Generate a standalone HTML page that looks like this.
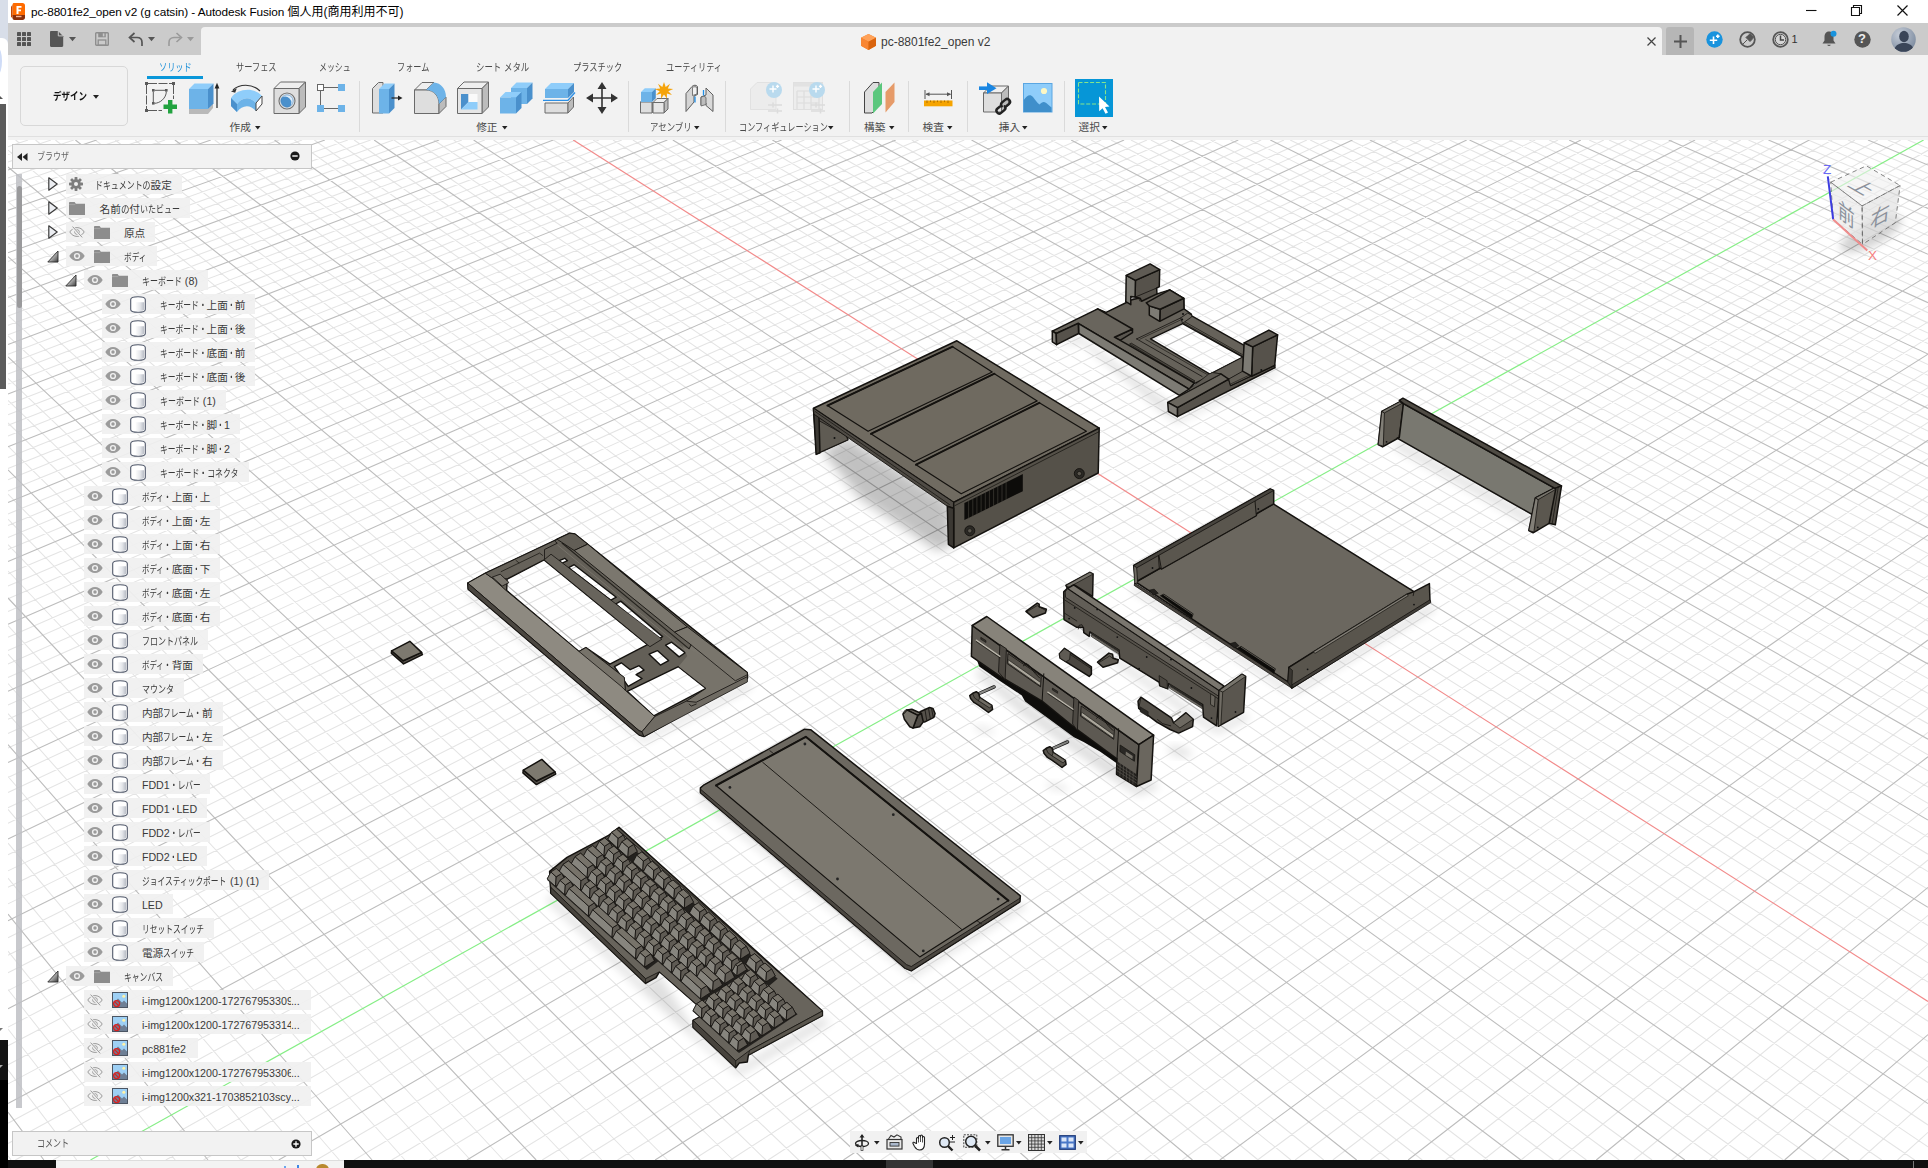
<!DOCTYPE html>
<html lang="ja"><head><meta charset="utf-8"><title>pc-8801fe2_open v2 - Autodesk Fusion</title>
<style>
html,body{margin:0;padding:0}
body{width:1928px;height:1168px;overflow:hidden;position:relative;background:#fff;font-family:"Liberation Sans","Noto Sans CJK JP",sans-serif;font-size:11px;color:#333}
.abs{position:absolute}
#vp{position:absolute;left:0;top:0;width:1928px;height:1168px}
#title{position:absolute;left:8px;top:0;width:1920px;height:23px;background:#fff}
#title .t{position:absolute;left:23px;top:2px;font-size:11.8px;color:#000;white-space:nowrap;letter-spacing:-0.08px}
#qat{position:absolute;left:8px;top:23px;width:1920px;height:32px;background:#cbcbcb}
#tab{position:absolute;left:193px;top:4px;width:1461px;height:28px;background:#f2f2f2;border-radius:4px 4px 0 0}
#tb{position:absolute;left:8px;top:55px;width:1920px;height:84.5px;background:#f2f2f2}
#tb:after{content:'';position:absolute;left:0;top:81px;width:100%;height:1px;background:#e0e0e0}
.tabl{position:absolute;top:60px;font-size:10.67px;color:#4a4a4a;white-space:nowrap;line-height:14px}
.grp{position:absolute;top:120px;font-size:10.67px;color:#4a4a4a;white-space:nowrap;line-height:14px}
.sep{position:absolute;top:81px;width:1px;height:51px;background:#dadada}
.k{display:inline-block;white-space:nowrap;vertical-align:top}
.k>span{display:inline-block;transform-origin:0 50%;white-space:nowrap}
.row{position:absolute;height:20px;background:rgba(240,240,240,.92);white-space:nowrap}
.row .tx{position:absolute;top:4px;font-size:10.67px;line-height:14px;color:#3a3a3a;white-space:nowrap}
.row .txs{position:static;display:inline-block;margin-top:4px}
.row .lat{font-size:10.7px;letter-spacing:0}
svg{position:absolute;overflow:visible}
</style></head><body>

<svg width="0" height="0" style="position:absolute"><defs>
<symbol id="eye" viewBox="0 0 16 12"><path d="M0.3 6C2.2 2.6 5 1 8 1s5.8 1.6 7.7 5C13.8 9.4 11 11 8 11S2.2 9.4.3 6Z" fill="#9b9b9b"/><circle cx="8" cy="6" r="3.1" fill="#f0f0f0"/><circle cx="8" cy="6" r="1.7" fill="#9b9b9b"/></symbol>
<symbol id="eyeoff" viewBox="0 0 16 12"><path d="M0.8 6C2.6 3 5.2 1.6 8 1.6S13.4 3 15.2 6C13.4 9 10.800 10.4 8 10.400S2.6 9 .8 6Z" fill="none" stroke="#9b9b9b" stroke-width="1"/><circle cx="8" cy="6" r="2.3" fill="none" stroke="#9b9b9b" stroke-width="1"/><path d="M3.2.6L12.8 11.400" stroke="#f0f0f0" stroke-width="2.6"/><path d="M3.6.6L13.2 11.400" stroke="#9b9b9b" stroke-width="1"/></symbol>
<symbol id="fold" viewBox="0 0 16 13"><path d="M0 1.2C0 .5.4 0 1 0h4.600l1.300 1.700H16V13H0Z" fill="#8d8d8d"/><path d="M0 2.600h6.200" stroke="#a9a9a9" stroke-width=".8"/></symbol>
<symbol id="gear" viewBox="0 0 14 14"><g fill="#7d7d7d"><circle cx="7" cy="7" r="4.700"/><g id="gt"><rect x="5.600" y="0" width="2.800" height="14" rx=".6"/></g><use href="#gt" transform="rotate(45 7 7)"/><use href="#gt" transform="rotate(90 7 7)"/><use href="#gt" transform="rotate(135 7 7)"/></g><circle cx="7" cy="7" r="2" fill="#f0f0f0"/></symbol>
<linearGradient id="bodyg" x1="0" y1="0" x2="1" y2="0"><stop offset="0" stop-color="#fdfdfd"/><stop offset=".55" stop-color="#e4e6ea"/><stop offset="1" stop-color="#b9bdc6"/></linearGradient>
<symbol id="body" viewBox="0 0 16 17"><path d="M.7 3.500C.7 1.800 3.500.7 8 .7s7.300 1.100 7.300 2.800v10c0 1.700-2.800 2.800-7.300 2.800S.7 15.200.7 13.500Z" fill="#fff" stroke="#50586a" stroke-width="1.100"/><path d="M5.500 6.300h8.500v7.500c-1 1-2.800 1.400-5 1.400-1.300 0-2.600-.2-3.500-.6Z" fill="url(#bodyg)"/></symbol>
<symbol id="img" viewBox="0 0 16 16"><rect x=".5" y=".5" width="15" height="15" fill="#9ed0f5" stroke="#4b5563" stroke-width="1"/><path d="M1 11.500L6 6.500l4 4 2-2 3 3V15H1Z" fill="#6e7f95"/><circle cx="11.800" cy="4.200" r="1.500" fill="#fff3a8"/><circle cx="4.600" cy="11.600" r="3" fill="none" stroke="#d9201f" stroke-width="1.300"/><path d="M2.600 9.600l4 4" stroke="#d9201f" stroke-width="1.300"/></symbol>
<linearGradient id="trg" x1="0" y1="0" x2="1" y2="1"><stop offset="0" stop-color="#f4f4f4"/><stop offset=".5" stop-color="#b5b5b5"/><stop offset="1" stop-color="#3c3c3c"/></linearGradient>
<symbol id="texp" viewBox="0 0 12 13"><path d="M11 1V12H.8Z" fill="url(#trg)" stroke="#2e2e2e" stroke-width=".9" stroke-linejoin="round"/></symbol>
<symbol id="tcol" viewBox="0 0 10 14"><path d="M.8.800L9.200 7 .8 13.200Z" fill="#eceef2" stroke="#3a3a3a" stroke-width="1.200" stroke-linejoin="round"/></symbol>
</defs></svg>
<svg id="vp" width="1928" height="1168" viewBox="0 0 1928 1168"><rect x="8" y="137" width="1920" height="1023" fill="#fff"/>
<g shape-rendering="auto"><path d="M8.0 146.7L28.1 140.0M8.0 154.4L51.0 140.0M8.0 162.1L73.8 140.0M8.0 177.9L119.5 140.0M8.0 185.9L142.3 140.0M8.0 193.9L165.1 140.0M8.0 202.1L188.0 140.0M8.0 218.6L233.6 140.0M8.0 227.0L256.4 140.0M8.0 235.5L279.3 140.0M8.0 244.0L302.1 140.0M8.0 261.4L347.8 140.0M8.0 270.3L370.6 140.0M8.0 279.2L393.4 140.0M8.0 288.2L416.3 140.0M8.0 1155.8L11.1 1160.0M8.0 306.6L461.9 140.0M8.0 1069.9L76.7 1160.0M8.0 315.9L484.8 140.0M8.0 1029.0L109.6 1160.0M8.0 325.3L507.6 140.0M8.0 989.5L142.4 1160.0M8.0 334.8L530.4 140.0M8.0 951.2L175.2 1160.0M8.0 354.2L576.1 140.0M8.0 878.1L240.8 1160.0M8.0 364.0L598.9 140.0M8.0 843.2L273.6 1160.0M8.0 373.9L621.8 140.0M8.0 809.4L306.4 1160.0M8.0 384.0L644.6 140.0M8.0 776.5L339.3 1160.0M8.0 404.4L690.3 140.0M8.0 713.6L404.9 1160.0M8.0 414.8L713.1 140.0M8.0 683.5L437.7 1160.0M8.0 425.3L735.9 140.0M8.0 654.2L470.5 1160.0M8.0 436.0L758.8 140.0M8.0 625.7L503.3 1160.0M8.0 457.6L804.4 140.0M8.0 571.0L569.0 1160.0M8.0 468.6L827.3 140.0M8.0 544.7L601.8 1160.0M8.0 479.7L850.1 140.0M8.0 519.1L634.6 1160.0M8.0 491.0L872.9 140.0M8.0 494.2L667.4 1160.0M8.0 513.9L918.6 140.0M8.0 446.1L733.1 1160.0M8.0 525.6L941.5 140.0M8.0 423.0L765.9 1160.0M8.0 537.4L964.3 140.0M8.0 400.4L798.7 1160.0M8.0 549.4L987.1 140.0M8.0 378.4L831.5 1160.0M8.0 573.7L1032.8 140.0M8.0 335.9L897.2 1160.0M8.0 586.1L1055.6 140.0M8.0 315.4L930.0 1160.0M8.0 598.7L1078.5 140.0M8.0 295.4L962.8 1160.0M8.0 611.4L1101.3 140.0M8.0 275.8L995.6 1160.0M8.0 637.3L1147.0 140.0M8.0 237.9L1061.3 1160.0M8.0 650.5L1169.8 140.0M8.0 219.6L1094.1 1160.0M8.0 663.9L1192.7 140.0M8.0 201.7L1126.9 1160.0M8.0 677.5L1215.5 140.0M8.0 184.2L1159.7 1160.0M8.0 705.1L1261.2 140.0M8.0 150.2L1225.4 1160.0M8.0 719.2L1284.0 140.0M15.6 140.0L1258.2 1160.0M8.0 733.4L1306.9 140.0M35.5 140.0L1291.0 1160.0M8.0 747.9L1329.7 140.0M55.4 140.0L1323.8 1160.0M8.0 777.4L1375.4 140.0M95.3 140.0L1389.5 1160.0M8.0 792.5L1398.2 140.0M115.2 140.0L1422.3 1160.0M8.0 807.7L1421.0 140.0M135.1 140.0L1455.1 1160.0M8.0 823.2L1443.9 140.0M155.0 140.0L1487.9 1160.0M8.0 854.8L1489.6 140.0M194.8 140.0L1553.6 1160.0M8.0 870.9L1512.4 140.0M214.7 140.0L1586.4 1160.0M8.0 887.3L1535.2 140.0M234.7 140.0L1619.2 1160.0M8.0 903.9L1558.1 140.0M254.6 140.0L1652.1 1160.0M8.0 937.8L1603.8 140.0M294.4 140.0L1717.7 1160.0M8.0 955.2L1626.6 140.0M314.3 140.0L1750.5 1160.0M8.0 972.7L1649.5 140.0M334.2 140.0L1783.4 1160.0M8.0 990.6L1672.3 140.0M354.1 140.0L1816.2 1160.0M8.0 1027.1L1718.0 140.0M394.0 140.0L1881.8 1160.0M8.0 1045.8L1740.8 140.0M413.9 140.0L1914.7 1160.0M8.0 1064.7L1763.7 140.0M433.8 140.0L1928.0 1146.9M8.0 1083.9L1786.5 140.0M453.7 140.0L1928.0 1125.0M8.0 1123.3L1832.2 140.0M493.5 140.0L1928.0 1082.5M8.0 1143.5L1855.0 140.0M513.5 140.0L1928.0 1061.7M15.3 1160.0L1877.9 140.0M533.4 140.0L1928.0 1041.3M52.9 1160.0L1900.7 140.0M553.3 140.0L1928.0 1021.2M128.2 1160.0L1928.0 150.3M593.1 140.0L1928.0 982.0M165.8 1160.0L1928.0 163.3M613.0 140.0L1928.0 962.9M203.5 1160.0L1928.0 176.6M632.9 140.0L1928.0 944.1M241.1 1160.0L1928.0 190.0M652.9 140.0L1928.0 925.5M316.4 1160.0L1928.0 217.6M692.7 140.0L1928.0 889.3M354.0 1160.0L1928.0 231.7M712.6 140.0L1928.0 871.6M391.7 1160.0L1928.0 246.1M732.5 140.0L1928.0 854.2M429.3 1160.0L1928.0 260.7M752.4 140.0L1928.0 837.0M504.6 1160.0L1928.0 290.7M792.3 140.0L1928.0 803.4M542.2 1160.0L1928.0 306.2M812.2 140.0L1928.0 787.0M579.9 1160.0L1928.0 321.9M832.1 140.0L1928.0 770.8M617.5 1160.0L1928.0 337.9M852.0 140.0L1928.0 754.9M692.8 1160.0L1928.0 370.7M891.9 140.0L1928.0 723.7M730.4 1160.0L1928.0 387.6M911.8 140.0L1928.0 708.4M768.1 1160.0L1928.0 404.8M931.7 140.0L1928.0 693.3M805.7 1160.0L1928.0 422.4M951.6 140.0L1928.0 678.5M881.0 1160.0L1928.0 458.5M991.5 140.0L1928.0 649.4M918.7 1160.0L1928.0 477.1M1011.4 140.0L1928.0 635.2M956.3 1160.0L1928.0 496.0M1031.3 140.0L1928.0 621.1M993.9 1160.0L1928.0 515.4M1051.2 140.0L1928.0 607.3M1069.2 1160.0L1928.0 555.2M1091.0 140.0L1928.0 580.1M1106.9 1160.0L1928.0 575.7M1111.0 140.0L1928.0 566.8M1144.5 1160.0L1928.0 596.7M1130.9 140.0L1928.0 553.6M1182.2 1160.0L1928.0 618.1M1150.8 140.0L1928.0 540.7M1257.5 1160.0L1928.0 662.3M1190.6 140.0L1928.0 515.2M1295.1 1160.0L1928.0 685.2M1210.6 140.0L1928.0 502.8M1332.8 1160.0L1928.0 708.5M1230.5 140.0L1928.0 490.4M1370.4 1160.0L1928.0 732.4M1250.4 140.0L1928.0 478.3M1445.7 1160.0L1928.0 781.7M1290.2 140.0L1928.0 454.4M1483.4 1160.0L1928.0 807.2M1310.2 140.0L1928.0 442.7M1521.0 1160.0L1928.0 833.3M1330.1 140.0L1928.0 431.1M1558.7 1160.0L1928.0 860.0M1350.0 140.0L1928.0 419.7M1634.0 1160.0L1928.0 915.4M1389.8 140.0L1928.0 397.3M1671.6 1160.0L1928.0 944.1M1409.8 140.0L1928.0 386.3M1709.3 1160.0L1928.0 973.6M1429.7 140.0L1928.0 375.4M1746.9 1160.0L1928.0 1003.7M1449.6 140.0L1928.0 364.6M1822.2 1160.0L1928.0 1066.4M1489.4 140.0L1928.0 343.5M1859.9 1160.0L1928.0 1098.9M1509.4 140.0L1928.0 333.1M1897.5 1160.0L1928.0 1132.3M1529.3 140.0L1928.0 322.9M1549.2 140.0L1928.0 312.7M1589.1 140.0L1928.0 292.8M1609.0 140.0L1928.0 283.0M1628.9 140.0L1928.0 273.3M1648.8 140.0L1928.0 263.7M1688.7 140.0L1928.0 244.9M1708.6 140.0L1928.0 235.6M1728.5 140.0L1928.0 226.5M1748.4 140.0L1928.0 217.4M1788.3 140.0L1928.0 199.6M1808.2 140.0L1928.0 190.8M1828.1 140.0L1928.0 182.1M1848.0 140.0L1928.0 173.6M1887.9 140.0L1928.0 156.7M1907.8 140.0L1928.0 148.3M1927.7 140.0L1928.0 140.1" stroke="#e4e4e4" stroke-width="1.05" fill="none"/>
<path d="M8.0 170.0L96.6 140.0M8.0 210.3L210.8 140.0M8.0 252.7L324.9 140.0M8.0 297.4L439.1 140.0M8.0 1112.1L43.9 1160.0M8.0 344.4L553.3 140.0M8.0 914.1L208.0 1160.0M8.0 394.1L667.4 140.0M8.0 744.6L372.1 1160.0M8.0 446.7L781.6 140.0M8.0 598.0L536.2 1160.0M8.0 502.4L895.8 140.0M8.0 469.9L700.2 1160.0M8.0 561.5L1010.0 140.0M8.0 356.9L864.3 1160.0M8.0 624.3L1124.1 140.0M8.0 256.6L1028.4 1160.0M8.0 691.2L1238.3 140.0M8.0 167.0L1192.5 1160.0M8.0 762.6L1352.5 140.0M75.4 140.0L1356.7 1160.0M8.0 838.9L1466.7 140.0M174.9 140.0L1520.8 1160.0M8.0 920.7L1580.9 140.0M274.5 140.0L1684.9 1160.0M8.0 1008.7L1695.1 140.0M374.1 140.0L1849.0 1160.0M8.0 1103.5L1809.3 140.0M473.6 140.0L1928.0 1103.6M278.7 1160.0L1928.0 203.7M672.8 140.0L1928.0 907.3M466.9 1160.0L1928.0 275.6M772.4 140.0L1928.0 820.1M655.1 1160.0L1928.0 354.1M871.9 140.0L1928.0 739.2M843.4 1160.0L1928.0 440.3M971.5 140.0L1928.0 663.9M1031.6 1160.0L1928.0 535.1M1071.1 140.0L1928.0 593.6M1219.8 1160.0L1928.0 640.0M1170.7 140.0L1928.0 527.9M1408.1 1160.0L1928.0 756.7M1270.3 140.0L1928.0 466.3M1596.3 1160.0L1928.0 887.4M1369.9 140.0L1928.0 408.4M1784.6 1160.0L1928.0 1034.6M1469.5 140.0L1928.0 354.0M1569.1 140.0L1928.0 302.7M1668.7 140.0L1928.0 254.3M1768.4 140.0L1928.0 208.4M1868.0 140.0L1928.0 165.1" stroke="#bdbdbd" stroke-width="1.1" fill="none"/>
<path d="M573.2 140.0L1928.0 1001.5" stroke="#f28a8a" stroke-width="1.2" fill="none"/>
<path d="M90.5 1160.0L1923.6 140.0" stroke="#86ee86" stroke-width="1.2" fill="none"/></g>
<defs><filter id="bl5" x="-30%" y="-30%" width="160%" height="160%"><feGaussianBlur stdDeviation="4"/></filter><filter id="bl6" x="-30%" y="-30%" width="160%" height="160%"><feGaussianBlur stdDeviation="5"/></filter><filter id="bl7" x="-30%" y="-30%" width="160%" height="160%"><feGaussianBlur stdDeviation="6"/></filter><filter id="bl8" x="-30%" y="-30%" width="160%" height="160%"><feGaussianBlur stdDeviation="7"/></filter></defs>
<g><polygon points="1056.9,346.7 1078.9,335.0 1169.7,403.7 1177.4,418.0 1275.3,368.7 1279.9,372.6 1177.4,423.2 1164.5,414.1 1081.5,342.8" fill="#000" opacity="0.11" filter="url(#bl5)"/><path d="M1078.6 323.6L1097.7 308.8L1106.1 312.3L1129.5 301.0L1125.8 301.2L1157.0 293.9L1169.7 289.8L1183.8 298.3L1184.0 308.9L1191.3 314.0L1191.7 315.9L1244.2 345.4L1243.6 357.7L1212.5 374.6L1194.3 383.6L1189.1 389.2ZM1150.5 338.9L1182.6 323.6L1242.9 357.1L1209.9 374.2Z" fill="#66625a" fill-rule="evenodd" stroke="#14120f" stroke-width="1.4" stroke-linejoin="round"/><polygon points="1209.9,374.2 1242.9,357.1 1243.8,371.1 1228.7,379.4 1220.9,373.9 1212.5,372.6" fill="#66625a" stroke="#14120f" stroke-width="0.8" stroke-linejoin="round" /><path d="M1136.6 338.9L1180.7 317.9" fill="none" stroke="#14120f" stroke-width="0.8" stroke-linejoin="round" stroke-linecap="round"/><path d="M1139.8 339.2L1181.6 319.5" fill="none" stroke="#14120f" stroke-width="0.6" stroke-linejoin="round" stroke-linecap="round"/><path d="M1136.6 338.9L1202.1 376.5" fill="none" stroke="#14120f" stroke-width="0.8" stroke-linejoin="round" stroke-linecap="round"/><path d="M1145.7 339.5L1207.3 374.6" fill="none" stroke="#14120f" stroke-width="0.6" stroke-linejoin="round" stroke-linecap="round"/><path d="M1185.2 322.0L1242.3 354.5" fill="none" stroke="#14120f" stroke-width="0.7" stroke-linejoin="round" stroke-linecap="round"/><path d="M1183.9 323.1L1242.5 356.0" fill="none" stroke="#14120f" stroke-width="0.6" stroke-linejoin="round" stroke-linecap="round"/><polygon points="1129.5,344.1 1131.4,343.2 1195.0,381.0 1193.0,382.3" fill="#4a4640" stroke="#14120f" stroke-width="0.7" stroke-linejoin="round" /><polygon points="1180.7,317.9 1187.8,313.0 1191.7,315.3 1191.7,316.9 1182.6,323.3" fill="#6d6961" stroke="#14120f" stroke-width="0.8" stroke-linejoin="round" /><circle cx="1183.0" cy="313.9" r="1.0" fill="#111" stroke="None" stroke-width="0.9"/><circle cx="1182.2" cy="319.5" r="1.0" fill="#111" stroke="None" stroke-width="0.9"/><polygon points="1135.4,280.4 1159.7,269.6 1159.3,286.6 1156.6,288.1 1157.0,293.9 1141.6,301.2 1140.1,298.2 1135.1,297.0" fill="#56524b" stroke="#14120f" stroke-width="1.5" stroke-linejoin="round" /><polygon points="1126.2,275.4 1135.4,280.4 1135.1,297.0 1130.8,296.6 1130.8,304.7 1125.8,301.6" fill="#7d7b74" stroke="#14120f" stroke-width="1.5" stroke-linejoin="round" /><polygon points="1126.2,275.4 1150.1,263.9 1159.7,269.6 1135.4,280.4" fill="#5f5b54" stroke="#14120f" stroke-width="1.5" stroke-linejoin="round" /><path d="M1130.8 296.6L1132.4 298.2L1138.5 298.2L1140.1 301.2" fill="none" stroke="#14120f" stroke-width="0.8" stroke-linejoin="round" stroke-linecap="round"/><path d="M1135.4 297.0L1156.6 288.1" fill="none" stroke="#14120f" stroke-width="0.8" stroke-linejoin="round" stroke-linecap="round"/><polygon points="1160.1,309.3 1183.8,298.3 1184.0,308.9 1159.7,321.3" fill="#56524b" stroke="#14120f" stroke-width="1.5" stroke-linejoin="round" /><polygon points="1149.3,305.9 1160.1,309.3 1159.7,321.3 1149.3,315.1" fill="#7d7b74" stroke="#14120f" stroke-width="1.5" stroke-linejoin="round" /><polygon points="1146.2,302.8 1169.7,289.8 1183.8,298.3 1160.1,309.3 1149.3,305.9" fill="#615d56" stroke="#14120f" stroke-width="1.5" stroke-linejoin="round" /><polygon points="1114.4,337.2 1132.5,329.0 1132.5,332.7 1120.1,340.3" fill="#5a564f" stroke="#14120f" stroke-width="1.5" stroke-linejoin="round" /><polygon points="1052.3,331.1 1097.7,308.8 1132.5,329.0 1114.4,337.2 1129.1,345.4 1194.3,383.0 1189.1,389.2 1078.6,323.6 1056.2,333.5" fill="#69655d" stroke="#14120f" stroke-width="1.5" stroke-linejoin="round" /><polygon points="1052.3,331.1 1056.2,333.5 1056.6,344.7 1052.3,341.8" fill="#83807a" stroke="#14120f" stroke-width="1.5" stroke-linejoin="round" /><polygon points="1056.2,333.5 1078.3,323.3 1078.6,333.5 1056.6,344.7" fill="#56524b" stroke="#14120f" stroke-width="1.5" stroke-linejoin="round" /><polygon points="1078.6,323.6 1189.1,389.2 1179.4,395.3 1078.9,333.5" fill="#7d7b74" stroke="#14120f" stroke-width="1.5" stroke-linejoin="round" /><polygon points="1177.4,407.6 1228.7,379.1 1230.6,385.6 1274.7,364.8 1275.0,367.7 1177.4,416.7" fill="#56524b" stroke="#14120f" stroke-width="1.5" stroke-linejoin="round" /><polygon points="1228.7,379.1 1243.6,370.7 1251.6,376.2 1274.7,364.8 1230.6,385.6" fill="#625e56" stroke="#14120f" stroke-width="0.8" stroke-linejoin="round" /><path d="M1230.6 384.0L1273.4 363.8" fill="none" stroke="#14120f" stroke-width="0.6" stroke-linejoin="round" stroke-linecap="round"/><polygon points="1167.7,402.4 1220.9,373.9 1228.7,379.1 1177.4,407.6" fill="#6a665e" stroke="#14120f" stroke-width="1.5" stroke-linejoin="round" /><polygon points="1167.7,402.4 1177.4,407.6 1177.4,416.7 1168.4,411.5" fill="#83807a" stroke="#14120f" stroke-width="1.5" stroke-linejoin="round" /><polygon points="1208.6,374.2 1212.5,372.6 1220.9,373.9 1189.1,390.8 1189.1,389.2" fill="#5d5952" stroke="#14120f" stroke-width="0.7" stroke-linejoin="round" /><polygon points="1252.7,346.9 1277.6,334.8 1274.7,365.5 1251.6,376.2" fill="#56524b" stroke="#14120f" stroke-width="1.5" stroke-linejoin="round" /><polygon points="1244.2,342.8 1252.7,346.9 1251.6,376.2 1242.5,371.1" fill="#7d7b74" stroke="#14120f" stroke-width="1.5" stroke-linejoin="round" /><polygon points="1244.2,342.8 1268.9,330.1 1277.6,334.8 1252.7,346.9" fill="#5f5b54" stroke="#14120f" stroke-width="1.5" stroke-linejoin="round" /><circle cx="1261.3" cy="370.0" r="1.0" fill="#111" stroke="None" stroke-width="0.9"/></g>
<g><polygon points="1397.1,438.2 1532.4,514.6 1530.2,525.5 1394.9,448.4" fill="#000" opacity="0.1" filter="url(#bl6)"/><polygon points="1381.8,411.3 1399.6,401.8 1403.6,404.0 1399.3,437.5 1382.6,446.9 1378.2,444.7" fill="#5b574f" stroke="#14120f" stroke-width="1.5" stroke-linejoin="round" /><polygon points="1381.8,411.3 1384.4,412.9 1383.3,446.2 1378.2,444.7" fill="#827f77" stroke="#14120f" stroke-width="0.8" stroke-linejoin="round" /><polygon points="1381.8,411.3 1399.6,401.8 1402.2,403.3 1384.4,412.9" fill="#77746c" stroke="#14120f" stroke-width="0.8" stroke-linejoin="round" /><polygon points="1403.4,403.6 1555.0,488.4 1536.1,497.9 1532.4,514.6 1397.1,438.2 1399.3,437.5" fill="#797870" stroke="#14120f" stroke-width="1.5" stroke-linejoin="round" /><polygon points="1399.3,400.4 1402.9,398.2 1561.5,485.9 1555.0,488.4 1403.6,403.6" fill="#4f4b44" stroke="#14120f" stroke-width="1.5" stroke-linejoin="round" /><polygon points="1555.0,488.4 1561.5,485.9 1555.3,524.8 1549.1,523.3" fill="#514d46" stroke="#14120f" stroke-width="1.5" stroke-linejoin="round" /><path d="M1558.2 487.4L1552.1 524.0" fill="none" stroke="#14120f" stroke-width="0.7" stroke-linejoin="round" stroke-linecap="round"/><polygon points="1535.3,497.9 1553.5,488.4 1555.7,489.4 1549.1,523.3 1533.1,532.8 1528.8,530.6" fill="#5b574f" stroke="#14120f" stroke-width="1.5" stroke-linejoin="round" /><polygon points="1535.3,497.9 1538.2,499.6 1533.9,532.0 1528.8,530.6" fill="#827f77" stroke="#14120f" stroke-width="0.8" stroke-linejoin="round" /><polygon points="1535.3,497.9 1553.5,488.4 1555.7,489.4 1538.2,499.6" fill="#77746c" stroke="#14120f" stroke-width="0.8" stroke-linejoin="round" /><circle cx="1386.6" cy="441.8" r="0.9" fill="#111" stroke="None" stroke-width="0.9"/><circle cx="1537.8" cy="527.4" r="0.9" fill="#111" stroke="None" stroke-width="0.9"/></g>
<g><polygon points="822.1,451.0 847.8,437.3 949.4,501.9 953.1,544.7 937.7,550.7 860.6,498.7" fill="#000" opacity="0.24" filter="url(#bl7)"/><polygon points="813.5,408.8 816.7,453.7 847.8,439.8 846.1,420.6" fill="#4d4943" stroke="#14120f" stroke-width="1.5" stroke-linejoin="round" /><polygon points="818.9,420.6 846.1,435.6 847.8,439.8 816.7,453.7" fill="#5f5b53" stroke="#14120f" stroke-width="0.8" stroke-linejoin="round" /><polygon points="813.5,408.8 818.9,414.2 820.0,452.7 816.1,454.4" fill="#3d3a35" stroke="#14120f" stroke-width="1.5" stroke-linejoin="round" /><polygon points="813.5,408.2 956.9,340.8 1099.2,428.1 953.7,502.3" fill="#706b61" stroke="#14120f" stroke-width="1.5" stroke-linejoin="round" /><polygon points="813.5,408.2 953.7,502.3 953.7,508.3 947.3,506.2 814.0,414.2" fill="#4f4b45" stroke="#14120f" stroke-width="0.9" stroke-linejoin="round" /><path d="M815.3 411.6L949.4 504.5" fill="none" stroke="#14120f" stroke-width="0.7" stroke-linejoin="round" stroke-linecap="round"/><polygon points="953.7,502.3 1099.2,428.1 1098.2,473.0 953.7,547.9" fill="#555149" stroke="#14120f" stroke-width="1.5" stroke-linejoin="round" /><polygon points="947.3,506.2 953.7,508.3 953.7,547.9 948.4,544.3" fill="#3b3833" stroke="#14120f" stroke-width="1.5" stroke-linejoin="round" /><polygon points="827.4,405.6 952.6,346.7 992.2,372.0 868.1,431.3" fill="#6f6a60" stroke="#14120f" stroke-width="1.2" stroke-linejoin="round" /><path d="M827.4 405.6L952.6 346.7" fill="none" stroke="#14120f" stroke-width="1.9" stroke-linejoin="round" stroke-linecap="round"/><polygon points="870.9,433.8 994.4,373.7 1037.2,400.9 914.1,461.7" fill="#6f6a60" stroke="#14120f" stroke-width="1.2" stroke-linejoin="round" /><path d="M870.9 433.8L994.4 373.7" fill="none" stroke="#14120f" stroke-width="1.9" stroke-linejoin="round" stroke-linecap="round"/><polygon points="916.0,464.7 1039.3,402.8 1086.4,431.3 961.2,493.8" fill="#6f6a60" stroke="#14120f" stroke-width="1.2" stroke-linejoin="round" /><path d="M916.0 464.7L1039.3 402.8" fill="none" stroke="#14120f" stroke-width="1.9" stroke-linejoin="round" stroke-linecap="round"/><path d="M954.8 505.7L1099.0 431.7" fill="none" stroke="#14120f" stroke-width="0.7" stroke-linejoin="round" stroke-linecap="round"/><polygon points="964.4,503.0 1022.8,474.1 1022.8,491.2 964.4,520.1" fill="#0d0c0a"  /><path d="M968.6 500.9L968.6 518.0" fill="none" stroke="#4a463f" stroke-width="0.6" stroke-linejoin="round" stroke-linecap="round"/><path d="M972.8 498.8L972.8 516.0" fill="none" stroke="#4a463f" stroke-width="0.6" stroke-linejoin="round" stroke-linecap="round"/><path d="M976.9 496.8L976.9 513.9" fill="none" stroke="#4a463f" stroke-width="0.6" stroke-linejoin="round" stroke-linecap="round"/><path d="M981.1 494.7L981.1 511.8" fill="none" stroke="#4a463f" stroke-width="0.6" stroke-linejoin="round" stroke-linecap="round"/><path d="M985.3 492.6L985.3 509.8" fill="none" stroke="#4a463f" stroke-width="0.6" stroke-linejoin="round" stroke-linecap="round"/><path d="M989.4 490.6L989.4 507.7" fill="none" stroke="#4a463f" stroke-width="0.6" stroke-linejoin="round" stroke-linecap="round"/><path d="M993.6 488.5L993.6 505.6" fill="none" stroke="#4a463f" stroke-width="0.6" stroke-linejoin="round" stroke-linecap="round"/><path d="M997.8 486.5L997.8 503.6" fill="none" stroke="#4a463f" stroke-width="0.6" stroke-linejoin="round" stroke-linecap="round"/><path d="M1002.0 484.4L1002.0 501.5" fill="none" stroke="#4a463f" stroke-width="0.6" stroke-linejoin="round" stroke-linecap="round"/><path d="M1006.1 482.3L1006.1 499.5" fill="none" stroke="#4a463f" stroke-width="0.6" stroke-linejoin="round" stroke-linecap="round"/><circle cx="969.8" cy="530.8" r="5.0" fill="#2b2925" stroke="#14120f" stroke-width="0.9"/><circle cx="969.8" cy="530.8" r="2.2" fill="#5a564e" stroke="#14120f" stroke-width="0.7"/><circle cx="1079.3" cy="473.6" r="5.0" fill="#2b2925" stroke="#14120f" stroke-width="0.9"/><circle cx="1079.3" cy="473.6" r="2.2" fill="#5a564e" stroke="#14120f" stroke-width="0.7"/><circle cx="834.5" cy="438.1" r="1.0" fill="#111" stroke="None" stroke-width="0.9"/></g>
<g><polygon points="1291.8,687.7 1430.5,603.5 1436.6,609.7 1294.9,694.9" fill="#000" opacity="0.1" filter="url(#bl5)"/><polygon points="1134.7,585.0 1291.8,688.2 1286.7,692.9 1130.5,590.2" fill="#000" opacity="0.1" filter="url(#bl5)"/><polygon points="1135.7,582.0 1273.3,503.9 1414.0,591.6 1288.9,667.4 1287.9,682.0" fill="#6b675f" stroke="#14120f" stroke-width="1.5" stroke-linejoin="round" /><polygon points="1133.6,565.5 1270.2,488.9 1273.7,490.5 1273.7,503.9 1256.9,513.5 1256.3,515.6 1161.4,569.0 1160.3,568.2 1135.7,582.0" fill="#56524b" stroke="#14120f" stroke-width="1.5" stroke-linejoin="round" /><polygon points="1158.3,552.2 1254.8,498.8 1256.3,515.6 1161.4,569.0" fill="#5a564e" stroke="#14120f" stroke-width="0.9" stroke-linejoin="round" /><path d="M1158.3 552.2L1159.3 568.6" fill="none" stroke="#14120f" stroke-width="0.9" stroke-linejoin="round" stroke-linecap="round"/><polygon points="1133.6,565.5 1270.2,488.9 1273.7,490.5 1136.7,567.8" fill="#47443e" stroke="#14120f" stroke-width="0.8" stroke-linejoin="round" /><polygon points="1133.6,565.5 1136.7,567.8 1137.7,582.6 1134.7,584.0" fill="#6f6b63" stroke="#14120f" stroke-width="0.8" stroke-linejoin="round" /><polygon points="1134.7,583.0 1287.9,682.0 1291.8,688.2 1134.2,585.4" fill="#4a4640" stroke="#14120f" stroke-width="0.8" stroke-linejoin="round" /><polygon points="1149.0,590.2 1154.2,589.1 1158.3,593.3 1153.5,594.9" fill="#23211e" stroke="#14120f" stroke-width="0.6" stroke-linejoin="round" /><polygon points="1160.3,595.7 1163.8,594.1 1193.2,613.8 1191.8,618.3" fill="#0c0b09" stroke="#14120f" stroke-width="0.6" stroke-linejoin="round" /><path d="M1163.8 594.9L1192.6 614.2" fill="none" stroke="#6b675f" stroke-width="0.8" stroke-linejoin="round" stroke-linecap="round"/><polygon points="1230.2,643.6 1235.3,642.1 1239.0,645.8 1234.3,647.9" fill="#23211e" stroke="#14120f" stroke-width="0.6" stroke-linejoin="round" /><polygon points="1237.4,648.3 1241.1,646.3 1275.4,668.8 1273.9,673.4" fill="#0c0b09" stroke="#14120f" stroke-width="0.6" stroke-linejoin="round" /><path d="M1241.1 647.1L1274.7 669.3" fill="none" stroke="#6b675f" stroke-width="0.8" stroke-linejoin="round" stroke-linecap="round"/><polygon points="1288.9,667.4 1313.4,651.8 1406.8,594.3 1414.0,591.6 1429.4,583.6 1430.0,601.5 1291.8,688.2" fill="#59554d" stroke="#14120f" stroke-width="1.5" stroke-linejoin="round" /><polygon points="1313.4,651.8 1406.8,594.3 1408.3,595.7 1315.0,653.4" fill="#817d75" stroke="#14120f" stroke-width="0.7" stroke-linejoin="round" /><path d="M1414.0 591.6L1413.2 595.7" fill="none" stroke="#14120f" stroke-width="0.8" stroke-linejoin="round" stroke-linecap="round"/><polygon points="1291.8,684.9 1430.0,599.8 1430.9,602.5 1291.8,688.2" fill="#403d38" stroke="#14120f" stroke-width="0.8" stroke-linejoin="round" /><polygon points="1288.9,667.4 1287.9,682.0 1291.8,688.2 1292.4,670.3" fill="#3a3732" stroke="#14120f" stroke-width="0.7" stroke-linejoin="round" /><circle cx="1152.5" cy="568.0" r="0.9" fill="#111" stroke="None" stroke-width="0.9"/><circle cx="1258.3" cy="509.0" r="0.9" fill="#111" stroke="None" stroke-width="0.9"/><circle cx="1307.6" cy="669.3" r="0.9" fill="#111" stroke="None" stroke-width="0.9"/><circle cx="1414.0" cy="604.6" r="0.9" fill="#111" stroke="None" stroke-width="0.9"/></g>
<g><polygon points="1065.2,621.0 1119.8,659.6 1159.8,687.3 1203.5,717.8 1218.0,727.3 1244.2,712.7 1250.1,717.8 1218.0,733.9 1197.6,722.2 1063.7,627.6" fill="#000" opacity="0.12" filter="url(#bl6)"/><polygon points="1065.9,585.4 1089.9,572.3 1093.1,574.0 1092.6,596.3 1073.9,584.7 1067.4,588.3" fill="#55514a" stroke="#14120f" stroke-width="1.5" stroke-linejoin="round" /><polygon points="1065.9,585.4 1089.9,572.3 1093.1,574.0 1069.1,587.1" fill="#78756d" stroke="#14120f" stroke-width="0.7" stroke-linejoin="round" /><polygon points="1063.7,591.9 1067.4,588.3 1219.2,690.5 1216.6,725.8 1203.5,717.1 1202.7,704.7 1168.5,683.6 1167.8,688.7 1159.8,685.8 1159.1,682.2 1119.8,658.2 1119.0,650.2 1089.9,632.0 1089.2,636.3 1083.8,632.7 1083.4,627.6 1076.8,627.3 1064.0,619.6" fill="#56524b" stroke="#14120f" stroke-width="1.5" stroke-linejoin="round" /><polygon points="1067.4,588.7 1073.6,584.9 1224.1,686.1 1219.2,690.9" fill="#7a766e" stroke="#14120f" stroke-width="1.5" stroke-linejoin="round" /><polygon points="1065.2,591.9 1067.4,588.7 1219.2,690.9 1218.3,696.0 1065.5,597.3" fill="#625e57" stroke="#14120f" stroke-width="0.8" stroke-linejoin="round" /><path d="M1064.6 599.9L1218.0 698.6" fill="none" stroke="#14120f" stroke-width="0.7" stroke-linejoin="round" stroke-linecap="round"/><path d="M1064.3 613.0L1076.8 621.0" fill="none" stroke="#14120f" stroke-width="0.7" stroke-linejoin="round" stroke-linecap="round"/><polygon points="1091.4,632.2 1119.0,649.7 1119.0,652.3 1091.4,634.6" fill="#2b2925"  /><polygon points="1091.4,634.6 1119.0,652.3 1119.0,654.1 1091.4,636.6" fill="#77736b" stroke="#14120f" stroke-width="0.6" stroke-linejoin="round" /><polygon points="1169.3,683.6 1202.3,704.4 1202.3,706.9 1169.3,686.1" fill="#2b2925"  /><polygon points="1169.3,686.1 1202.3,706.9 1202.3,708.8 1169.3,688.1" fill="#77736b" stroke="#14120f" stroke-width="0.6" stroke-linejoin="round" /><polygon points="1159.1,675.6 1167.1,680.7 1167.4,688.7 1159.8,685.8" fill="#4a4640" stroke="#14120f" stroke-width="0.7" stroke-linejoin="round" /><path d="M1078.3 629.0L1079.0 625.4L1081.9 624.7L1083.4 627.9" fill="none" stroke="#14120f" stroke-width="0.8" stroke-linejoin="round" stroke-linecap="round"/><polygon points="1210.7,693.8 1215.1,696.7 1214.4,706.9 1210.5,704.4" fill="#6a665e" stroke="#14120f" stroke-width="0.7" stroke-linejoin="round" /><polygon points="1219.2,690.5 1242.0,674.2 1245.7,676.4 1243.6,712.3 1218.3,726.3" fill="#5a564f" stroke="#14120f" stroke-width="1.5" stroke-linejoin="round" /><polygon points="1219.2,690.5 1242.0,674.2 1245.7,676.4 1222.7,692.1" fill="#78756d" stroke="#14120f" stroke-width="0.7" stroke-linejoin="round" /><polygon points="1219.2,690.5 1222.7,692.1 1220.9,724.8 1218.3,726.3" fill="#716d65" stroke="#14120f" stroke-width="0.7" stroke-linejoin="round" /><circle cx="1074.7" cy="607.9" r="0.9" fill="#111" stroke="None" stroke-width="0.9"/><circle cx="1069.1" cy="618.6" r="0.9" fill="#111" stroke="None" stroke-width="0.9"/><circle cx="1097.2" cy="609.4" r="0.9" fill="#111" stroke="None" stroke-width="0.9"/><circle cx="1117.3" cy="637.1" r="0.9" fill="#111" stroke="None" stroke-width="0.9"/><circle cx="1146.7" cy="657.0" r="0.9" fill="#111" stroke="None" stroke-width="0.9"/><circle cx="1139.1" cy="668.6" r="0.9" fill="#111" stroke="None" stroke-width="0.9"/><circle cx="1171.0" cy="659.6" r="0.9" fill="#111" stroke="None" stroke-width="0.9"/><circle cx="1191.4" cy="688.0" r="0.9" fill="#111" stroke="None" stroke-width="0.9"/><circle cx="1211.5" cy="718.1" r="0.9" fill="#111" stroke="None" stroke-width="0.9"/><circle cx="1235.5" cy="712.0" r="0.9" fill="#111" stroke="None" stroke-width="0.9"/></g>
<g><polygon points="468.7,590.9 642.0,737.6 747.4,682.5 753.3,687.4 643.0,743.5 465.8,594.8" fill="#000" opacity="0.1" filter="url(#bl5)"/><path d="M467.7 583.0L485.4 573.2L554.4 540.7L557.0 539.2L569.7 533.2L575.0 534.0L747.3 672.6L747.6 678.1L644.0 736.6L639.1 735.0L468.1 589.3ZM507.1 579.1L544.1 560.0L647.5 644.7L609.9 664.2L585.9 647.6L579.0 651.5L506.7 590.5ZM627.2 691.3L678.4 666.7L706.0 688.4L653.8 715.9ZM614.4 666.7L621.3 662.8L630.2 669.7L639.1 665.7L644.0 670.1L636.1 674.6L642.0 678.5L628.2 686.4ZM649.1 654.2L657.4 650.6L668.6 660.6L660.4 665.1ZM665.6 645.2L671.6 642.2L685.1 652.7L679.1 656.9ZM568.7 567.7L574.2 564.7L616.2 597.2L610.9 600.2ZM615.7 604.0L620.7 601.1L662.6 636.6L657.4 639.6ZM559.2 560.7L564.8 558.3L567.5 560.7L562.2 563.2Z" fill="#635f57" fill-rule="evenodd" stroke="#14120f" stroke-width="1.4" stroke-linejoin="round"/><polygon points="544.1,559.9 551.0,554.2 661.9,639.2 649.9,646.7" fill="#68645c" stroke="#14120f" stroke-width="0.8" stroke-linejoin="round" /><path d="M557.7 545.2L687.3 652.4" fill="none" stroke="#77736a" stroke-width="1.0" stroke-linejoin="round" stroke-linecap="round"/><path d="M562.2 543.3L688.8 648.6" fill="none" stroke="#26241f" stroke-width="1.2" stroke-linejoin="round" stroke-linecap="round"/><path d="M567.5 541.8L691.1 644.9" fill="none" stroke="#77736a" stroke-width="0.9" stroke-linejoin="round" stroke-linecap="round"/><polygon points="467.7,583.0 485.4,573.2 492.3,578.1 506.1,590.5 579.0,651.5 585.9,647.6 624.3,677.5 625.3,690.3 654.8,716.5 642.0,731.7 639.1,730.7" fill="#8e8a81" stroke="#14120f" stroke-width="0.9" stroke-linejoin="round" /><polygon points="467.7,583.0 639.1,730.7 642.0,731.7 644.0,736.6 639.1,735.0 468.1,589.3" fill="#4a4640" stroke="#14120f" stroke-width="0.8" stroke-linejoin="round" /><polygon points="557.0,539.2 569.7,533.2 575.0,534.0 587.7,544.2 574.2,550.5" fill="#625e56" stroke="#14120f" stroke-width="0.9" stroke-linejoin="round" /><polygon points="574.2,550.5 587.7,544.2 687.3,626.9 674.6,632.1" fill="#7b776e" stroke="#14120f" stroke-width="0.9" stroke-linejoin="round" /><polygon points="674.6,632.1 687.3,626.9 747.3,672.6 747.6,678.1 733.8,684.6 687.3,652.4 691.1,644.9" fill="#79756c" stroke="#14120f" stroke-width="0.9" stroke-linejoin="round" /><path d="M691.1 644.9L735.3 680.8L747.3 674.8" fill="none" stroke="#14120f" stroke-width="0.8" stroke-linejoin="round" stroke-linecap="round"/><polygon points="682.4,646.0 687.3,655.9 678.4,666.7 706.0,688.4 686.3,701.2 696.2,702.2 734.6,683.1 706.0,657.8" fill="#77736a"  /><path d="M678.4 666.7L706.0 688.4L686.3 701.2" fill="none" stroke="#14120f" stroke-width="0.8" stroke-linejoin="round" stroke-linecap="round"/><polygon points="642.0,731.7 654.8,716.5 686.3,701.2 696.2,702.2 747.4,676.6 747.4,681.9 644.0,736.6" fill="#6f6b63" stroke="#14120f" stroke-width="0.8" stroke-linejoin="round" /><path d="M689.3 704.1L691.2 706.1L696.2 704.1" fill="none" stroke="#14120f" stroke-width="0.8" stroke-linejoin="round" stroke-linecap="round"/><polygon points="485.4,573.2 554.4,540.7 557.3,543.2 544.5,549.5 544.5,559.4 507.1,578.7 492.3,578.1" fill="#66625a" stroke="#14120f" stroke-width="0.8" stroke-linejoin="round" /><path d="M516.0 560.4L518.9 562.9" fill="none" stroke="#14120f" stroke-width="0.7" stroke-linejoin="round" stroke-linecap="round"/><path d="M501.2 571.6L539.6 553.1L542.6 555.4" fill="none" stroke="#14120f" stroke-width="0.7" stroke-linejoin="round" stroke-linecap="round"/><polygon points="492.3,577.1 500.2,574.2 509.1,582.6 502.2,586.0" fill="#7a766e" stroke="#14120f" stroke-width="0.8" stroke-linejoin="round" /><polygon points="579.0,651.5 585.9,647.6 624.3,677.5 625.3,690.3 621.3,686.4" fill="#77736a" stroke="#14120f" stroke-width="0.8" stroke-linejoin="round" /></g>
<g><polygon points="974.5,724.4 991.0,728.5 995.1,734.6 976.6,730.5" fill="#000" opacity="0.1" filter="url(#bl5)"/><polygon points="1046.4,781.9 1064.9,786.0 1069.0,792.2 1048.5,788.1" fill="#000" opacity="0.1" filter="url(#bl5)"/><polygon points="1167.7,744.9 1188.2,749.0 1192.3,757.2 1171.8,755.2" fill="#000" opacity="0.12" filter="url(#bl6)"/><polygon points="1025.9,611.4 1037.2,603.1 1039.2,604.2 1039.2,606.8 1046.4,609.3 1045.4,613.0 1033.1,617.5" fill="#5f5b54" stroke="#14120f" stroke-width="1.5" stroke-linejoin="round" /><path d="M1026.9 611.8L1037.2 605.6L1045.4 610.3" fill="none" stroke="#14120f" stroke-width="0.7" stroke-linejoin="round" stroke-linecap="round"/><path d="M979.7 693.3L994.1 686.9" fill="none" stroke="#141414" stroke-width="3.4" stroke-linejoin="round" stroke-linecap="round"/><path d="M979.7 693.3L994.1 686.9" fill="none" stroke="#8d8d8a" stroke-width="2.1" stroke-linejoin="round" stroke-linecap="round"/><polygon points="969.7,695.5 972.7,693.3 976.3,691.7 978.7,693.3 979.7,697.3 991.9,705.3 992.6,709.3 988.5,712.5 978.7,705.3 973.9,702.4 970.6,698.5" fill="#57534c" stroke="#14120f" stroke-width="1.5" stroke-linejoin="round" /><polygon points="979.7,697.6 991.9,705.6 989.7,708.0 978.5,700.8" fill="#706c64" stroke="#14120f" stroke-width="0.7" stroke-linejoin="round" /><path d="M972.7 693.7L974.5 697.9L978.5 700.8" fill="none" stroke="#14120f" stroke-width="0.7" stroke-linejoin="round" stroke-linecap="round"/><path d="M1053.2 748.3L1067.6 741.9" fill="none" stroke="#141414" stroke-width="3.4" stroke-linejoin="round" stroke-linecap="round"/><path d="M1053.2 748.3L1067.6 741.9" fill="none" stroke="#8d8d8a" stroke-width="2.1" stroke-linejoin="round" stroke-linecap="round"/><polygon points="1043.2,750.5 1046.2,748.3 1049.8,746.7 1052.2,748.3 1053.2,752.3 1065.4,760.3 1066.1,764.3 1062.0,767.5 1052.2,760.3 1047.4,757.4 1044.1,753.5" fill="#57534c" stroke="#14120f" stroke-width="1.5" stroke-linejoin="round" /><polygon points="1053.2,752.6 1065.4,760.6 1063.2,763.0 1052.0,755.8" fill="#706c64" stroke="#14120f" stroke-width="0.7" stroke-linejoin="round" /><path d="M1046.2 748.7L1048.0 752.9L1052.0 755.8" fill="none" stroke="#14120f" stroke-width="0.7" stroke-linejoin="round" stroke-linecap="round"/><polygon points="920.0,711.7 929.6,707.5 932.9,708.4 935.1,713.5 933.9,717.3 924.5,722.1 922.1,721.3" fill="#55514a" stroke="#14120f" stroke-width="1.5" stroke-linejoin="round" /><path d="M925.0 709.8L926.7 720.3" fill="none" stroke="#14120f" stroke-width="0.8" stroke-linejoin="round" stroke-linecap="round"/><path d="M928.6 708.9L930.3 718.5" fill="none" stroke="#14120f" stroke-width="0.8" stroke-linejoin="round" stroke-linecap="round"/><path d="M931.5 708.2L933.2 717.1" fill="none" stroke="#14120f" stroke-width="0.8" stroke-linejoin="round" stroke-linecap="round"/><polygon points="906.8,709.9 911.8,709.2 921.4,713.5 917.8,715.4" fill="#68645c" stroke="#14120f" stroke-width="1.5" stroke-linejoin="round" /><polygon points="917.8,715.4 921.4,713.5 923.3,721.9 919.7,726.7 913.0,728.1 915.9,720.2" fill="#4f4b45" stroke="#14120f" stroke-width="1.5" stroke-linejoin="round" /><polygon points="902.9,714.1 906.8,709.9 917.8,715.4 915.9,720.2 913.0,728.1 909.8,726.7 904.4,719.2" fill="#77736b" stroke="#14120f" stroke-width="1.5" stroke-linejoin="round" /><polygon points="903.4,712.3 905.3,709.9 907.0,710.1 904.1,713.5" fill="#55514a" stroke="#14120f" stroke-width="0.6" stroke-linejoin="round" /><polygon points="1059.4,653.8 1064.5,648.3 1091.4,666.9 1091.4,674.2 1089.2,676.4 1060.1,658.2" fill="#4a4640" stroke="#14120f" stroke-width="1.5" stroke-linejoin="round" /><polygon points="1059.4,653.8 1064.5,648.7 1070.3,652.3 1069.6,659.6 1065.9,661.8 1060.1,658.2" fill="#5f5b54" stroke="#14120f" stroke-width="0.7" stroke-linejoin="round" /><path d="M1070.3 654.5L1091.1 668.6" fill="none" stroke="#14120f" stroke-width="0.7" stroke-linejoin="round" stroke-linecap="round"/><polygon points="1097.5,662.2 1108.9,653.1 1112.5,654.1 1113.2,658.2 1118.3,659.6 1117.6,662.8 1103.0,667.2" fill="#5f5b54" stroke="#14120f" stroke-width="1.5" stroke-linejoin="round" /><path d="M1098.7 662.8L1109.6 656.0L1112.5 658.2L1117.6 660.3" fill="none" stroke="#14120f" stroke-width="0.7" stroke-linejoin="round" stroke-linecap="round"/><path d="M1172.2 716.4L1180.5 711.7" fill="none" stroke="#b0b0ac" stroke-width="1.6" stroke-linejoin="round" stroke-linecap="round"/><polygon points="1138.0,701.1 1140.9,697.2 1171.4,717.8 1173.6,722.9 1186.0,712.7 1193.3,719.3 1192.6,726.6 1178.7,733.1 1170.0,729.5 1156.9,722.2 1138.7,708.4" fill="#55514a" stroke="#14120f" stroke-width="1.5" stroke-linejoin="round" /><polygon points="1173.6,722.9 1186.0,713.2 1193.0,719.3 1179.9,728.0" fill="#6d6961" stroke="#14120f" stroke-width="0.7" stroke-linejoin="round" /><polygon points="1140.2,706.9 1148.2,711.7 1147.9,716.4 1140.2,711.7" fill="#2b2926" stroke="#14120f" stroke-width="0.6" stroke-linejoin="round" /><path d="M1140.9 697.8L1138.7 708.4" fill="none" stroke="#14120f" stroke-width="0.7" stroke-linejoin="round" stroke-linecap="round"/><path d="M1157.6 719.6L1162.7 723.7L1170.7 725.8" fill="none" stroke="#14120f" stroke-width="0.8" stroke-linejoin="round" stroke-linecap="round"/></g>
<g><polygon points="979.5,666.9 1025.1,702.7 1083.6,743.4 1117.0,764.5 1136.5,787.3 1151.9,780.8 1160.1,787.3 1137.3,795.4 1112.9,779.2 1021.8,714.1 976.3,675.1" fill="#000" opacity="0.13" filter="url(#bl6)"/><polygon points="977.1,660.4 1000.7,676.7 1042.1,701.1 1073.9,727.1 1117.0,758.8 1117.4,763.7 1099.9,751.5 1083.6,742.1 1073.9,737.2 1051.1,720.6 1025.1,701.4 1021.8,695.4 1000.7,681.6 979.2,666.6" fill="#0e0d0b"  /><polygon points="972.2,625.5 1138.9,744.7 1136.5,786.5 1116.5,774.3 1117.0,758.8 1073.9,727.1 1042.1,701.1 1000.7,676.7 971.4,656.4" fill="#5d5952" stroke="#14120f" stroke-width="1.5" stroke-linejoin="round" /><polygon points="972.2,625.5 986.8,616.5 1153.6,735.2 1138.9,744.7" fill="#87837a" stroke="#14120f" stroke-width="1.5" stroke-linejoin="round" /><polygon points="1138.9,744.7 1153.6,735.2 1151.1,780.0 1136.5,786.5" fill="#6a665e" stroke="#14120f" stroke-width="1.5" stroke-linejoin="round" /><polygon points="999.9,644.5 1006.4,648.7 1005.1,679.6 998.5,672.1" fill="#4d4943" stroke="#14120f" stroke-width="0.8" stroke-linejoin="round" /><polygon points="1073.9,697.0 1078.7,700.4 1077.4,730.5 1072.6,723.9" fill="#4d4943" stroke="#14120f" stroke-width="0.8" stroke-linejoin="round" /><path d="M1043.8 673.8L1042.1 701.1" fill="none" stroke="#14120f" stroke-width="1.0" stroke-linejoin="round" stroke-linecap="round"/><path d="M1118.6 728.7L1117.0 758.8" fill="none" stroke="#14120f" stroke-width="1.0" stroke-linejoin="round" stroke-linecap="round"/><path d="M976.3 640.1L999.9 656.4" fill="none" stroke="#b9b5aa" stroke-width="1.3" stroke-linejoin="round" stroke-linecap="round"/><path d="M976.3 641.6L999.9 657.8" fill="none" stroke="#14120f" stroke-width="0.7" stroke-linejoin="round" stroke-linecap="round"/><path d="M1047.8 692.1L1073.0 709.2" fill="none" stroke="#b9b5aa" stroke-width="1.3" stroke-linejoin="round" stroke-linecap="round"/><path d="M1047.8 693.6L1073.0 710.7" fill="none" stroke="#14120f" stroke-width="0.7" stroke-linejoin="round" stroke-linecap="round"/><polygon points="980.8,637.3 986.0,640.6 986.0,642.5 980.8,639.3" fill="#35322e" stroke="#14120f" stroke-width="0.6" stroke-linejoin="round" /><polygon points="1052.4,688.1 1057.6,691.3 1057.6,693.3 1052.4,690.0" fill="#35322e" stroke="#14120f" stroke-width="0.6" stroke-linejoin="round" /><polygon points="1008.0,653.6 1041.3,676.4 1040.5,686.9 1007.2,663.7" fill="#56524b" stroke="#14120f" stroke-width="0.8" stroke-linejoin="round" /><polygon points="1008.3,659.8 1040.5,682.5 1040.2,685.8 1008.0,663.0" fill="#aaa69b" stroke="#14120f" stroke-width="0.6" stroke-linejoin="round" /><path d="M1023.4 665.8L1026.2 663.4L1029.1 665.3L1034.8 673.1L1039.7 678.0" fill="none" stroke="#14120f" stroke-width="0.9" stroke-linejoin="round" stroke-linecap="round"/><polygon points="1081.2,706.0 1114.5,728.7 1113.7,739.3 1080.4,716.1" fill="#56524b" stroke="#14120f" stroke-width="0.8" stroke-linejoin="round" /><polygon points="1081.5,712.1 1113.7,734.9 1113.4,738.2 1081.2,715.4" fill="#aaa69b" stroke="#14120f" stroke-width="0.6" stroke-linejoin="round" /><path d="M1096.6 718.2L1099.4 715.7L1102.3 717.7L1108.0 725.5L1112.9 730.4" fill="none" stroke="#14120f" stroke-width="0.9" stroke-linejoin="round" stroke-linecap="round"/><polygon points="1120.2,745.0 1134.9,754.8 1134.4,761.3 1119.9,751.5" fill="#2a2825" stroke="#14120f" stroke-width="0.7" stroke-linejoin="round" /><polygon points="1125.9,751.5 1132.7,755.9 1132.4,759.3 1125.6,755.1" fill="#77736a"  /><polygon points="1117.0,761.3 1136.5,774.3 1136.2,786.0 1116.6,774.0" fill="#23211e"  /><path d="M1120.2 763.4L1119.9 776.0" fill="none" stroke="#5d5952" stroke-width="0.6" stroke-linejoin="round" stroke-linecap="round"/><path d="M1123.5 765.6L1123.1 778.0" fill="none" stroke="#5d5952" stroke-width="0.6" stroke-linejoin="round" stroke-linecap="round"/><path d="M1126.7 767.8L1126.4 780.0" fill="none" stroke="#5d5952" stroke-width="0.6" stroke-linejoin="round" stroke-linecap="round"/><path d="M1130.0 769.9L1129.6 782.0" fill="none" stroke="#5d5952" stroke-width="0.6" stroke-linejoin="round" stroke-linecap="round"/><path d="M1133.2 772.1L1132.9 784.0" fill="none" stroke="#5d5952" stroke-width="0.6" stroke-linejoin="round" stroke-linecap="round"/><path d="M1117.0 764.4L1136.5 777.2" fill="none" stroke="#5d5952" stroke-width="0.6" stroke-linejoin="round" stroke-linecap="round"/><path d="M1117.0 767.6L1136.5 780.1" fill="none" stroke="#5d5952" stroke-width="0.6" stroke-linejoin="round" stroke-linecap="round"/><path d="M1117.0 770.8L1136.5 783.1" fill="none" stroke="#5d5952" stroke-width="0.6" stroke-linejoin="round" stroke-linecap="round"/></g>
<g><polygon points="391.6,650.8 403.1,660.8 421.6,652.4 422.4,654.7 403.6,663.9 391.3,653.1" fill="#55514a" stroke="#14120f" stroke-width="1.5" stroke-linejoin="round" /><polygon points="391.6,650.8 409.8,641.3 421.6,652.4 403.1,660.8" fill="#7d796f" stroke="#14120f" stroke-width="1.5" stroke-linejoin="round" /><polygon points="523.3,770.2 536.4,781.0 554.9,771.8 555.7,774.1 536.4,784.6 522.9,772.9" fill="#55514a" stroke="#14120f" stroke-width="1.5" stroke-linejoin="round" /><polygon points="523.3,770.2 541.8,759.4 554.9,771.8 536.4,781.0" fill="#7d796f" stroke="#14120f" stroke-width="1.5" stroke-linejoin="round" /></g>
<g><polygon points="700.4,792.7 911.3,971.3 1020.4,901.8 1027.6,906.5 912.5,978.5 696.8,798.7" fill="#000" opacity="0.1" filter="url(#bl5)"/><polygon points="700.4,787.9 704.0,784.8 804.6,729.2 810.6,729.7 1020.4,895.8 1019.9,901.8 911.3,970.8 905.3,968.4 700.4,792.7" fill="#6c6860" stroke="#14120f" stroke-width="1.5" stroke-linejoin="round" /><polygon points="700.4,789.1 906.5,964.6 911.3,966.5 1019.9,898.2 1019.9,901.8 911.3,970.8 905.3,968.4 700.4,792.7" fill="#4a4640" stroke="#14120f" stroke-width="0.8" stroke-linejoin="round" /><polygon points="716.0,785.5 805.8,736.8 1008.4,900.6 919.7,956.9" fill="#7c786f" stroke="#14120f" stroke-width="1.2" stroke-linejoin="round" /><path d="M716.0 785.5L805.8 736.8L1008.4 900.6" fill="none" stroke="#14120f" stroke-width="2.0" stroke-linejoin="round" stroke-linecap="round"/><path d="M762.7 762.3L961.6 929.3" fill="none" stroke="#14120f" stroke-width="0.9" stroke-linejoin="round" stroke-linecap="round"/><path d="M769.9 750.7L773.5 753.6" fill="none" stroke="#14120f" stroke-width="0.8" stroke-linejoin="round" stroke-linecap="round"/><path d="M977.2 920.9L981.5 923.8" fill="none" stroke="#14120f" stroke-width="0.8" stroke-linejoin="round" stroke-linecap="round"/><circle cx="729.9" cy="787.4" r="1.4" fill="#222" stroke="None" stroke-width="0.9"/><circle cx="804.9" cy="744.0" r="1.4" fill="#222" stroke="None" stroke-width="0.9"/><circle cx="893.3" cy="814.7" r="1.4" fill="#222" stroke="None" stroke-width="0.9"/><circle cx="837.5" cy="879.0" r="1.4" fill="#222" stroke="None" stroke-width="0.9"/><circle cx="998.1" cy="899.1" r="1.4" fill="#222" stroke="None" stroke-width="0.9"/><circle cx="923.3" cy="950.9" r="1.4" fill="#222" stroke="None" stroke-width="0.9"/></g>
<g><polygon points="550.8,894.4 645.6,984.5 659.4,974.1 693.0,1028.4 735.7,1068.9 822.4,1016.9 830.5,1022.7 738.0,1075.8 687.2,1031.9 641.0,990.3 546.2,900.2" fill="#000" opacity="0.12" filter="url(#bl6)"/><polygon points="549.6,871.3 567.0,857.4 608.6,835.4 619.0,827.3 822.4,1011.1 822.4,1015.7 748.4,1055.0 747.3,1062.0 739.2,1063.1 735.7,1067.7 693.0,1027.3 693.0,1020.4 706.8,1013.4 659.4,971.8 656.0,977.6 645.6,983.4 550.8,893.2" fill="#55514a" stroke="#14120f" stroke-width="1.5" stroke-linejoin="round" /><polygon points="549.6,879.3 619.0,830.8 822.4,1011.1 749.6,1050.4 735.7,1060.8 693.0,1020.4 706.8,1013.4 659.4,971.8 645.6,978.7 550.8,887.4" fill="#68645c" stroke="#14120f" stroke-width="0.8" stroke-linejoin="round" /><polygon points="550.8,887.4 645.6,978.7 645.6,983.4 550.8,893.2" fill="#47433d" stroke="#14120f" stroke-width="0.7" stroke-linejoin="round" /><polygon points="693.0,1020.4 735.7,1060.8 735.7,1067.7 693.0,1027.3" fill="#47433d" stroke="#14120f" stroke-width="0.7" stroke-linejoin="round" /><polygon points="749.6,1050.4 822.4,1011.1 822.4,1015.7 748.4,1055.0" fill="#5a564e" stroke="#14120f" stroke-width="0.7" stroke-linejoin="round" /><polygon points="605.5,840.7 749.2,970.5 702.8,1001.8 559.0,872.0" fill="#23211e"  /><polygon points="561.0,868.9 661.0,959.2 646.9,969.9 546.9,879.7" fill="#23211e"  /><polygon points="616.5,833.2 777.7,978.8 768.7,986.3 607.5,840.8" fill="#23211e"  /><polygon points="751.0,972.0 797.6,1014.2 739.0,1053.1 692.4,1011.0" fill="#23211e"  /><polygon points="616.6,829.1 611.6,832.3 607.9,839.2 617.2,833.3" fill="#67635b" stroke="#14120f" stroke-width="0.6" stroke-linejoin="round" /><polygon points="616.6,829.1 623.2,835.1 626.9,842.0 617.2,833.3" fill="#58544d" stroke="#14120f" stroke-width="0.6" stroke-linejoin="round" /><polygon points="611.6,832.3 618.1,838.3 617.5,848.0 607.9,839.2" fill="#87857e" stroke="#14120f" stroke-width="0.8" stroke-linejoin="round" /><polygon points="623.2,835.1 618.1,838.3 617.5,848.0 626.9,842.0" fill="#5f5b54" stroke="#14120f" stroke-width="0.8" stroke-linejoin="round" /><polygon points="616.6,829.1 623.2,835.1 618.1,838.3 611.6,832.3" fill="#77736a" stroke="#14120f" stroke-width="0.8" stroke-linejoin="round" /><polygon points="627.0,838.5 621.9,841.7 618.2,848.6 627.6,842.6" fill="#67635b" stroke="#14120f" stroke-width="0.6" stroke-linejoin="round" /><polygon points="627.0,838.5 633.6,844.4 637.3,851.4 627.6,842.6" fill="#58544d" stroke="#14120f" stroke-width="0.6" stroke-linejoin="round" /><polygon points="621.9,841.7 628.5,847.6 627.9,857.3 618.2,848.6" fill="#87857e" stroke="#14120f" stroke-width="0.8" stroke-linejoin="round" /><polygon points="633.6,844.4 628.5,847.6 627.9,857.3 637.3,851.4" fill="#5f5b54" stroke="#14120f" stroke-width="0.8" stroke-linejoin="round" /><polygon points="627.0,838.5 633.6,844.4 628.5,847.6 621.9,841.7" fill="#77736a" stroke="#14120f" stroke-width="0.8" stroke-linejoin="round" /><polygon points="641.9,851.9 636.8,855.1 633.1,862.0 642.5,856.1" fill="#67635b" stroke="#14120f" stroke-width="0.6" stroke-linejoin="round" /><polygon points="641.9,851.9 648.5,857.9 652.2,864.8 642.5,856.1" fill="#58544d" stroke="#14120f" stroke-width="0.6" stroke-linejoin="round" /><polygon points="636.8,855.1 643.4,861.1 642.8,870.8 633.1,862.0" fill="#87857e" stroke="#14120f" stroke-width="0.8" stroke-linejoin="round" /><polygon points="648.5,857.9 643.4,861.1 642.8,870.8 652.2,864.8" fill="#5f5b54" stroke="#14120f" stroke-width="0.8" stroke-linejoin="round" /><polygon points="641.9,851.9 648.5,857.9 643.4,861.1 636.8,855.1" fill="#77736a" stroke="#14120f" stroke-width="0.8" stroke-linejoin="round" /><polygon points="652.3,861.3 647.2,864.5 643.5,871.4 652.9,865.5" fill="#67635b" stroke="#14120f" stroke-width="0.6" stroke-linejoin="round" /><polygon points="652.3,861.3 658.9,867.2 662.5,874.2 652.9,865.5" fill="#58544d" stroke="#14120f" stroke-width="0.6" stroke-linejoin="round" /><polygon points="647.2,864.5 653.8,870.4 653.2,880.1 643.5,871.4" fill="#87857e" stroke="#14120f" stroke-width="0.8" stroke-linejoin="round" /><polygon points="658.9,867.2 653.8,870.4 653.2,880.1 662.5,874.2" fill="#5f5b54" stroke="#14120f" stroke-width="0.8" stroke-linejoin="round" /><polygon points="652.3,861.3 658.9,867.2 653.8,870.4 647.2,864.5" fill="#77736a" stroke="#14120f" stroke-width="0.8" stroke-linejoin="round" /><polygon points="662.6,870.6 657.5,873.9 653.9,880.8 663.2,874.8" fill="#67635b" stroke="#14120f" stroke-width="0.6" stroke-linejoin="round" /><polygon points="662.6,870.6 669.2,876.6 672.9,883.6 663.2,874.8" fill="#58544d" stroke="#14120f" stroke-width="0.6" stroke-linejoin="round" /><polygon points="657.5,873.9 664.1,879.8 663.5,889.5 653.9,880.8" fill="#87857e" stroke="#14120f" stroke-width="0.8" stroke-linejoin="round" /><polygon points="669.2,876.6 664.1,879.8 663.5,889.5 672.9,883.6" fill="#5f5b54" stroke="#14120f" stroke-width="0.8" stroke-linejoin="round" /><polygon points="662.6,870.6 669.2,876.6 664.1,879.8 657.5,873.9" fill="#77736a" stroke="#14120f" stroke-width="0.8" stroke-linejoin="round" /><polygon points="673.0,880.0 667.9,883.2 664.2,890.1 673.6,884.2" fill="#67635b" stroke="#14120f" stroke-width="0.6" stroke-linejoin="round" /><polygon points="673.0,880.0 679.6,885.9 683.3,892.9 673.6,884.2" fill="#58544d" stroke="#14120f" stroke-width="0.6" stroke-linejoin="round" /><polygon points="667.9,883.2 674.5,889.2 673.9,898.8 664.2,890.1" fill="#87857e" stroke="#14120f" stroke-width="0.8" stroke-linejoin="round" /><polygon points="679.6,885.9 674.5,889.2 673.9,898.8 683.3,892.9" fill="#5f5b54" stroke="#14120f" stroke-width="0.8" stroke-linejoin="round" /><polygon points="673.0,880.0 679.6,885.9 674.5,889.2 667.9,883.2" fill="#77736a" stroke="#14120f" stroke-width="0.8" stroke-linejoin="round" /><polygon points="683.4,889.4 678.3,892.6 674.6,899.5 684.0,893.5" fill="#67635b" stroke="#14120f" stroke-width="0.6" stroke-linejoin="round" /><polygon points="683.4,889.4 689.9,895.3 693.6,902.3 684.0,893.5" fill="#58544d" stroke="#14120f" stroke-width="0.6" stroke-linejoin="round" /><polygon points="678.3,892.6 684.9,898.5 684.3,908.2 674.6,899.5" fill="#87857e" stroke="#14120f" stroke-width="0.8" stroke-linejoin="round" /><polygon points="689.9,895.3 684.9,898.5 684.3,908.2 693.6,902.3" fill="#5f5b54" stroke="#14120f" stroke-width="0.8" stroke-linejoin="round" /><polygon points="683.4,889.4 689.9,895.3 684.9,898.5 678.3,892.6" fill="#77736a" stroke="#14120f" stroke-width="0.8" stroke-linejoin="round" /><polygon points="698.3,902.8 693.2,906.0 689.5,912.9 698.9,907.0" fill="#67635b" stroke="#14120f" stroke-width="0.6" stroke-linejoin="round" /><polygon points="698.3,902.8 704.9,908.8 708.5,915.7 698.9,907.0" fill="#58544d" stroke="#14120f" stroke-width="0.6" stroke-linejoin="round" /><polygon points="693.2,906.0 699.8,912.0 699.2,921.7 689.5,912.9" fill="#87857e" stroke="#14120f" stroke-width="0.8" stroke-linejoin="round" /><polygon points="704.9,908.8 699.8,912.0 699.2,921.7 708.5,915.7" fill="#5f5b54" stroke="#14120f" stroke-width="0.8" stroke-linejoin="round" /><polygon points="698.3,902.8 704.9,908.8 699.8,912.0 693.2,906.0" fill="#77736a" stroke="#14120f" stroke-width="0.8" stroke-linejoin="round" /><polygon points="708.6,912.2 703.5,915.4 699.9,922.3 709.2,916.4" fill="#67635b" stroke="#14120f" stroke-width="0.6" stroke-linejoin="round" /><polygon points="708.6,912.2 715.2,918.1 718.9,925.1 709.2,916.4" fill="#58544d" stroke="#14120f" stroke-width="0.6" stroke-linejoin="round" /><polygon points="703.5,915.4 710.1,921.3 709.5,931.0 699.9,922.3" fill="#87857e" stroke="#14120f" stroke-width="0.8" stroke-linejoin="round" /><polygon points="715.2,918.1 710.1,921.3 709.5,931.0 718.9,925.1" fill="#5f5b54" stroke="#14120f" stroke-width="0.8" stroke-linejoin="round" /><polygon points="708.6,912.2 715.2,918.1 710.1,921.3 703.5,915.4" fill="#77736a" stroke="#14120f" stroke-width="0.8" stroke-linejoin="round" /><polygon points="719.0,921.5 713.9,924.7 710.2,931.6 719.6,925.7" fill="#67635b" stroke="#14120f" stroke-width="0.6" stroke-linejoin="round" /><polygon points="719.0,921.5 725.6,927.5 729.3,934.4 719.6,925.7" fill="#58544d" stroke="#14120f" stroke-width="0.6" stroke-linejoin="round" /><polygon points="713.9,924.7 720.5,930.7 719.9,940.4 710.2,931.6" fill="#87857e" stroke="#14120f" stroke-width="0.8" stroke-linejoin="round" /><polygon points="725.6,927.5 720.5,930.7 719.9,940.4 729.3,934.4" fill="#5f5b54" stroke="#14120f" stroke-width="0.8" stroke-linejoin="round" /><polygon points="719.0,921.5 725.6,927.5 720.5,930.7 713.9,924.7" fill="#77736a" stroke="#14120f" stroke-width="0.8" stroke-linejoin="round" /><polygon points="729.4,930.9 724.3,934.1 720.6,941.0 730.0,935.1" fill="#67635b" stroke="#14120f" stroke-width="0.6" stroke-linejoin="round" /><polygon points="729.4,930.9 735.9,936.8 739.6,943.8 730.0,935.1" fill="#58544d" stroke="#14120f" stroke-width="0.6" stroke-linejoin="round" /><polygon points="724.3,934.1 730.9,940.1 730.3,949.7 720.6,941.0" fill="#87857e" stroke="#14120f" stroke-width="0.8" stroke-linejoin="round" /><polygon points="735.9,936.8 730.9,940.1 730.3,949.7 739.6,943.8" fill="#5f5b54" stroke="#14120f" stroke-width="0.8" stroke-linejoin="round" /><polygon points="729.4,930.9 735.9,936.8 730.9,940.1 724.3,934.1" fill="#77736a" stroke="#14120f" stroke-width="0.8" stroke-linejoin="round" /><polygon points="739.7,940.2 734.6,943.5 730.9,950.4 740.3,944.4" fill="#67635b" stroke="#14120f" stroke-width="0.6" stroke-linejoin="round" /><polygon points="739.7,940.2 746.3,946.2 750.0,953.2 740.3,944.4" fill="#58544d" stroke="#14120f" stroke-width="0.6" stroke-linejoin="round" /><polygon points="734.6,943.5 741.2,949.4 740.6,959.1 730.9,950.4" fill="#87857e" stroke="#14120f" stroke-width="0.8" stroke-linejoin="round" /><polygon points="746.3,946.2 741.2,949.4 740.6,959.1 750.0,953.2" fill="#5f5b54" stroke="#14120f" stroke-width="0.8" stroke-linejoin="round" /><polygon points="739.7,940.2 746.3,946.2 741.2,949.4 734.6,943.5" fill="#77736a" stroke="#14120f" stroke-width="0.8" stroke-linejoin="round" /><polygon points="754.6,953.7 749.5,956.9 745.9,963.8 755.2,957.9" fill="#67635b" stroke="#14120f" stroke-width="0.6" stroke-linejoin="round" /><polygon points="754.6,953.7 761.2,959.7 764.9,966.6 755.2,957.9" fill="#58544d" stroke="#14120f" stroke-width="0.6" stroke-linejoin="round" /><polygon points="749.5,956.9 756.1,962.9 755.5,972.6 745.9,963.8" fill="#87857e" stroke="#14120f" stroke-width="0.8" stroke-linejoin="round" /><polygon points="761.2,959.7 756.1,962.9 755.5,972.6 764.9,966.6" fill="#5f5b54" stroke="#14120f" stroke-width="0.8" stroke-linejoin="round" /><polygon points="754.6,953.7 761.2,959.7 756.1,962.9 749.5,956.9" fill="#77736a" stroke="#14120f" stroke-width="0.8" stroke-linejoin="round" /><polygon points="765.0,963.1 759.9,966.3 756.2,973.2 765.6,967.2" fill="#67635b" stroke="#14120f" stroke-width="0.6" stroke-linejoin="round" /><polygon points="765.0,963.1 771.6,969.0 775.3,976.0 765.6,967.2" fill="#58544d" stroke="#14120f" stroke-width="0.6" stroke-linejoin="round" /><polygon points="759.9,966.3 766.5,972.2 765.9,981.9 756.2,973.2" fill="#87857e" stroke="#14120f" stroke-width="0.8" stroke-linejoin="round" /><polygon points="771.6,969.0 766.5,972.2 765.9,981.9 775.3,976.0" fill="#5f5b54" stroke="#14120f" stroke-width="0.8" stroke-linejoin="round" /><polygon points="765.0,963.1 771.6,969.0 766.5,972.2 759.9,966.3" fill="#77736a" stroke="#14120f" stroke-width="0.8" stroke-linejoin="round" /><polygon points="604.8,837.9 599.3,841.4 595.6,848.3 605.4,842.1" fill="#67635b" stroke="#14120f" stroke-width="0.6" stroke-linejoin="round" /><polygon points="604.8,837.9 610.1,842.7 613.8,849.7 605.4,842.1" fill="#58544d" stroke="#14120f" stroke-width="0.6" stroke-linejoin="round" /><polygon points="599.3,841.4 604.6,846.2 604.0,855.9 595.6,848.3" fill="#87857e" stroke="#14120f" stroke-width="0.8" stroke-linejoin="round" /><polygon points="610.1,842.7 604.6,846.2 604.0,855.9 613.8,849.7" fill="#5f5b54" stroke="#14120f" stroke-width="0.8" stroke-linejoin="round" /><polygon points="604.8,837.9 610.1,842.7 604.6,846.2 599.3,841.4" fill="#77736a" stroke="#14120f" stroke-width="0.8" stroke-linejoin="round" /><polygon points="613.9,846.1 608.4,849.6 604.7,856.5 614.5,850.3" fill="#67635b" stroke="#14120f" stroke-width="0.6" stroke-linejoin="round" /><polygon points="613.9,846.1 619.2,850.9 622.9,857.9 614.5,850.3" fill="#58544d" stroke="#14120f" stroke-width="0.6" stroke-linejoin="round" /><polygon points="608.4,849.6 613.7,854.4 613.1,864.1 604.7,856.5" fill="#87857e" stroke="#14120f" stroke-width="0.8" stroke-linejoin="round" /><polygon points="619.2,850.9 613.7,854.4 613.1,864.1 622.9,857.9" fill="#5f5b54" stroke="#14120f" stroke-width="0.8" stroke-linejoin="round" /><polygon points="613.9,846.1 619.2,850.9 613.7,854.4 608.4,849.6" fill="#77736a" stroke="#14120f" stroke-width="0.8" stroke-linejoin="round" /><polygon points="623.0,854.3 617.5,857.8 613.8,864.7 623.6,858.5" fill="#67635b" stroke="#14120f" stroke-width="0.6" stroke-linejoin="round" /><polygon points="623.0,854.3 628.3,859.1 632.0,866.1 623.6,858.5" fill="#58544d" stroke="#14120f" stroke-width="0.6" stroke-linejoin="round" /><polygon points="617.5,857.8 622.8,862.6 622.2,872.3 613.8,864.7" fill="#87857e" stroke="#14120f" stroke-width="0.8" stroke-linejoin="round" /><polygon points="628.3,859.1 622.8,862.6 622.2,872.3 632.0,866.1" fill="#5f5b54" stroke="#14120f" stroke-width="0.8" stroke-linejoin="round" /><polygon points="623.0,854.3 628.3,859.1 622.8,862.6 617.5,857.8" fill="#77736a" stroke="#14120f" stroke-width="0.8" stroke-linejoin="round" /><polygon points="632.1,862.5 626.6,866.0 622.9,872.9 632.7,866.7" fill="#67635b" stroke="#14120f" stroke-width="0.6" stroke-linejoin="round" /><polygon points="632.1,862.5 637.4,867.3 641.1,874.3 632.7,866.7" fill="#58544d" stroke="#14120f" stroke-width="0.6" stroke-linejoin="round" /><polygon points="626.6,866.0 631.9,870.8 631.3,880.5 622.9,872.9" fill="#87857e" stroke="#14120f" stroke-width="0.8" stroke-linejoin="round" /><polygon points="637.4,867.3 631.9,870.8 631.3,880.5 641.1,874.3" fill="#5f5b54" stroke="#14120f" stroke-width="0.8" stroke-linejoin="round" /><polygon points="632.1,862.5 637.4,867.3 631.9,870.8 626.6,866.0" fill="#77736a" stroke="#14120f" stroke-width="0.8" stroke-linejoin="round" /><polygon points="641.2,870.7 635.7,874.2 632.0,881.1 641.8,874.9" fill="#67635b" stroke="#14120f" stroke-width="0.6" stroke-linejoin="round" /><polygon points="641.2,870.7 646.5,875.5 650.2,882.5 641.8,874.9" fill="#58544d" stroke="#14120f" stroke-width="0.6" stroke-linejoin="round" /><polygon points="635.7,874.2 641.0,879.0 640.4,888.7 632.0,881.1" fill="#87857e" stroke="#14120f" stroke-width="0.8" stroke-linejoin="round" /><polygon points="646.5,875.5 641.0,879.0 640.4,888.7 650.2,882.5" fill="#5f5b54" stroke="#14120f" stroke-width="0.8" stroke-linejoin="round" /><polygon points="641.2,870.7 646.5,875.5 641.0,879.0 635.7,874.2" fill="#77736a" stroke="#14120f" stroke-width="0.8" stroke-linejoin="round" /><polygon points="650.2,879.0 644.8,882.4 641.1,889.3 650.8,883.1" fill="#67635b" stroke="#14120f" stroke-width="0.6" stroke-linejoin="round" /><polygon points="650.2,879.0 655.6,883.8 659.3,890.7 650.8,883.1" fill="#58544d" stroke="#14120f" stroke-width="0.6" stroke-linejoin="round" /><polygon points="644.8,882.4 650.1,887.2 649.5,896.9 641.1,889.3" fill="#87857e" stroke="#14120f" stroke-width="0.8" stroke-linejoin="round" /><polygon points="655.6,883.8 650.1,887.2 649.5,896.9 659.3,890.7" fill="#5f5b54" stroke="#14120f" stroke-width="0.8" stroke-linejoin="round" /><polygon points="650.2,879.0 655.6,883.8 650.1,887.2 644.8,882.4" fill="#77736a" stroke="#14120f" stroke-width="0.8" stroke-linejoin="round" /><polygon points="659.3,887.2 653.9,890.6 650.2,897.5 659.9,891.3" fill="#67635b" stroke="#14120f" stroke-width="0.6" stroke-linejoin="round" /><polygon points="659.3,887.2 664.7,892.0 668.3,898.9 659.9,891.3" fill="#58544d" stroke="#14120f" stroke-width="0.6" stroke-linejoin="round" /><polygon points="653.9,890.6 659.2,895.4 658.6,905.1 650.2,897.5" fill="#87857e" stroke="#14120f" stroke-width="0.8" stroke-linejoin="round" /><polygon points="664.7,892.0 659.2,895.4 658.6,905.1 668.3,898.9" fill="#5f5b54" stroke="#14120f" stroke-width="0.8" stroke-linejoin="round" /><polygon points="659.3,887.2 664.7,892.0 659.2,895.4 653.9,890.6" fill="#77736a" stroke="#14120f" stroke-width="0.8" stroke-linejoin="round" /><polygon points="668.4,895.4 663.0,898.8 659.3,905.7 669.0,899.6" fill="#67635b" stroke="#14120f" stroke-width="0.6" stroke-linejoin="round" /><polygon points="668.4,895.4 673.7,900.2 677.4,907.1 669.0,899.6" fill="#58544d" stroke="#14120f" stroke-width="0.6" stroke-linejoin="round" /><polygon points="663.0,898.8 668.3,903.6 667.7,913.3 659.3,905.7" fill="#87857e" stroke="#14120f" stroke-width="0.8" stroke-linejoin="round" /><polygon points="673.7,900.2 668.3,903.6 667.7,913.3 677.4,907.1" fill="#5f5b54" stroke="#14120f" stroke-width="0.8" stroke-linejoin="round" /><polygon points="668.4,895.4 673.7,900.2 668.3,903.6 663.0,898.8" fill="#77736a" stroke="#14120f" stroke-width="0.8" stroke-linejoin="round" /><polygon points="677.5,903.6 672.0,907.0 668.4,913.9 678.1,907.8" fill="#67635b" stroke="#14120f" stroke-width="0.6" stroke-linejoin="round" /><polygon points="677.5,903.6 682.8,908.4 686.5,915.4 678.1,907.8" fill="#58544d" stroke="#14120f" stroke-width="0.6" stroke-linejoin="round" /><polygon points="672.0,907.0 677.4,911.8 676.8,921.5 668.4,913.9" fill="#87857e" stroke="#14120f" stroke-width="0.8" stroke-linejoin="round" /><polygon points="682.8,908.4 677.4,911.8 676.8,921.5 686.5,915.4" fill="#5f5b54" stroke="#14120f" stroke-width="0.8" stroke-linejoin="round" /><polygon points="677.5,903.6 682.8,908.4 677.4,911.8 672.0,907.0" fill="#77736a" stroke="#14120f" stroke-width="0.8" stroke-linejoin="round" /><polygon points="686.6,911.8 681.1,915.3 677.4,922.2 687.2,916.0" fill="#67635b" stroke="#14120f" stroke-width="0.6" stroke-linejoin="round" /><polygon points="686.6,911.8 691.9,916.6 695.6,923.6 687.2,916.0" fill="#58544d" stroke="#14120f" stroke-width="0.6" stroke-linejoin="round" /><polygon points="681.1,915.3 686.5,920.1 685.8,929.7 677.4,922.2" fill="#87857e" stroke="#14120f" stroke-width="0.8" stroke-linejoin="round" /><polygon points="691.9,916.6 686.5,920.1 685.8,929.7 695.6,923.6" fill="#5f5b54" stroke="#14120f" stroke-width="0.8" stroke-linejoin="round" /><polygon points="686.6,911.8 691.9,916.6 686.5,920.1 681.1,915.3" fill="#77736a" stroke="#14120f" stroke-width="0.8" stroke-linejoin="round" /><polygon points="695.7,920.0 690.2,923.5 686.5,930.4 696.3,924.2" fill="#67635b" stroke="#14120f" stroke-width="0.6" stroke-linejoin="round" /><polygon points="695.7,920.0 701.0,924.8 704.7,931.8 696.3,924.2" fill="#58544d" stroke="#14120f" stroke-width="0.6" stroke-linejoin="round" /><polygon points="690.2,923.5 695.5,928.3 694.9,938.0 686.5,930.4" fill="#87857e" stroke="#14120f" stroke-width="0.8" stroke-linejoin="round" /><polygon points="701.0,924.8 695.5,928.3 694.9,938.0 704.7,931.8" fill="#5f5b54" stroke="#14120f" stroke-width="0.8" stroke-linejoin="round" /><polygon points="695.7,920.0 701.0,924.8 695.5,928.3 690.2,923.5" fill="#77736a" stroke="#14120f" stroke-width="0.8" stroke-linejoin="round" /><polygon points="704.8,928.2 699.3,931.7 695.6,938.6 705.4,932.4" fill="#67635b" stroke="#14120f" stroke-width="0.6" stroke-linejoin="round" /><polygon points="704.8,928.2 710.1,933.0 713.8,940.0 705.4,932.4" fill="#58544d" stroke="#14120f" stroke-width="0.6" stroke-linejoin="round" /><polygon points="699.3,931.7 704.6,936.5 704.0,946.2 695.6,938.6" fill="#87857e" stroke="#14120f" stroke-width="0.8" stroke-linejoin="round" /><polygon points="710.1,933.0 704.6,936.5 704.0,946.2 713.8,940.0" fill="#5f5b54" stroke="#14120f" stroke-width="0.8" stroke-linejoin="round" /><polygon points="704.8,928.2 710.1,933.0 704.6,936.5 699.3,931.7" fill="#77736a" stroke="#14120f" stroke-width="0.8" stroke-linejoin="round" /><polygon points="713.9,936.4 708.4,939.9 704.7,946.8 714.5,940.6" fill="#67635b" stroke="#14120f" stroke-width="0.6" stroke-linejoin="round" /><polygon points="713.9,936.4 719.2,941.2 722.9,948.2 714.5,940.6" fill="#58544d" stroke="#14120f" stroke-width="0.6" stroke-linejoin="round" /><polygon points="708.4,939.9 713.7,944.7 713.1,954.4 704.7,946.8" fill="#87857e" stroke="#14120f" stroke-width="0.8" stroke-linejoin="round" /><polygon points="719.2,941.2 713.7,944.7 713.1,954.4 722.9,948.2" fill="#5f5b54" stroke="#14120f" stroke-width="0.8" stroke-linejoin="round" /><polygon points="713.9,936.4 719.2,941.2 713.7,944.7 708.4,939.9" fill="#77736a" stroke="#14120f" stroke-width="0.8" stroke-linejoin="round" /><polygon points="723.0,944.6 717.5,948.1 713.8,955.0 723.6,948.8" fill="#67635b" stroke="#14120f" stroke-width="0.6" stroke-linejoin="round" /><polygon points="723.0,944.6 728.3,949.4 732.0,956.4 723.6,948.8" fill="#58544d" stroke="#14120f" stroke-width="0.6" stroke-linejoin="round" /><polygon points="717.5,948.1 722.8,952.9 722.2,962.6 713.8,955.0" fill="#87857e" stroke="#14120f" stroke-width="0.8" stroke-linejoin="round" /><polygon points="728.3,949.4 722.8,952.9 722.2,962.6 732.0,956.4" fill="#5f5b54" stroke="#14120f" stroke-width="0.8" stroke-linejoin="round" /><polygon points="723.0,944.6 728.3,949.4 722.8,952.9 717.5,948.1" fill="#77736a" stroke="#14120f" stroke-width="0.8" stroke-linejoin="round" /><polygon points="732.1,952.8 726.6,956.3 722.9,963.2 732.7,957.0" fill="#67635b" stroke="#14120f" stroke-width="0.6" stroke-linejoin="round" /><polygon points="732.1,952.8 737.4,957.6 741.1,964.6 732.7,957.0" fill="#58544d" stroke="#14120f" stroke-width="0.6" stroke-linejoin="round" /><polygon points="726.6,956.3 731.9,961.1 731.3,970.8 722.9,963.2" fill="#87857e" stroke="#14120f" stroke-width="0.8" stroke-linejoin="round" /><polygon points="737.4,957.6 731.9,961.1 731.3,970.8 741.1,964.6" fill="#5f5b54" stroke="#14120f" stroke-width="0.8" stroke-linejoin="round" /><polygon points="732.1,952.8 737.4,957.6 731.9,961.1 726.6,956.3" fill="#77736a" stroke="#14120f" stroke-width="0.8" stroke-linejoin="round" /><polygon points="741.1,961.0 735.7,964.5 732.0,971.4 741.8,965.2" fill="#67635b" stroke="#14120f" stroke-width="0.6" stroke-linejoin="round" /><polygon points="741.1,961.0 743.0,962.7 746.7,969.7 741.8,965.2" fill="#58544d" stroke="#14120f" stroke-width="0.6" stroke-linejoin="round" /><polygon points="735.7,964.5 737.5,966.2 736.9,975.9 732.0,971.4" fill="#87857e" stroke="#14120f" stroke-width="0.8" stroke-linejoin="round" /><polygon points="743.0,962.7 737.5,966.2 736.9,975.9 746.7,969.7" fill="#5f5b54" stroke="#14120f" stroke-width="0.8" stroke-linejoin="round" /><polygon points="741.1,961.0 743.0,962.7 737.5,966.2 735.7,964.5" fill="#77736a" stroke="#14120f" stroke-width="0.8" stroke-linejoin="round" /><polygon points="750.6,969.6 745.1,973.0 741.4,979.9 751.2,973.7" fill="#67635b" stroke="#14120f" stroke-width="0.6" stroke-linejoin="round" /><polygon points="750.6,969.6 755.9,974.4 759.6,981.3 751.2,973.7" fill="#58544d" stroke="#14120f" stroke-width="0.6" stroke-linejoin="round" /><polygon points="745.1,973.0 750.4,977.8 749.8,987.5 741.4,979.9" fill="#87857e" stroke="#14120f" stroke-width="0.8" stroke-linejoin="round" /><polygon points="755.9,974.4 750.4,977.8 749.8,987.5 759.6,981.3" fill="#5f5b54" stroke="#14120f" stroke-width="0.8" stroke-linejoin="round" /><polygon points="750.6,969.6 755.9,974.4 750.4,977.8 745.1,973.0" fill="#77736a" stroke="#14120f" stroke-width="0.8" stroke-linejoin="round" /><polygon points="759.7,977.8 754.2,981.2 750.5,988.1 760.3,981.9" fill="#67635b" stroke="#14120f" stroke-width="0.6" stroke-linejoin="round" /><polygon points="759.7,977.8 765.0,982.6 768.7,989.5 760.3,981.9" fill="#58544d" stroke="#14120f" stroke-width="0.6" stroke-linejoin="round" /><polygon points="754.2,981.2 759.5,986.0 758.9,995.7 750.5,988.1" fill="#87857e" stroke="#14120f" stroke-width="0.8" stroke-linejoin="round" /><polygon points="765.0,982.6 759.5,986.0 758.9,995.7 768.7,989.5" fill="#5f5b54" stroke="#14120f" stroke-width="0.8" stroke-linejoin="round" /><polygon points="759.7,977.8 765.0,982.6 759.5,986.0 754.2,981.2" fill="#77736a" stroke="#14120f" stroke-width="0.8" stroke-linejoin="round" /><polygon points="768.8,986.0 763.3,989.4 759.6,996.3 769.4,990.2" fill="#67635b" stroke="#14120f" stroke-width="0.6" stroke-linejoin="round" /><polygon points="768.8,986.0 774.1,990.8 777.8,997.7 769.4,990.2" fill="#58544d" stroke="#14120f" stroke-width="0.6" stroke-linejoin="round" /><polygon points="763.3,989.4 768.6,994.2 768.0,1003.9 759.6,996.3" fill="#87857e" stroke="#14120f" stroke-width="0.8" stroke-linejoin="round" /><polygon points="774.1,990.8 768.6,994.2 768.0,1003.9 777.8,997.7" fill="#5f5b54" stroke="#14120f" stroke-width="0.8" stroke-linejoin="round" /><polygon points="768.8,986.0 774.1,990.8 768.6,994.2 763.3,989.4" fill="#77736a" stroke="#14120f" stroke-width="0.8" stroke-linejoin="round" /><polygon points="777.9,994.2 772.4,997.6 768.7,1004.5 778.5,998.4" fill="#67635b" stroke="#14120f" stroke-width="0.6" stroke-linejoin="round" /><polygon points="777.9,994.2 783.2,999.0 786.9,1006.0 778.5,998.4" fill="#58544d" stroke="#14120f" stroke-width="0.6" stroke-linejoin="round" /><polygon points="772.4,997.6 777.7,1002.4 777.1,1012.1 768.7,1004.5" fill="#87857e" stroke="#14120f" stroke-width="0.8" stroke-linejoin="round" /><polygon points="783.2,999.0 777.7,1002.4 777.1,1012.1 786.9,1006.0" fill="#5f5b54" stroke="#14120f" stroke-width="0.8" stroke-linejoin="round" /><polygon points="777.9,994.2 783.2,999.0 777.7,1002.4 772.4,997.6" fill="#77736a" stroke="#14120f" stroke-width="0.8" stroke-linejoin="round" /><polygon points="786.9,1002.4 781.5,1005.9 777.8,1012.8 787.6,1006.6" fill="#67635b" stroke="#14120f" stroke-width="0.6" stroke-linejoin="round" /><polygon points="786.9,1002.4 792.3,1007.2 796.0,1014.2 787.6,1006.6" fill="#58544d" stroke="#14120f" stroke-width="0.6" stroke-linejoin="round" /><polygon points="781.5,1005.9 786.8,1010.7 786.2,1020.3 777.8,1012.8" fill="#87857e" stroke="#14120f" stroke-width="0.8" stroke-linejoin="round" /><polygon points="792.3,1007.2 786.8,1010.7 786.2,1020.3 796.0,1014.2" fill="#5f5b54" stroke="#14120f" stroke-width="0.8" stroke-linejoin="round" /><polygon points="786.9,1002.4 792.3,1007.2 786.8,1010.7 781.5,1005.9" fill="#77736a" stroke="#14120f" stroke-width="0.8" stroke-linejoin="round" /><polygon points="592.7,845.6 587.2,849.0 583.5,855.9 593.3,849.8" fill="#67635b" stroke="#14120f" stroke-width="0.6" stroke-linejoin="round" /><polygon points="592.7,845.6 602.5,854.5 606.2,861.5 593.3,849.8" fill="#58544d" stroke="#14120f" stroke-width="0.6" stroke-linejoin="round" /><polygon points="587.2,849.0 597.1,857.9 596.5,867.6 583.5,855.9" fill="#87857e" stroke="#14120f" stroke-width="0.8" stroke-linejoin="round" /><polygon points="602.5,854.5 597.1,857.9 596.5,867.6 606.2,861.5" fill="#5f5b54" stroke="#14120f" stroke-width="0.8" stroke-linejoin="round" /><polygon points="592.7,845.6 602.5,854.5 597.1,857.9 587.2,849.0" fill="#77736a" stroke="#14120f" stroke-width="0.8" stroke-linejoin="round" /><polygon points="606.3,857.9 600.8,861.4 597.2,868.3 606.9,862.1" fill="#67635b" stroke="#14120f" stroke-width="0.6" stroke-linejoin="round" /><polygon points="606.3,857.9 611.6,862.7 615.3,869.7 606.9,862.1" fill="#58544d" stroke="#14120f" stroke-width="0.6" stroke-linejoin="round" /><polygon points="600.8,861.4 606.2,866.2 605.6,875.8 597.2,868.3" fill="#87857e" stroke="#14120f" stroke-width="0.8" stroke-linejoin="round" /><polygon points="611.6,862.7 606.2,866.2 605.6,875.8 615.3,869.7" fill="#5f5b54" stroke="#14120f" stroke-width="0.8" stroke-linejoin="round" /><polygon points="606.3,857.9 611.6,862.7 606.2,866.2 600.8,861.4" fill="#77736a" stroke="#14120f" stroke-width="0.8" stroke-linejoin="round" /><polygon points="615.4,866.1 609.9,869.6 606.2,876.5 616.0,870.3" fill="#67635b" stroke="#14120f" stroke-width="0.6" stroke-linejoin="round" /><polygon points="615.4,866.1 620.7,870.9 624.4,877.9 616.0,870.3" fill="#58544d" stroke="#14120f" stroke-width="0.6" stroke-linejoin="round" /><polygon points="609.9,869.6 615.3,874.4 614.6,884.1 606.2,876.5" fill="#87857e" stroke="#14120f" stroke-width="0.8" stroke-linejoin="round" /><polygon points="620.7,870.9 615.3,874.4 614.6,884.1 624.4,877.9" fill="#5f5b54" stroke="#14120f" stroke-width="0.8" stroke-linejoin="round" /><polygon points="615.4,866.1 620.7,870.9 615.3,874.4 609.9,869.6" fill="#77736a" stroke="#14120f" stroke-width="0.8" stroke-linejoin="round" /><polygon points="624.5,874.3 619.0,877.8 615.3,884.7 625.1,878.5" fill="#67635b" stroke="#14120f" stroke-width="0.6" stroke-linejoin="round" /><polygon points="624.5,874.3 629.8,879.1 633.5,886.1 625.1,878.5" fill="#58544d" stroke="#14120f" stroke-width="0.6" stroke-linejoin="round" /><polygon points="619.0,877.8 624.3,882.6 623.7,892.3 615.3,884.7" fill="#87857e" stroke="#14120f" stroke-width="0.8" stroke-linejoin="round" /><polygon points="629.8,879.1 624.3,882.6 623.7,892.3 633.5,886.1" fill="#5f5b54" stroke="#14120f" stroke-width="0.8" stroke-linejoin="round" /><polygon points="624.5,874.3 629.8,879.1 624.3,882.6 619.0,877.8" fill="#77736a" stroke="#14120f" stroke-width="0.8" stroke-linejoin="round" /><polygon points="633.6,882.5 628.1,886.0 624.4,892.9 634.2,886.7" fill="#67635b" stroke="#14120f" stroke-width="0.6" stroke-linejoin="round" /><polygon points="633.6,882.5 638.9,887.3 642.6,894.3 634.2,886.7" fill="#58544d" stroke="#14120f" stroke-width="0.6" stroke-linejoin="round" /><polygon points="628.1,886.0 633.4,890.8 632.8,900.5 624.4,892.9" fill="#87857e" stroke="#14120f" stroke-width="0.8" stroke-linejoin="round" /><polygon points="638.9,887.3 633.4,890.8 632.8,900.5 642.6,894.3" fill="#5f5b54" stroke="#14120f" stroke-width="0.8" stroke-linejoin="round" /><polygon points="633.6,882.5 638.9,887.3 633.4,890.8 628.1,886.0" fill="#77736a" stroke="#14120f" stroke-width="0.8" stroke-linejoin="round" /><polygon points="642.7,890.7 637.2,894.2 633.5,901.1 643.3,894.9" fill="#67635b" stroke="#14120f" stroke-width="0.6" stroke-linejoin="round" /><polygon points="642.7,890.7 648.0,895.5 651.7,902.5 643.3,894.9" fill="#58544d" stroke="#14120f" stroke-width="0.6" stroke-linejoin="round" /><polygon points="637.2,894.2 642.5,899.0 641.9,908.7 633.5,901.1" fill="#87857e" stroke="#14120f" stroke-width="0.8" stroke-linejoin="round" /><polygon points="648.0,895.5 642.5,899.0 641.9,908.7 651.7,902.5" fill="#5f5b54" stroke="#14120f" stroke-width="0.8" stroke-linejoin="round" /><polygon points="642.7,890.7 648.0,895.5 642.5,899.0 637.2,894.2" fill="#77736a" stroke="#14120f" stroke-width="0.8" stroke-linejoin="round" /><polygon points="651.8,898.9 646.3,902.4 642.6,909.3 652.4,903.1" fill="#67635b" stroke="#14120f" stroke-width="0.6" stroke-linejoin="round" /><polygon points="651.8,898.9 657.1,903.7 660.8,910.7 652.4,903.1" fill="#58544d" stroke="#14120f" stroke-width="0.6" stroke-linejoin="round" /><polygon points="646.3,902.4 651.6,907.2 651.0,916.9 642.6,909.3" fill="#87857e" stroke="#14120f" stroke-width="0.8" stroke-linejoin="round" /><polygon points="657.1,903.7 651.6,907.2 651.0,916.9 660.8,910.7" fill="#5f5b54" stroke="#14120f" stroke-width="0.8" stroke-linejoin="round" /><polygon points="651.8,898.9 657.1,903.7 651.6,907.2 646.3,902.4" fill="#77736a" stroke="#14120f" stroke-width="0.8" stroke-linejoin="round" /><polygon points="660.9,907.1 655.4,910.6 651.7,917.5 661.5,911.3" fill="#67635b" stroke="#14120f" stroke-width="0.6" stroke-linejoin="round" /><polygon points="660.9,907.1 666.2,911.9 669.9,918.9 661.5,911.3" fill="#58544d" stroke="#14120f" stroke-width="0.6" stroke-linejoin="round" /><polygon points="655.4,910.6 660.7,915.4 660.1,925.1 651.7,917.5" fill="#87857e" stroke="#14120f" stroke-width="0.8" stroke-linejoin="round" /><polygon points="666.2,911.9 660.7,915.4 660.1,925.1 669.9,918.9" fill="#5f5b54" stroke="#14120f" stroke-width="0.8" stroke-linejoin="round" /><polygon points="660.9,907.1 666.2,911.9 660.7,915.4 655.4,910.6" fill="#77736a" stroke="#14120f" stroke-width="0.8" stroke-linejoin="round" /><polygon points="669.9,915.4 664.5,918.8 660.8,925.7 670.6,919.5" fill="#67635b" stroke="#14120f" stroke-width="0.6" stroke-linejoin="round" /><polygon points="669.9,915.4 675.3,920.2 679.0,927.1 670.6,919.5" fill="#58544d" stroke="#14120f" stroke-width="0.6" stroke-linejoin="round" /><polygon points="664.5,918.8 669.8,923.6 669.2,933.3 660.8,925.7" fill="#87857e" stroke="#14120f" stroke-width="0.8" stroke-linejoin="round" /><polygon points="675.3,920.2 669.8,923.6 669.2,933.3 679.0,927.1" fill="#5f5b54" stroke="#14120f" stroke-width="0.8" stroke-linejoin="round" /><polygon points="669.9,915.4 675.3,920.2 669.8,923.6 664.5,918.8" fill="#77736a" stroke="#14120f" stroke-width="0.8" stroke-linejoin="round" /><polygon points="679.0,923.6 673.6,927.0 669.9,933.9 679.6,927.7" fill="#67635b" stroke="#14120f" stroke-width="0.6" stroke-linejoin="round" /><polygon points="679.0,923.6 684.4,928.4 688.0,935.3 679.6,927.7" fill="#58544d" stroke="#14120f" stroke-width="0.6" stroke-linejoin="round" /><polygon points="673.6,927.0 678.9,931.8 678.3,941.5 669.9,933.9" fill="#87857e" stroke="#14120f" stroke-width="0.8" stroke-linejoin="round" /><polygon points="684.4,928.4 678.9,931.8 678.3,941.5 688.0,935.3" fill="#5f5b54" stroke="#14120f" stroke-width="0.8" stroke-linejoin="round" /><polygon points="679.0,923.6 684.4,928.4 678.9,931.8 673.6,927.0" fill="#77736a" stroke="#14120f" stroke-width="0.8" stroke-linejoin="round" /><polygon points="688.1,931.8 682.7,935.2 679.0,942.1 688.7,936.0" fill="#67635b" stroke="#14120f" stroke-width="0.6" stroke-linejoin="round" /><polygon points="688.1,931.8 693.4,936.6 697.1,943.5 688.7,936.0" fill="#58544d" stroke="#14120f" stroke-width="0.6" stroke-linejoin="round" /><polygon points="682.7,935.2 688.0,940.0 687.4,949.7 679.0,942.1" fill="#87857e" stroke="#14120f" stroke-width="0.8" stroke-linejoin="round" /><polygon points="693.4,936.6 688.0,940.0 687.4,949.7 697.1,943.5" fill="#5f5b54" stroke="#14120f" stroke-width="0.8" stroke-linejoin="round" /><polygon points="688.1,931.8 693.4,936.6 688.0,940.0 682.7,935.2" fill="#77736a" stroke="#14120f" stroke-width="0.8" stroke-linejoin="round" /><polygon points="697.2,940.0 691.8,943.4 688.1,950.3 697.8,944.2" fill="#67635b" stroke="#14120f" stroke-width="0.6" stroke-linejoin="round" /><polygon points="697.2,940.0 702.5,944.8 706.2,951.7 697.8,944.2" fill="#58544d" stroke="#14120f" stroke-width="0.6" stroke-linejoin="round" /><polygon points="691.8,943.4 697.1,948.2 696.5,957.9 688.1,950.3" fill="#87857e" stroke="#14120f" stroke-width="0.8" stroke-linejoin="round" /><polygon points="702.5,944.8 697.1,948.2 696.5,957.9 706.2,951.7" fill="#5f5b54" stroke="#14120f" stroke-width="0.8" stroke-linejoin="round" /><polygon points="697.2,940.0 702.5,944.8 697.1,948.2 691.8,943.4" fill="#77736a" stroke="#14120f" stroke-width="0.8" stroke-linejoin="round" /><polygon points="706.3,948.2 700.8,951.6 697.2,958.6 706.9,952.4" fill="#67635b" stroke="#14120f" stroke-width="0.6" stroke-linejoin="round" /><polygon points="706.3,948.2 711.6,953.0 715.3,960.0 706.9,952.4" fill="#58544d" stroke="#14120f" stroke-width="0.6" stroke-linejoin="round" /><polygon points="700.8,951.6 706.2,956.5 705.6,966.1 697.2,958.6" fill="#87857e" stroke="#14120f" stroke-width="0.8" stroke-linejoin="round" /><polygon points="711.6,953.0 706.2,956.5 705.6,966.1 715.3,960.0" fill="#5f5b54" stroke="#14120f" stroke-width="0.8" stroke-linejoin="round" /><polygon points="706.3,948.2 711.6,953.0 706.2,956.5 700.8,951.6" fill="#77736a" stroke="#14120f" stroke-width="0.8" stroke-linejoin="round" /><polygon points="715.4,956.4 709.9,959.9 706.2,966.8 716.0,960.6" fill="#67635b" stroke="#14120f" stroke-width="0.6" stroke-linejoin="round" /><polygon points="715.4,956.4 720.7,961.2 724.4,968.2 716.0,960.6" fill="#58544d" stroke="#14120f" stroke-width="0.6" stroke-linejoin="round" /><polygon points="709.9,959.9 715.3,964.7 714.6,974.3 706.2,966.8" fill="#87857e" stroke="#14120f" stroke-width="0.8" stroke-linejoin="round" /><polygon points="720.7,961.2 715.3,964.7 714.6,974.3 724.4,968.2" fill="#5f5b54" stroke="#14120f" stroke-width="0.8" stroke-linejoin="round" /><polygon points="715.4,956.4 720.7,961.2 715.3,964.7 709.9,959.9" fill="#77736a" stroke="#14120f" stroke-width="0.8" stroke-linejoin="round" /><polygon points="724.5,964.6 719.0,968.1 715.3,975.0 725.1,968.8" fill="#67635b" stroke="#14120f" stroke-width="0.6" stroke-linejoin="round" /><polygon points="724.5,964.6 730.9,970.4 734.6,977.4 725.1,968.8" fill="#58544d" stroke="#14120f" stroke-width="0.6" stroke-linejoin="round" /><polygon points="719.0,968.1 725.4,973.9 724.8,983.5 715.3,975.0" fill="#87857e" stroke="#14120f" stroke-width="0.8" stroke-linejoin="round" /><polygon points="730.9,970.4 725.4,973.9 724.8,983.5 734.6,977.4" fill="#5f5b54" stroke="#14120f" stroke-width="0.8" stroke-linejoin="round" /><polygon points="724.5,964.6 730.9,970.4 725.4,973.9 719.0,968.1" fill="#77736a" stroke="#14120f" stroke-width="0.8" stroke-linejoin="round" /><polygon points="738.5,977.2 733.0,980.7 729.3,987.6 739.1,981.4" fill="#67635b" stroke="#14120f" stroke-width="0.6" stroke-linejoin="round" /><polygon points="738.5,977.2 743.8,982.0 747.5,989.0 739.1,981.4" fill="#58544d" stroke="#14120f" stroke-width="0.6" stroke-linejoin="round" /><polygon points="733.0,980.7 738.3,985.5 737.7,995.2 729.3,987.6" fill="#87857e" stroke="#14120f" stroke-width="0.8" stroke-linejoin="round" /><polygon points="743.8,982.0 738.3,985.5 737.7,995.2 747.5,989.0" fill="#5f5b54" stroke="#14120f" stroke-width="0.8" stroke-linejoin="round" /><polygon points="738.5,977.2 743.8,982.0 738.3,985.5 733.0,980.7" fill="#77736a" stroke="#14120f" stroke-width="0.8" stroke-linejoin="round" /><polygon points="747.6,985.4 742.1,988.9 738.4,995.8 748.2,989.6" fill="#67635b" stroke="#14120f" stroke-width="0.6" stroke-linejoin="round" /><polygon points="747.6,985.4 752.9,990.2 756.6,997.2 748.2,989.6" fill="#58544d" stroke="#14120f" stroke-width="0.6" stroke-linejoin="round" /><polygon points="742.1,988.9 747.4,993.7 746.8,1003.4 738.4,995.8" fill="#87857e" stroke="#14120f" stroke-width="0.8" stroke-linejoin="round" /><polygon points="752.9,990.2 747.4,993.7 746.8,1003.4 756.6,997.2" fill="#5f5b54" stroke="#14120f" stroke-width="0.8" stroke-linejoin="round" /><polygon points="747.6,985.4 752.9,990.2 747.4,993.7 742.1,988.9" fill="#77736a" stroke="#14120f" stroke-width="0.8" stroke-linejoin="round" /><polygon points="756.7,993.6 751.2,997.1 747.5,1004.0 757.3,997.8" fill="#67635b" stroke="#14120f" stroke-width="0.6" stroke-linejoin="round" /><polygon points="756.7,993.6 762.0,998.4 765.7,1005.4 757.3,997.8" fill="#58544d" stroke="#14120f" stroke-width="0.6" stroke-linejoin="round" /><polygon points="751.2,997.1 756.5,1001.9 755.9,1011.6 747.5,1004.0" fill="#87857e" stroke="#14120f" stroke-width="0.8" stroke-linejoin="round" /><polygon points="762.0,998.4 756.5,1001.9 755.9,1011.6 765.7,1005.4" fill="#5f5b54" stroke="#14120f" stroke-width="0.8" stroke-linejoin="round" /><polygon points="756.7,993.6 762.0,998.4 756.5,1001.9 751.2,997.1" fill="#77736a" stroke="#14120f" stroke-width="0.8" stroke-linejoin="round" /><polygon points="765.7,1001.9 760.3,1005.3 756.6,1012.2 766.3,1006.0" fill="#67635b" stroke="#14120f" stroke-width="0.6" stroke-linejoin="round" /><polygon points="765.7,1001.9 771.1,1006.7 774.8,1013.6 766.3,1006.0" fill="#58544d" stroke="#14120f" stroke-width="0.6" stroke-linejoin="round" /><polygon points="760.3,1005.3 765.6,1010.1 765.0,1019.8 756.6,1012.2" fill="#87857e" stroke="#14120f" stroke-width="0.8" stroke-linejoin="round" /><polygon points="771.1,1006.7 765.6,1010.1 765.0,1019.8 774.8,1013.6" fill="#5f5b54" stroke="#14120f" stroke-width="0.8" stroke-linejoin="round" /><polygon points="765.7,1001.9 771.1,1006.7 765.6,1010.1 760.3,1005.3" fill="#77736a" stroke="#14120f" stroke-width="0.8" stroke-linejoin="round" /><polygon points="774.8,1010.1 769.4,1013.5 765.7,1020.4 775.4,1014.2" fill="#67635b" stroke="#14120f" stroke-width="0.6" stroke-linejoin="round" /><polygon points="774.8,1010.1 780.2,1014.9 783.8,1021.8 775.4,1014.2" fill="#58544d" stroke="#14120f" stroke-width="0.6" stroke-linejoin="round" /><polygon points="769.4,1013.5 774.7,1018.3 774.1,1028.0 765.7,1020.4" fill="#87857e" stroke="#14120f" stroke-width="0.8" stroke-linejoin="round" /><polygon points="780.2,1014.9 774.7,1018.3 774.1,1028.0 783.8,1021.8" fill="#5f5b54" stroke="#14120f" stroke-width="0.8" stroke-linejoin="round" /><polygon points="774.8,1010.1 780.2,1014.9 774.7,1018.3 769.4,1013.5" fill="#77736a" stroke="#14120f" stroke-width="0.8" stroke-linejoin="round" /><polygon points="580.6,853.2 575.1,856.7 571.4,863.6 581.2,857.4" fill="#67635b" stroke="#14120f" stroke-width="0.6" stroke-linejoin="round" /><polygon points="580.6,853.2 593.2,864.6 596.9,871.6 581.2,857.4" fill="#58544d" stroke="#14120f" stroke-width="0.6" stroke-linejoin="round" /><polygon points="575.1,856.7 587.7,868.1 587.1,877.8 571.4,863.6" fill="#87857e" stroke="#14120f" stroke-width="0.8" stroke-linejoin="round" /><polygon points="593.2,864.6 587.7,868.1 587.1,877.8 596.9,871.6" fill="#5f5b54" stroke="#14120f" stroke-width="0.8" stroke-linejoin="round" /><polygon points="580.6,853.2 593.2,864.6 587.7,868.1 575.1,856.7" fill="#77736a" stroke="#14120f" stroke-width="0.8" stroke-linejoin="round" /><polygon points="596.9,868.0 591.5,871.5 587.8,878.4 597.5,872.2" fill="#67635b" stroke="#14120f" stroke-width="0.6" stroke-linejoin="round" /><polygon points="596.9,868.0 602.2,872.8 605.9,879.8 597.5,872.2" fill="#58544d" stroke="#14120f" stroke-width="0.6" stroke-linejoin="round" /><polygon points="591.5,871.5 596.8,876.3 596.2,886.0 587.8,878.4" fill="#87857e" stroke="#14120f" stroke-width="0.8" stroke-linejoin="round" /><polygon points="602.2,872.8 596.8,876.3 596.2,886.0 605.9,879.8" fill="#5f5b54" stroke="#14120f" stroke-width="0.8" stroke-linejoin="round" /><polygon points="596.9,868.0 602.2,872.8 596.8,876.3 591.5,871.5" fill="#77736a" stroke="#14120f" stroke-width="0.8" stroke-linejoin="round" /><polygon points="606.0,876.2 600.6,879.7 596.9,886.6 606.6,880.4" fill="#67635b" stroke="#14120f" stroke-width="0.6" stroke-linejoin="round" /><polygon points="606.0,876.2 611.3,881.0 615.0,888.0 606.6,880.4" fill="#58544d" stroke="#14120f" stroke-width="0.6" stroke-linejoin="round" /><polygon points="600.6,879.7 605.9,884.5 605.3,894.2 596.9,886.6" fill="#87857e" stroke="#14120f" stroke-width="0.8" stroke-linejoin="round" /><polygon points="611.3,881.0 605.9,884.5 605.3,894.2 615.0,888.0" fill="#5f5b54" stroke="#14120f" stroke-width="0.8" stroke-linejoin="round" /><polygon points="606.0,876.2 611.3,881.0 605.9,884.5 600.6,879.7" fill="#77736a" stroke="#14120f" stroke-width="0.8" stroke-linejoin="round" /><polygon points="615.1,884.4 609.6,887.9 606.0,894.8 615.7,888.6" fill="#67635b" stroke="#14120f" stroke-width="0.6" stroke-linejoin="round" /><polygon points="615.1,884.4 620.4,889.2 624.1,896.2 615.7,888.6" fill="#58544d" stroke="#14120f" stroke-width="0.6" stroke-linejoin="round" /><polygon points="609.6,887.9 615.0,892.7 614.4,902.4 606.0,894.8" fill="#87857e" stroke="#14120f" stroke-width="0.8" stroke-linejoin="round" /><polygon points="620.4,889.2 615.0,892.7 614.4,902.4 624.1,896.2" fill="#5f5b54" stroke="#14120f" stroke-width="0.8" stroke-linejoin="round" /><polygon points="615.1,884.4 620.4,889.2 615.0,892.7 609.6,887.9" fill="#77736a" stroke="#14120f" stroke-width="0.8" stroke-linejoin="round" /><polygon points="624.2,892.6 618.7,896.1 615.0,903.0 624.8,896.8" fill="#67635b" stroke="#14120f" stroke-width="0.6" stroke-linejoin="round" /><polygon points="624.2,892.6 629.5,897.4 633.2,904.4 624.8,896.8" fill="#58544d" stroke="#14120f" stroke-width="0.6" stroke-linejoin="round" /><polygon points="618.7,896.1 624.1,900.9 623.4,910.6 615.0,903.0" fill="#87857e" stroke="#14120f" stroke-width="0.8" stroke-linejoin="round" /><polygon points="629.5,897.4 624.1,900.9 623.4,910.6 633.2,904.4" fill="#5f5b54" stroke="#14120f" stroke-width="0.8" stroke-linejoin="round" /><polygon points="624.2,892.6 629.5,897.4 624.1,900.9 618.7,896.1" fill="#77736a" stroke="#14120f" stroke-width="0.8" stroke-linejoin="round" /><polygon points="633.3,900.9 627.8,904.3 624.1,911.2 633.9,905.0" fill="#67635b" stroke="#14120f" stroke-width="0.6" stroke-linejoin="round" /><polygon points="633.3,900.9 638.6,905.7 642.3,912.6 633.9,905.0" fill="#58544d" stroke="#14120f" stroke-width="0.6" stroke-linejoin="round" /><polygon points="627.8,904.3 633.1,909.1 632.5,918.8 624.1,911.2" fill="#87857e" stroke="#14120f" stroke-width="0.8" stroke-linejoin="round" /><polygon points="638.6,905.7 633.1,909.1 632.5,918.8 642.3,912.6" fill="#5f5b54" stroke="#14120f" stroke-width="0.8" stroke-linejoin="round" /><polygon points="633.3,900.9 638.6,905.7 633.1,909.1 627.8,904.3" fill="#77736a" stroke="#14120f" stroke-width="0.8" stroke-linejoin="round" /><polygon points="642.4,909.1 636.9,912.5 633.2,919.4 643.0,913.2" fill="#67635b" stroke="#14120f" stroke-width="0.6" stroke-linejoin="round" /><polygon points="642.4,909.1 647.7,913.9 651.4,920.8 643.0,913.2" fill="#58544d" stroke="#14120f" stroke-width="0.6" stroke-linejoin="round" /><polygon points="636.9,912.5 642.2,917.3 641.6,927.0 633.2,919.4" fill="#87857e" stroke="#14120f" stroke-width="0.8" stroke-linejoin="round" /><polygon points="647.7,913.9 642.2,917.3 641.6,927.0 651.4,920.8" fill="#5f5b54" stroke="#14120f" stroke-width="0.8" stroke-linejoin="round" /><polygon points="642.4,909.1 647.7,913.9 642.2,917.3 636.9,912.5" fill="#77736a" stroke="#14120f" stroke-width="0.8" stroke-linejoin="round" /><polygon points="651.5,917.3 646.0,920.7 642.3,927.6 652.1,921.5" fill="#67635b" stroke="#14120f" stroke-width="0.6" stroke-linejoin="round" /><polygon points="651.5,917.3 656.8,922.1 660.5,929.0 652.1,921.5" fill="#58544d" stroke="#14120f" stroke-width="0.6" stroke-linejoin="round" /><polygon points="646.0,920.7 651.3,925.5 650.7,935.2 642.3,927.6" fill="#87857e" stroke="#14120f" stroke-width="0.8" stroke-linejoin="round" /><polygon points="656.8,922.1 651.3,925.5 650.7,935.2 660.5,929.0" fill="#5f5b54" stroke="#14120f" stroke-width="0.8" stroke-linejoin="round" /><polygon points="651.5,917.3 656.8,922.1 651.3,925.5 646.0,920.7" fill="#77736a" stroke="#14120f" stroke-width="0.8" stroke-linejoin="round" /><polygon points="660.6,925.5 655.1,928.9 651.4,935.8 661.2,929.7" fill="#67635b" stroke="#14120f" stroke-width="0.6" stroke-linejoin="round" /><polygon points="660.6,925.5 665.9,930.3 669.6,937.3 661.2,929.7" fill="#58544d" stroke="#14120f" stroke-width="0.6" stroke-linejoin="round" /><polygon points="655.1,928.9 660.4,933.7 659.8,943.4 651.4,935.8" fill="#87857e" stroke="#14120f" stroke-width="0.8" stroke-linejoin="round" /><polygon points="665.9,930.3 660.4,933.7 659.8,943.4 669.6,937.3" fill="#5f5b54" stroke="#14120f" stroke-width="0.8" stroke-linejoin="round" /><polygon points="660.6,925.5 665.9,930.3 660.4,933.7 655.1,928.9" fill="#77736a" stroke="#14120f" stroke-width="0.8" stroke-linejoin="round" /><polygon points="669.7,933.7 664.2,937.2 660.5,944.1 670.3,937.9" fill="#67635b" stroke="#14120f" stroke-width="0.6" stroke-linejoin="round" /><polygon points="669.7,933.7 675.0,938.5 678.7,945.5 670.3,937.9" fill="#58544d" stroke="#14120f" stroke-width="0.6" stroke-linejoin="round" /><polygon points="664.2,937.2 669.5,942.0 668.9,951.6 660.5,944.1" fill="#87857e" stroke="#14120f" stroke-width="0.8" stroke-linejoin="round" /><polygon points="675.0,938.5 669.5,942.0 668.9,951.6 678.7,945.5" fill="#5f5b54" stroke="#14120f" stroke-width="0.8" stroke-linejoin="round" /><polygon points="669.7,933.7 675.0,938.5 669.5,942.0 664.2,937.2" fill="#77736a" stroke="#14120f" stroke-width="0.8" stroke-linejoin="round" /><polygon points="678.7,941.9 673.3,945.4 669.6,952.3 679.4,946.1" fill="#67635b" stroke="#14120f" stroke-width="0.6" stroke-linejoin="round" /><polygon points="678.7,941.9 684.1,946.7 687.8,953.7 679.4,946.1" fill="#58544d" stroke="#14120f" stroke-width="0.6" stroke-linejoin="round" /><polygon points="673.3,945.4 678.6,950.2 678.0,959.9 669.6,952.3" fill="#87857e" stroke="#14120f" stroke-width="0.8" stroke-linejoin="round" /><polygon points="684.1,946.7 678.6,950.2 678.0,959.9 687.8,953.7" fill="#5f5b54" stroke="#14120f" stroke-width="0.8" stroke-linejoin="round" /><polygon points="678.7,941.9 684.1,946.7 678.6,950.2 673.3,945.4" fill="#77736a" stroke="#14120f" stroke-width="0.8" stroke-linejoin="round" /><polygon points="687.8,950.1 682.4,953.6 678.7,960.5 688.4,954.3" fill="#67635b" stroke="#14120f" stroke-width="0.6" stroke-linejoin="round" /><polygon points="687.8,950.1 693.2,954.9 696.8,961.9 688.4,954.3" fill="#58544d" stroke="#14120f" stroke-width="0.6" stroke-linejoin="round" /><polygon points="682.4,953.6 687.7,958.4 687.1,968.1 678.7,960.5" fill="#87857e" stroke="#14120f" stroke-width="0.8" stroke-linejoin="round" /><polygon points="693.2,954.9 687.7,958.4 687.1,968.1 696.8,961.9" fill="#5f5b54" stroke="#14120f" stroke-width="0.8" stroke-linejoin="round" /><polygon points="687.8,950.1 693.2,954.9 687.7,958.4 682.4,953.6" fill="#77736a" stroke="#14120f" stroke-width="0.8" stroke-linejoin="round" /><polygon points="696.9,958.3 691.5,961.8 687.8,968.7 697.5,962.5" fill="#67635b" stroke="#14120f" stroke-width="0.6" stroke-linejoin="round" /><polygon points="696.9,958.3 702.2,963.1 705.9,970.1 697.5,962.5" fill="#58544d" stroke="#14120f" stroke-width="0.6" stroke-linejoin="round" /><polygon points="691.5,961.8 696.8,966.6 696.2,976.3 687.8,968.7" fill="#87857e" stroke="#14120f" stroke-width="0.8" stroke-linejoin="round" /><polygon points="702.2,963.1 696.8,966.6 696.2,976.3 705.9,970.1" fill="#5f5b54" stroke="#14120f" stroke-width="0.8" stroke-linejoin="round" /><polygon points="696.9,958.3 702.2,963.1 696.8,966.6 691.5,961.8" fill="#77736a" stroke="#14120f" stroke-width="0.8" stroke-linejoin="round" /><polygon points="706.0,966.5 700.6,970.0 696.9,976.9 706.6,970.7" fill="#67635b" stroke="#14120f" stroke-width="0.6" stroke-linejoin="round" /><polygon points="706.0,966.5 718.8,978.1 722.5,985.0 706.6,970.7" fill="#58544d" stroke="#14120f" stroke-width="0.6" stroke-linejoin="round" /><polygon points="700.6,970.0 713.3,981.5 712.7,991.2 696.9,976.9" fill="#87857e" stroke="#14120f" stroke-width="0.8" stroke-linejoin="round" /><polygon points="718.8,978.1 713.3,981.5 712.7,991.2 722.5,985.0" fill="#5f5b54" stroke="#14120f" stroke-width="0.8" stroke-linejoin="round" /><polygon points="706.0,966.5 718.8,978.1 713.3,981.5 700.6,970.0" fill="#77736a" stroke="#14120f" stroke-width="0.8" stroke-linejoin="round" /><polygon points="726.4,984.9 720.9,988.4 717.2,995.3 727.0,989.1" fill="#67635b" stroke="#14120f" stroke-width="0.6" stroke-linejoin="round" /><polygon points="726.4,984.9 731.7,989.7 735.4,996.7 727.0,989.1" fill="#58544d" stroke="#14120f" stroke-width="0.6" stroke-linejoin="round" /><polygon points="720.9,988.4 726.2,993.2 725.6,1002.8 717.2,995.3" fill="#87857e" stroke="#14120f" stroke-width="0.8" stroke-linejoin="round" /><polygon points="731.7,989.7 726.2,993.2 725.6,1002.8 735.4,996.7" fill="#5f5b54" stroke="#14120f" stroke-width="0.8" stroke-linejoin="round" /><polygon points="726.4,984.9 731.7,989.7 726.2,993.2 720.9,988.4" fill="#77736a" stroke="#14120f" stroke-width="0.8" stroke-linejoin="round" /><polygon points="735.5,993.1 730.0,996.6 726.3,1003.5 736.1,997.3" fill="#67635b" stroke="#14120f" stroke-width="0.6" stroke-linejoin="round" /><polygon points="735.5,993.1 740.8,997.9 744.5,1004.9 736.1,997.3" fill="#58544d" stroke="#14120f" stroke-width="0.6" stroke-linejoin="round" /><polygon points="730.0,996.6 735.3,1001.4 734.7,1011.1 726.3,1003.5" fill="#87857e" stroke="#14120f" stroke-width="0.8" stroke-linejoin="round" /><polygon points="740.8,997.9 735.3,1001.4 734.7,1011.1 744.5,1004.9" fill="#5f5b54" stroke="#14120f" stroke-width="0.8" stroke-linejoin="round" /><polygon points="735.5,993.1 740.8,997.9 735.3,1001.4 730.0,996.6" fill="#77736a" stroke="#14120f" stroke-width="0.8" stroke-linejoin="round" /><polygon points="744.5,1001.3 739.1,1004.8 735.4,1011.7 745.1,1005.5" fill="#67635b" stroke="#14120f" stroke-width="0.6" stroke-linejoin="round" /><polygon points="744.5,1001.3 749.9,1006.1 753.6,1013.1 745.1,1005.5" fill="#58544d" stroke="#14120f" stroke-width="0.6" stroke-linejoin="round" /><polygon points="739.1,1004.8 744.4,1009.6 743.8,1019.3 735.4,1011.7" fill="#87857e" stroke="#14120f" stroke-width="0.8" stroke-linejoin="round" /><polygon points="749.9,1006.1 744.4,1009.6 743.8,1019.3 753.6,1013.1" fill="#5f5b54" stroke="#14120f" stroke-width="0.8" stroke-linejoin="round" /><polygon points="744.5,1001.3 749.9,1006.1 744.4,1009.6 739.1,1004.8" fill="#77736a" stroke="#14120f" stroke-width="0.8" stroke-linejoin="round" /><polygon points="753.6,1009.5 748.2,1013.0 744.5,1019.9 754.2,1013.7" fill="#67635b" stroke="#14120f" stroke-width="0.6" stroke-linejoin="round" /><polygon points="753.6,1009.5 759.0,1014.3 762.6,1021.3 754.2,1013.7" fill="#58544d" stroke="#14120f" stroke-width="0.6" stroke-linejoin="round" /><polygon points="748.2,1013.0 753.5,1017.8 752.9,1027.5 744.5,1019.9" fill="#87857e" stroke="#14120f" stroke-width="0.8" stroke-linejoin="round" /><polygon points="759.0,1014.3 753.5,1017.8 752.9,1027.5 762.6,1021.3" fill="#5f5b54" stroke="#14120f" stroke-width="0.8" stroke-linejoin="round" /><polygon points="753.6,1009.5 759.0,1014.3 753.5,1017.8 748.2,1013.0" fill="#77736a" stroke="#14120f" stroke-width="0.8" stroke-linejoin="round" /><polygon points="762.7,1017.7 757.3,1021.2 753.6,1028.1 763.3,1021.9" fill="#67635b" stroke="#14120f" stroke-width="0.6" stroke-linejoin="round" /><polygon points="762.7,1017.7 768.0,1022.5 771.7,1029.5 763.3,1021.9" fill="#58544d" stroke="#14120f" stroke-width="0.6" stroke-linejoin="round" /><polygon points="757.3,1021.2 762.6,1026.0 762.0,1035.7 753.6,1028.1" fill="#87857e" stroke="#14120f" stroke-width="0.8" stroke-linejoin="round" /><polygon points="768.0,1022.5 762.6,1026.0 762.0,1035.7 771.7,1029.5" fill="#5f5b54" stroke="#14120f" stroke-width="0.8" stroke-linejoin="round" /><polygon points="762.7,1017.7 768.0,1022.5 762.6,1026.0 757.3,1021.2" fill="#77736a" stroke="#14120f" stroke-width="0.8" stroke-linejoin="round" /><polygon points="568.5,860.9 563.0,864.4 559.3,871.3 569.1,865.1" fill="#67635b" stroke="#14120f" stroke-width="0.6" stroke-linejoin="round" /><polygon points="568.5,860.9 586.5,877.2 590.2,884.2 569.1,865.1" fill="#58544d" stroke="#14120f" stroke-width="0.6" stroke-linejoin="round" /><polygon points="563.0,864.4 581.0,880.7 580.4,890.4 559.3,871.3" fill="#87857e" stroke="#14120f" stroke-width="0.8" stroke-linejoin="round" /><polygon points="586.5,877.2 581.0,880.7 580.4,890.4 590.2,884.2" fill="#5f5b54" stroke="#14120f" stroke-width="0.8" stroke-linejoin="round" /><polygon points="568.5,860.9 586.5,877.2 581.0,880.7 563.0,864.4" fill="#77736a" stroke="#14120f" stroke-width="0.8" stroke-linejoin="round" /><polygon points="590.3,880.6 584.8,884.1 581.1,891.0 590.9,884.8" fill="#67635b" stroke="#14120f" stroke-width="0.6" stroke-linejoin="round" /><polygon points="590.3,880.6 595.6,885.4 599.3,892.4 590.9,884.8" fill="#58544d" stroke="#14120f" stroke-width="0.6" stroke-linejoin="round" /><polygon points="584.8,884.1 590.1,888.9 589.5,898.6 581.1,891.0" fill="#87857e" stroke="#14120f" stroke-width="0.8" stroke-linejoin="round" /><polygon points="595.6,885.4 590.1,888.9 589.5,898.6 599.3,892.4" fill="#5f5b54" stroke="#14120f" stroke-width="0.8" stroke-linejoin="round" /><polygon points="590.3,880.6 595.6,885.4 590.1,888.9 584.8,884.1" fill="#77736a" stroke="#14120f" stroke-width="0.8" stroke-linejoin="round" /><polygon points="599.4,888.8 593.9,892.3 590.2,899.2 600.0,893.0" fill="#67635b" stroke="#14120f" stroke-width="0.6" stroke-linejoin="round" /><polygon points="599.4,888.8 604.7,893.6 608.4,900.6 600.0,893.0" fill="#58544d" stroke="#14120f" stroke-width="0.6" stroke-linejoin="round" /><polygon points="593.9,892.3 599.2,897.1 598.6,906.8 590.2,899.2" fill="#87857e" stroke="#14120f" stroke-width="0.8" stroke-linejoin="round" /><polygon points="604.7,893.6 599.2,897.1 598.6,906.8 608.4,900.6" fill="#5f5b54" stroke="#14120f" stroke-width="0.8" stroke-linejoin="round" /><polygon points="599.4,888.8 604.7,893.6 599.2,897.1 593.9,892.3" fill="#77736a" stroke="#14120f" stroke-width="0.8" stroke-linejoin="round" /><polygon points="608.5,897.0 603.0,900.5 599.3,907.4 609.1,901.2" fill="#67635b" stroke="#14120f" stroke-width="0.6" stroke-linejoin="round" /><polygon points="608.5,897.0 613.8,901.8 617.5,908.8 609.1,901.2" fill="#58544d" stroke="#14120f" stroke-width="0.6" stroke-linejoin="round" /><polygon points="603.0,900.5 608.3,905.3 607.7,915.0 599.3,907.4" fill="#87857e" stroke="#14120f" stroke-width="0.8" stroke-linejoin="round" /><polygon points="613.8,901.8 608.3,905.3 607.7,915.0 617.5,908.8" fill="#5f5b54" stroke="#14120f" stroke-width="0.8" stroke-linejoin="round" /><polygon points="608.5,897.0 613.8,901.8 608.3,905.3 603.0,900.5" fill="#77736a" stroke="#14120f" stroke-width="0.8" stroke-linejoin="round" /><polygon points="617.5,905.2 612.1,908.7 608.4,915.6 618.2,909.4" fill="#67635b" stroke="#14120f" stroke-width="0.6" stroke-linejoin="round" /><polygon points="617.5,905.2 622.9,910.0 626.6,917.0 618.2,909.4" fill="#58544d" stroke="#14120f" stroke-width="0.6" stroke-linejoin="round" /><polygon points="612.1,908.7 617.4,913.5 616.8,923.2 608.4,915.6" fill="#87857e" stroke="#14120f" stroke-width="0.8" stroke-linejoin="round" /><polygon points="622.9,910.0 617.4,913.5 616.8,923.2 626.6,917.0" fill="#5f5b54" stroke="#14120f" stroke-width="0.8" stroke-linejoin="round" /><polygon points="617.5,905.2 622.9,910.0 617.4,913.5 612.1,908.7" fill="#77736a" stroke="#14120f" stroke-width="0.8" stroke-linejoin="round" /><polygon points="626.6,913.4 621.2,916.9 617.5,923.8 627.2,917.6" fill="#67635b" stroke="#14120f" stroke-width="0.6" stroke-linejoin="round" /><polygon points="626.6,913.4 632.0,918.3 635.6,925.2 627.2,917.6" fill="#58544d" stroke="#14120f" stroke-width="0.6" stroke-linejoin="round" /><polygon points="621.2,916.9 626.5,921.7 625.9,931.4 617.5,923.8" fill="#87857e" stroke="#14120f" stroke-width="0.8" stroke-linejoin="round" /><polygon points="632.0,918.3 626.5,921.7 625.9,931.4 635.6,925.2" fill="#5f5b54" stroke="#14120f" stroke-width="0.8" stroke-linejoin="round" /><polygon points="626.6,913.4 632.0,918.3 626.5,921.7 621.2,916.9" fill="#77736a" stroke="#14120f" stroke-width="0.8" stroke-linejoin="round" /><polygon points="635.7,921.7 630.3,925.1 626.6,932.0 636.3,925.8" fill="#67635b" stroke="#14120f" stroke-width="0.6" stroke-linejoin="round" /><polygon points="635.7,921.7 641.0,926.5 644.7,933.4 636.3,925.8" fill="#58544d" stroke="#14120f" stroke-width="0.6" stroke-linejoin="round" /><polygon points="630.3,925.1 635.6,929.9 635.0,939.6 626.6,932.0" fill="#87857e" stroke="#14120f" stroke-width="0.8" stroke-linejoin="round" /><polygon points="641.0,926.5 635.6,929.9 635.0,939.6 644.7,933.4" fill="#5f5b54" stroke="#14120f" stroke-width="0.8" stroke-linejoin="round" /><polygon points="635.7,921.7 641.0,926.5 635.6,929.9 630.3,925.1" fill="#77736a" stroke="#14120f" stroke-width="0.8" stroke-linejoin="round" /><polygon points="644.8,929.9 639.4,933.3 635.7,940.2 645.4,934.0" fill="#67635b" stroke="#14120f" stroke-width="0.6" stroke-linejoin="round" /><polygon points="644.8,929.9 650.1,934.7 653.8,941.6 645.4,934.0" fill="#58544d" stroke="#14120f" stroke-width="0.6" stroke-linejoin="round" /><polygon points="639.4,933.3 644.7,938.1 644.1,947.8 635.7,940.2" fill="#87857e" stroke="#14120f" stroke-width="0.8" stroke-linejoin="round" /><polygon points="650.1,934.7 644.7,938.1 644.1,947.8 653.8,941.6" fill="#5f5b54" stroke="#14120f" stroke-width="0.8" stroke-linejoin="round" /><polygon points="644.8,929.9 650.1,934.7 644.7,938.1 639.4,933.3" fill="#77736a" stroke="#14120f" stroke-width="0.8" stroke-linejoin="round" /><polygon points="653.9,938.1 648.4,941.5 644.7,948.4 654.5,942.3" fill="#67635b" stroke="#14120f" stroke-width="0.6" stroke-linejoin="round" /><polygon points="653.9,938.1 659.2,942.9 662.9,949.8 654.5,942.3" fill="#58544d" stroke="#14120f" stroke-width="0.6" stroke-linejoin="round" /><polygon points="648.4,941.5 653.8,946.3 653.2,956.0 644.7,948.4" fill="#87857e" stroke="#14120f" stroke-width="0.8" stroke-linejoin="round" /><polygon points="659.2,942.9 653.8,946.3 653.2,956.0 662.9,949.8" fill="#5f5b54" stroke="#14120f" stroke-width="0.8" stroke-linejoin="round" /><polygon points="653.9,938.1 659.2,942.9 653.8,946.3 648.4,941.5" fill="#77736a" stroke="#14120f" stroke-width="0.8" stroke-linejoin="round" /><polygon points="663.0,946.3 657.5,949.7 653.8,956.6 663.6,950.5" fill="#67635b" stroke="#14120f" stroke-width="0.6" stroke-linejoin="round" /><polygon points="663.0,946.3 668.3,951.1 672.0,958.1 663.6,950.5" fill="#58544d" stroke="#14120f" stroke-width="0.6" stroke-linejoin="round" /><polygon points="657.5,949.7 662.8,954.5 662.2,964.2 653.8,956.6" fill="#87857e" stroke="#14120f" stroke-width="0.8" stroke-linejoin="round" /><polygon points="668.3,951.1 662.8,954.5 662.2,964.2 672.0,958.1" fill="#5f5b54" stroke="#14120f" stroke-width="0.8" stroke-linejoin="round" /><polygon points="663.0,946.3 668.3,951.1 662.8,954.5 657.5,949.7" fill="#77736a" stroke="#14120f" stroke-width="0.8" stroke-linejoin="round" /><polygon points="672.1,954.5 666.6,958.0 662.9,964.9 672.7,958.7" fill="#67635b" stroke="#14120f" stroke-width="0.6" stroke-linejoin="round" /><polygon points="672.1,954.5 677.4,959.3 681.1,966.3 672.7,958.7" fill="#58544d" stroke="#14120f" stroke-width="0.6" stroke-linejoin="round" /><polygon points="666.6,958.0 671.9,962.8 671.3,972.4 662.9,964.9" fill="#87857e" stroke="#14120f" stroke-width="0.8" stroke-linejoin="round" /><polygon points="677.4,959.3 671.9,962.8 671.3,972.4 681.1,966.3" fill="#5f5b54" stroke="#14120f" stroke-width="0.8" stroke-linejoin="round" /><polygon points="672.1,954.5 677.4,959.3 671.9,962.8 666.6,958.0" fill="#77736a" stroke="#14120f" stroke-width="0.8" stroke-linejoin="round" /><polygon points="681.2,962.7 675.7,966.2 672.0,973.1 681.8,966.9" fill="#67635b" stroke="#14120f" stroke-width="0.6" stroke-linejoin="round" /><polygon points="681.2,962.7 686.5,967.5 690.2,974.5 681.8,966.9" fill="#58544d" stroke="#14120f" stroke-width="0.6" stroke-linejoin="round" /><polygon points="675.7,966.2 681.0,971.0 680.4,980.7 672.0,973.1" fill="#87857e" stroke="#14120f" stroke-width="0.8" stroke-linejoin="round" /><polygon points="686.5,967.5 681.0,971.0 680.4,980.7 690.2,974.5" fill="#5f5b54" stroke="#14120f" stroke-width="0.8" stroke-linejoin="round" /><polygon points="681.2,962.7 686.5,967.5 681.0,971.0 675.7,966.2" fill="#77736a" stroke="#14120f" stroke-width="0.8" stroke-linejoin="round" /><polygon points="690.3,970.9 684.8,974.4 681.1,981.3 690.9,975.1" fill="#67635b" stroke="#14120f" stroke-width="0.6" stroke-linejoin="round" /><polygon points="690.3,970.9 706.7,985.7 710.4,992.7 690.9,975.1" fill="#58544d" stroke="#14120f" stroke-width="0.6" stroke-linejoin="round" /><polygon points="684.8,974.4 701.2,989.2 700.6,998.9 681.1,981.3" fill="#87857e" stroke="#14120f" stroke-width="0.8" stroke-linejoin="round" /><polygon points="706.7,985.7 701.2,989.2 700.6,998.9 710.4,992.7" fill="#5f5b54" stroke="#14120f" stroke-width="0.8" stroke-linejoin="round" /><polygon points="690.3,970.9 706.7,985.7 701.2,989.2 684.8,974.4" fill="#77736a" stroke="#14120f" stroke-width="0.8" stroke-linejoin="round" /><polygon points="714.3,992.6 708.8,996.0 705.1,1002.9 714.9,996.7" fill="#67635b" stroke="#14120f" stroke-width="0.6" stroke-linejoin="round" /><polygon points="714.3,992.6 719.6,997.4 723.3,1004.3 714.9,996.7" fill="#58544d" stroke="#14120f" stroke-width="0.6" stroke-linejoin="round" /><polygon points="708.8,996.0 714.1,1000.8 713.5,1010.5 705.1,1002.9" fill="#87857e" stroke="#14120f" stroke-width="0.8" stroke-linejoin="round" /><polygon points="719.6,997.4 714.1,1000.8 713.5,1010.5 723.3,1004.3" fill="#5f5b54" stroke="#14120f" stroke-width="0.8" stroke-linejoin="round" /><polygon points="714.3,992.6 719.6,997.4 714.1,1000.8 708.8,996.0" fill="#77736a" stroke="#14120f" stroke-width="0.8" stroke-linejoin="round" /><polygon points="723.3,1000.8 717.9,1004.2 714.2,1011.1 723.9,1005.0" fill="#67635b" stroke="#14120f" stroke-width="0.6" stroke-linejoin="round" /><polygon points="723.3,1000.8 728.7,1005.6 732.4,1012.5 723.9,1005.0" fill="#58544d" stroke="#14120f" stroke-width="0.6" stroke-linejoin="round" /><polygon points="717.9,1004.2 723.2,1009.0 722.6,1018.7 714.2,1011.1" fill="#87857e" stroke="#14120f" stroke-width="0.8" stroke-linejoin="round" /><polygon points="728.7,1005.6 723.2,1009.0 722.6,1018.7 732.4,1012.5" fill="#5f5b54" stroke="#14120f" stroke-width="0.8" stroke-linejoin="round" /><polygon points="723.3,1000.8 728.7,1005.6 723.2,1009.0 717.9,1004.2" fill="#77736a" stroke="#14120f" stroke-width="0.8" stroke-linejoin="round" /><polygon points="732.4,1009.0 727.0,1012.4 723.3,1019.3 733.0,1013.2" fill="#67635b" stroke="#14120f" stroke-width="0.6" stroke-linejoin="round" /><polygon points="732.4,1009.0 737.7,1013.8 741.4,1020.7 733.0,1013.2" fill="#58544d" stroke="#14120f" stroke-width="0.6" stroke-linejoin="round" /><polygon points="727.0,1012.4 732.3,1017.2 731.7,1026.9 723.3,1019.3" fill="#87857e" stroke="#14120f" stroke-width="0.8" stroke-linejoin="round" /><polygon points="737.7,1013.8 732.3,1017.2 731.7,1026.9 741.4,1020.7" fill="#5f5b54" stroke="#14120f" stroke-width="0.8" stroke-linejoin="round" /><polygon points="732.4,1009.0 737.7,1013.8 732.3,1017.2 727.0,1012.4" fill="#77736a" stroke="#14120f" stroke-width="0.8" stroke-linejoin="round" /><polygon points="741.5,1017.2 736.1,1020.6 732.4,1027.6 742.1,1021.4" fill="#67635b" stroke="#14120f" stroke-width="0.6" stroke-linejoin="round" /><polygon points="741.5,1017.2 746.8,1022.0 750.5,1029.0 742.1,1021.4" fill="#58544d" stroke="#14120f" stroke-width="0.6" stroke-linejoin="round" /><polygon points="736.1,1020.6 741.4,1025.5 740.8,1035.1 732.4,1027.6" fill="#87857e" stroke="#14120f" stroke-width="0.8" stroke-linejoin="round" /><polygon points="746.8,1022.0 741.4,1025.5 740.8,1035.1 750.5,1029.0" fill="#5f5b54" stroke="#14120f" stroke-width="0.8" stroke-linejoin="round" /><polygon points="741.5,1017.2 746.8,1022.0 741.4,1025.5 736.1,1020.6" fill="#77736a" stroke="#14120f" stroke-width="0.8" stroke-linejoin="round" /><polygon points="750.6,1025.4 745.1,1028.9 741.5,1035.8 751.2,1029.6" fill="#67635b" stroke="#14120f" stroke-width="0.6" stroke-linejoin="round" /><polygon points="750.6,1025.4 755.9,1030.2 759.6,1037.2 751.2,1029.6" fill="#58544d" stroke="#14120f" stroke-width="0.6" stroke-linejoin="round" /><polygon points="745.1,1028.9 750.5,1033.7 749.9,1043.3 741.5,1035.8" fill="#87857e" stroke="#14120f" stroke-width="0.8" stroke-linejoin="round" /><polygon points="755.9,1030.2 750.5,1033.7 749.9,1043.3 759.6,1037.2" fill="#5f5b54" stroke="#14120f" stroke-width="0.8" stroke-linejoin="round" /><polygon points="750.6,1025.4 755.9,1030.2 750.5,1033.7 745.1,1028.9" fill="#77736a" stroke="#14120f" stroke-width="0.8" stroke-linejoin="round" /><polygon points="556.3,868.6 550.9,872.0 547.2,878.9 557.0,872.8" fill="#67635b" stroke="#14120f" stroke-width="0.6" stroke-linejoin="round" /><polygon points="556.3,868.6 561.7,873.4 565.4,880.4 557.0,872.8" fill="#58544d" stroke="#14120f" stroke-width="0.6" stroke-linejoin="round" /><polygon points="550.9,872.0 556.2,876.8 555.6,886.5 547.2,878.9" fill="#87857e" stroke="#14120f" stroke-width="0.8" stroke-linejoin="round" /><polygon points="561.7,873.4 556.2,876.8 555.6,886.5 565.4,880.4" fill="#5f5b54" stroke="#14120f" stroke-width="0.8" stroke-linejoin="round" /><polygon points="556.3,868.6 561.7,873.4 556.2,876.8 550.9,872.0" fill="#77736a" stroke="#14120f" stroke-width="0.8" stroke-linejoin="round" /><polygon points="565.4,876.8 560.0,880.3 556.3,887.2 566.0,881.0" fill="#67635b" stroke="#14120f" stroke-width="0.6" stroke-linejoin="round" /><polygon points="565.4,876.8 570.8,881.6 574.4,888.6 566.0,881.0" fill="#58544d" stroke="#14120f" stroke-width="0.6" stroke-linejoin="round" /><polygon points="560.0,880.3 565.3,885.1 564.7,894.7 556.3,887.2" fill="#87857e" stroke="#14120f" stroke-width="0.8" stroke-linejoin="round" /><polygon points="570.8,881.6 565.3,885.1 564.7,894.7 574.4,888.6" fill="#5f5b54" stroke="#14120f" stroke-width="0.8" stroke-linejoin="round" /><polygon points="565.4,876.8 570.8,881.6 565.3,885.1 560.0,880.3" fill="#77736a" stroke="#14120f" stroke-width="0.8" stroke-linejoin="round" /><polygon points="574.5,885.0 569.1,888.5 565.4,895.4 575.1,889.2" fill="#67635b" stroke="#14120f" stroke-width="0.6" stroke-linejoin="round" /><polygon points="574.5,885.0 594.4,902.9 598.1,909.9 575.1,889.2" fill="#58544d" stroke="#14120f" stroke-width="0.6" stroke-linejoin="round" /><polygon points="569.1,888.5 588.9,906.4 588.3,916.1 565.4,895.4" fill="#87857e" stroke="#14120f" stroke-width="0.8" stroke-linejoin="round" /><polygon points="594.4,902.9 588.9,906.4 588.3,916.1 598.1,909.9" fill="#5f5b54" stroke="#14120f" stroke-width="0.8" stroke-linejoin="round" /><polygon points="574.5,885.0 594.4,902.9 588.9,906.4 569.1,888.5" fill="#77736a" stroke="#14120f" stroke-width="0.8" stroke-linejoin="round" /><polygon points="598.2,906.3 592.7,909.8 589.0,916.7 598.8,910.5" fill="#67635b" stroke="#14120f" stroke-width="0.6" stroke-linejoin="round" /><polygon points="598.2,906.3 618.0,924.3 621.7,931.2 598.8,910.5" fill="#58544d" stroke="#14120f" stroke-width="0.6" stroke-linejoin="round" /><polygon points="592.7,909.8 612.6,927.7 612.0,937.4 589.0,916.7" fill="#87857e" stroke="#14120f" stroke-width="0.8" stroke-linejoin="round" /><polygon points="618.0,924.3 612.6,927.7 612.0,937.4 621.7,931.2" fill="#5f5b54" stroke="#14120f" stroke-width="0.8" stroke-linejoin="round" /><polygon points="598.2,906.3 618.0,924.3 612.6,927.7 592.7,909.8" fill="#77736a" stroke="#14120f" stroke-width="0.8" stroke-linejoin="round" /><polygon points="621.8,927.7 616.3,931.1 612.6,938.0 622.4,931.9" fill="#67635b" stroke="#14120f" stroke-width="0.6" stroke-linejoin="round" /><polygon points="621.8,927.7 641.7,945.6 645.4,952.6 622.4,931.9" fill="#58544d" stroke="#14120f" stroke-width="0.6" stroke-linejoin="round" /><polygon points="616.3,931.1 636.2,949.1 635.6,958.8 612.6,938.0" fill="#87857e" stroke="#14120f" stroke-width="0.8" stroke-linejoin="round" /><polygon points="641.7,945.6 636.2,949.1 635.6,958.8 645.4,952.6" fill="#5f5b54" stroke="#14120f" stroke-width="0.8" stroke-linejoin="round" /><polygon points="621.8,927.7 641.7,945.6 636.2,949.1 616.3,931.1" fill="#77736a" stroke="#14120f" stroke-width="0.8" stroke-linejoin="round" /><polygon points="645.4,949.0 640.0,952.5 636.3,959.4 646.0,953.2" fill="#67635b" stroke="#14120f" stroke-width="0.6" stroke-linejoin="round" /><polygon points="645.4,949.0 650.8,953.8 654.4,960.8 646.0,953.2" fill="#58544d" stroke="#14120f" stroke-width="0.6" stroke-linejoin="round" /><polygon points="640.0,952.5 645.3,957.3 644.7,967.0 636.3,959.4" fill="#87857e" stroke="#14120f" stroke-width="0.8" stroke-linejoin="round" /><polygon points="650.8,953.8 645.3,957.3 644.7,967.0 654.4,960.8" fill="#5f5b54" stroke="#14120f" stroke-width="0.8" stroke-linejoin="round" /><polygon points="645.4,949.0 650.8,953.8 645.3,957.3 640.0,952.5" fill="#77736a" stroke="#14120f" stroke-width="0.8" stroke-linejoin="round" /><polygon points="702.1,1000.2 696.7,1003.7 693.0,1010.6 702.7,1004.4" fill="#67635b" stroke="#14120f" stroke-width="0.6" stroke-linejoin="round" /><polygon points="702.1,1000.2 707.5,1005.0 711.2,1012.0 702.7,1004.4" fill="#58544d" stroke="#14120f" stroke-width="0.6" stroke-linejoin="round" /><polygon points="696.7,1003.7 702.0,1008.5 701.4,1018.2 693.0,1010.6" fill="#87857e" stroke="#14120f" stroke-width="0.8" stroke-linejoin="round" /><polygon points="707.5,1005.0 702.0,1008.5 701.4,1018.2 711.2,1012.0" fill="#5f5b54" stroke="#14120f" stroke-width="0.8" stroke-linejoin="round" /><polygon points="702.1,1000.2 707.5,1005.0 702.0,1008.5 696.7,1003.7" fill="#77736a" stroke="#14120f" stroke-width="0.8" stroke-linejoin="round" /><polygon points="711.2,1008.4 705.8,1011.9 702.1,1018.8 711.8,1012.6" fill="#67635b" stroke="#14120f" stroke-width="0.6" stroke-linejoin="round" /><polygon points="711.2,1008.4 716.5,1013.2 720.2,1020.2 711.8,1012.6" fill="#58544d" stroke="#14120f" stroke-width="0.6" stroke-linejoin="round" /><polygon points="705.8,1011.9 711.1,1016.7 710.5,1026.4 702.1,1018.8" fill="#87857e" stroke="#14120f" stroke-width="0.8" stroke-linejoin="round" /><polygon points="716.5,1013.2 711.1,1016.7 710.5,1026.4 720.2,1020.2" fill="#5f5b54" stroke="#14120f" stroke-width="0.8" stroke-linejoin="round" /><polygon points="711.2,1008.4 716.5,1013.2 711.1,1016.7 705.8,1011.9" fill="#77736a" stroke="#14120f" stroke-width="0.8" stroke-linejoin="round" /><polygon points="720.3,1016.6 714.9,1020.1 711.2,1027.0 720.9,1020.8" fill="#67635b" stroke="#14120f" stroke-width="0.6" stroke-linejoin="round" /><polygon points="720.3,1016.6 725.6,1021.4 729.3,1028.4 720.9,1020.8" fill="#58544d" stroke="#14120f" stroke-width="0.6" stroke-linejoin="round" /><polygon points="714.9,1020.1 720.2,1024.9 719.6,1034.6 711.2,1027.0" fill="#87857e" stroke="#14120f" stroke-width="0.8" stroke-linejoin="round" /><polygon points="725.6,1021.4 720.2,1024.9 719.6,1034.6 729.3,1028.4" fill="#5f5b54" stroke="#14120f" stroke-width="0.8" stroke-linejoin="round" /><polygon points="720.3,1016.6 725.6,1021.4 720.2,1024.9 714.9,1020.1" fill="#77736a" stroke="#14120f" stroke-width="0.8" stroke-linejoin="round" /><polygon points="729.4,1024.9 723.9,1028.3 720.3,1035.2 730.0,1029.0" fill="#67635b" stroke="#14120f" stroke-width="0.6" stroke-linejoin="round" /><polygon points="729.4,1024.9 734.7,1029.7 738.4,1036.6 730.0,1029.0" fill="#58544d" stroke="#14120f" stroke-width="0.6" stroke-linejoin="round" /><polygon points="723.9,1028.3 729.3,1033.1 728.7,1042.8 720.3,1035.2" fill="#87857e" stroke="#14120f" stroke-width="0.8" stroke-linejoin="round" /><polygon points="734.7,1029.7 729.3,1033.1 728.7,1042.8 738.4,1036.6" fill="#5f5b54" stroke="#14120f" stroke-width="0.8" stroke-linejoin="round" /><polygon points="729.4,1024.9 734.7,1029.7 729.3,1033.1 723.9,1028.3" fill="#77736a" stroke="#14120f" stroke-width="0.8" stroke-linejoin="round" /><polygon points="738.5,1033.1 733.0,1036.5 729.3,1043.4 739.1,1037.2" fill="#67635b" stroke="#14120f" stroke-width="0.6" stroke-linejoin="round" /><polygon points="738.5,1033.1 743.8,1037.9 747.5,1044.8 739.1,1037.2" fill="#58544d" stroke="#14120f" stroke-width="0.6" stroke-linejoin="round" /><polygon points="733.0,1036.5 738.4,1041.3 737.7,1051.0 729.3,1043.4" fill="#87857e" stroke="#14120f" stroke-width="0.8" stroke-linejoin="round" /><polygon points="743.8,1037.9 738.4,1041.3 737.7,1051.0 747.5,1044.8" fill="#5f5b54" stroke="#14120f" stroke-width="0.8" stroke-linejoin="round" /><polygon points="738.5,1033.1 743.8,1037.9 738.4,1041.3 733.0,1036.5" fill="#77736a" stroke="#14120f" stroke-width="0.8" stroke-linejoin="round" /></g>
<defs><filter id="vcb" x="-40%" y="-40%" width="180%" height="180%"><feGaussianBlur stdDeviation="4"/></filter></defs><ellipse cx="1871" cy="234" rx="34" ry="12" transform="rotate(-27 1871 234)" fill="#000" opacity=".17" filter="url(#vcb)"/><polygon points="1830.7,182.2 1866.4,165.8 1900.1,185.5 1862.1,205.9" fill="rgba(240,240,240,.62)"/><polygon points="1830.7,182.2 1862.1,205.9 1862.5,244.4 1833.2,219.4" fill="rgba(232,232,232,.66)"/><polygon points="1862.1,205.9 1900.1,185.5 1895.3,222.7 1862.5,244.4" fill="rgba(226,226,226,.68)"/><polygon points="1830.7,182.2 1866.4,165.8 1900.1,185.5 1862.1,205.9" fill="none" stroke="#666" stroke-width=".8" stroke-dasharray="4.500 3.500"/><polygon points="1830.7,182.2 1862.1,205.9 1862.5,244.4 1833.2,219.4" fill="none" stroke="#666" stroke-width=".8" stroke-dasharray="4.500 3.500"/><polygon points="1862.1,205.9 1900.1,185.5 1895.3,222.7 1862.5,244.4" fill="none" stroke="#666" stroke-width=".8" stroke-dasharray="4.500 3.500"/><path d="M1827.8 176.4L1833.2 219.4" stroke="#3c3ce0" stroke-width="2"/><path d="M1833.2 219.4L1867.3 250.6" stroke="#f08c8c" stroke-width="2"/><text x="1823.0" y="173.5" font-size="13.500" fill="#6a6af5" font-family="Liberation Sans,sans-serif">Z</text><text x="1867.9" y="259.9" font-size="13.500" fill="#f57f7f" font-family="Liberation Sans,sans-serif">X</text><text transform="matrix(.86,.50,-.88,.42,1863.5,187.0)" text-anchor="middle" dominant-baseline="central" font-family="Noto Sans CJK JP,sans-serif" font-size="21" fill="#8b919b" font-weight="400">上</text><text transform="matrix(.80,.62,0,1.050,1846.5,213.0)" text-anchor="middle" dominant-baseline="central" font-family="Noto Sans CJK JP,sans-serif" font-size="21" fill="#8b919b" font-weight="400">前</text><text transform="matrix(.93,-.52,-.10,1,1880.2,214.4)" text-anchor="middle" dominant-baseline="central" font-family="Noto Sans CJK JP,sans-serif" font-size="21" fill="#8b919b" font-weight="400">右</text>
</svg>
<div class="abs" style="left:0;top:0;width:8px;height:1168px;background:#fff"></div>
<div class="abs" style="left:0;top:0;width:8px;height:100px;background:#d8dee9"></div>
<div class="abs" style="left:0;top:38px;width:8px;height:52px;background:#fff;border-radius:0 6px 0 0"></div>
<div class="abs" style="left:-6px;top:48px;width:8px;height:26px;background:#cfdcf7;border-radius:50%"></div>
<div class="abs" style="left:0;top:88px;width:8px;height:16px;background:#fff"></div>
<svg class="abs" style="left:0;top:96px" width="4" height="4"><path d="M0 0L3 3H0Z" fill="#555"/></svg>
<div class="abs" style="left:0;top:104px;width:6px;height:285px;background:#5c5c5c"></div>
<svg class="abs" style="left:0;top:1028px" width="4" height="4"><path d="M0 0H3L0 3Z" fill="#777"/></svg>
<div class="abs" style="left:0;top:1040px;width:8px;height:128px;background:#000"></div>
<div class="abs" style="left:0;top:1040px;width:8px;height:40px;background:#131313"></div>
<svg class="abs" style="left:0;top:1065px" width="4" height="4"><path d="M0 0H3L0 3Z" fill="#aaa"/></svg>
<div class="abs" style="left:8px;top:1160px;width:1920px;height:8px;background:#101010"></div>
<div class="abs" style="left:56px;top:1160px;width:288px;height:8px;background:#f3f3f3;border-top:1px solid #ddd;box-sizing:border-box"></div>
<div class="abs" style="left:886px;top:1160px;width:47px;height:8px;background:#343434"></div>
<div class="abs" style="left:1913px;top:1161px;width:1px;height:7px;background:#777"></div>
<div class="abs" style="left:284px;top:1166px;width:2px;height:2px;background:#6aa6ee"></div><div class="abs" style="left:297px;top:1165px;width:2px;height:3px;background:#3d87e6"></div>
<div class="abs" style="left:316px;top:1164px;width:13px;height:8px;background:#b8892e;border-radius:6px 6px 0 0"></div>
<div id="title"><svg class="abs" style="left:3px;top:3px" width="15" height="17" viewBox="0 0 15 17"><path d="M1.500 1.500C1.500.6 2.200 0 3 0h8.500C13 0 14 1 14 2.500V13H1.500Z" fill="#ff6b00"/><path d="M1.500 12H14v2.500C14 16 13 17 11.500 17H3.500C2.300 17 1.500 16 1.500 15Z" fill="#8a2f0a"/><path d="M1.500 2L0 3.500V14l1.500 1Z" fill="#c74600"/><path d="M5.500 3H10.500V4.800H7.500V6.500H10V8.200H7.500V11H5.500Z" fill="#fff"/><path d="M5 13.500h5.500" stroke="#f3b79a" stroke-width="1.400"/></svg>
<span class="t">pc-8801fe2_open v2 (g catsin) - Autodesk Fusion <span style="font-size:12px;letter-spacing:0">個人用(商用利用不可)</span></span>
<svg class="abs" style="left:1798px;top:4px" width="110" height="14"><path d="M0 6.500H10.500" stroke="#111" stroke-width="1.100"/><path d="M45.500 3.500H53.500V11.500H45.500ZM47.500 3.500V1.500H55.500V9.500H53.500" stroke="#111" stroke-width="1.100" fill="none"/><path d="M91.500 1.500L101.500 11.500M101.500 1.500L91.500 11.500" stroke="#111" stroke-width="1.200"/></svg>
</div>
<div id="qat"><div id="tab"></div>
<svg class="abs" style="left:9px;top:9px" width="14" height="14" fill="#555"><rect x="0.0" y="0.0" width="4" height="4" rx=".6"/><rect x="0.0" y="5.0" width="4" height="4" rx=".6"/><rect x="0.0" y="10.0" width="4" height="4" rx=".6"/><rect x="5.0" y="0.0" width="4" height="4" rx=".6"/><rect x="5.0" y="5.0" width="4" height="4" rx=".6"/><rect x="5.0" y="10.0" width="4" height="4" rx=".6"/><rect x="10.0" y="0.0" width="4" height="4" rx=".6"/><rect x="10.0" y="5.0" width="4" height="4" rx=".6"/><rect x="10.0" y="10.0" width="4" height="4" rx=".6"/></svg>
<svg class="abs" style="left:42px;top:8px" width="14" height="16"><path d="M0 1.200C0 .5.500 0 1.200 0H8l5.200 5.200V14.800c0 .7-.5 1.200-1.200 1.200H1.200C.5 16 0 15.500 0 14.800Z" fill="#555"/><path d="M8.300 0V4.900H13.200" stroke="#c9c9c9" stroke-width="1" fill="none"/></svg>
<svg class="abs" style="left:61.3px;top:13.8px" width="7" height="4.8"><path d="M0 0H7 L3.5 4.3Z" fill="#555"/></svg>
<svg class="abs" style="left:87px;top:9px" width="14" height="14"><path d="M.7 1.500C.7 1 1 .7 1.500.7H12.500C13 .7 13.300 1 13.300 1.500V12.500C13.300 13 13 13.300 12.500 13.300H1.500C1 13.300.7 13 .7 12.500Z" fill="none" stroke="#8e8e8e" stroke-width="1.400"/><rect x="3.200" y=".7" width="7.600" height="4.600" fill="#8e8e8e"/><rect x="3.200" y="8" width="7.600" height="5.300" fill="none" stroke="#8e8e8e" stroke-width="1.300"/><rect x="7.800" y="1.400" width="1.600" height="3" fill="#c9c9c9"/></svg>
<svg class="abs" style="left:119.500px;top:9px" width="16" height="15"><path d="M2.500 5.500H9C12 5.500 14 7.500 14 10.500V14" stroke="#555" stroke-width="1.700" fill="none"/><path d="M6.500 1L1.500 5.500 6.500 10" stroke="#555" stroke-width="1.700" fill="none"/></svg>
<svg class="abs" style="left:139.8px;top:13.8px" width="7" height="4.8"><path d="M0 0H7 L3.5 4.3Z" fill="#555"/></svg>
<svg class="abs" style="left:159px;top:9px" width="16" height="15"><path d="M13.500 5.500H7C4 5.500 2 7.500 2 10.500V14" stroke="#9a9a9a" stroke-width="1.600" fill="none"/><path d="M9.500 1L14.500 5.500 9.500 10" stroke="#9a9a9a" stroke-width="1.600" fill="none"/></svg>
<svg class="abs" style="left:179.3px;top:13.8px" width="7" height="4.8"><path d="M0 0H7 L3.5 4.3Z" fill="#9a9a9a"/></svg>
<svg class="abs" style="left:852.500px;top:11px" width="15" height="16"><path d="M7.500 0L15 3.800V11.800L7.500 16 0 11.800V3.800Z" fill="#f07a1c"/><path d="M7.500 0L15 3.800 7.500 7.800 0 3.800Z" fill="#ffa25a"/><path d="M7.500 7.800V16L0 11.800V3.800Z" fill="#f98632"/><path d="M7.500 7.800V16L15 11.800V3.800Z" fill="#d9640e"/></svg>
<div class="abs" style="left:873px;top:11.500px;font-size:12px;line-height:14px;color:#3a3a3a;white-space:nowrap">pc-8801fe2_open v2</div>
<svg class="abs" style="left:1638.500px;top:14px" width="9" height="9"><path d="M.5.500L8.500 8.500M8.500.500L.5 8.500" stroke="#444" stroke-width="1.200"/></svg>
<div class="abs" style="left:1658px;top:4px;width:28px;height:28px;background:#b6b6b6;border-radius:3px 3px 0 0"></div><svg class="abs" style="left:1665.500px;top:11.500px" width="13" height="13"><path d="M6.500 0V13M0 6.500H13" stroke="#555" stroke-width="2"/></svg>
<svg class="abs" style="left:1697.500px;top:7.500px" width="17" height="17"><circle cx="8.500" cy="8.500" r="8.200" fill="#1993dd"/><path d="M7.500 5.500V13M3.800 9.200H11.200M11.800 3.500V7M10 5.200H13.600" stroke="#fff" stroke-width="1.600"/></svg>
<svg class="abs" style="left:1730.500px;top:7.500px" width="17" height="17"><circle cx="8.500" cy="8.500" r="7.300" fill="none" stroke="#555" stroke-width="1.800"/><path d="M4 13L8 9M7 6.500L11 10.500 13 8.500C14 7.500 14 5.500 13 4.500S10 3.500 9 4.500Z" fill="#555" stroke="#555" stroke-width="1"/><path d="M10.500 3L12 4.500M13 5.500L14.500 7" stroke="#555" stroke-width="1.200"/></svg>
<svg class="abs" style="left:1763.500px;top:7.500px" width="17" height="17"><circle cx="8.500" cy="8.500" r="7.300" fill="none" stroke="#555" stroke-width="1.800"/><circle cx="8.500" cy="8.500" r="5.200" fill="#d6d6d6" stroke="#555" stroke-width="1"/><path d="M8.500 4.500V9H12" stroke="#444" stroke-width="1.500" fill="none"/></svg>
<div class="abs" style="left:1783.500px;top:9.500px;font-size:11px;color:#333">1</div>
<svg class="abs" style="left:1813px;top:7px" width="17" height="18"><path d="M8 1.500C4.800 1.500 3.500 4 3.500 7V10.500L1.500 13.500H14.500L12.500 10.500V7C12.500 4 11.200 1.500 8 1.500Z" fill="#555"/><path d="M6.200 14.800A1.900 1.900 0 0 0 9.800 14.800Z" fill="#555"/><circle cx="12.500" cy="3.800" r="3" fill="#1993dd"/></svg>
<svg class="abs" style="left:1845.500px;top:7.500px" width="17" height="17"><circle cx="8.500" cy="8.500" r="8.200" fill="#555"/></svg><div class="abs" style="left:1850px;top:6.500px;font-size:13px;font-weight:bold;color:#eee;line-height:18px">?</div>
<svg class="abs" style="left:1882.500px;top:4px" width="25" height="25"><defs><radialGradient id="av" cx=".35" cy=".3" r=".9"><stop offset="0" stop-color="#c6cdd8"/><stop offset="1" stop-color="#6f7f95"/></radialGradient><clipPath id="avc"><circle cx="12.500" cy="12.500" r="12.300"/></clipPath></defs><circle cx="12.500" cy="12.500" r="12.300" fill="url(#av)"/><g clip-path="url(#avc)" fill="#3a4558"><ellipse cx="13" cy="9.500" rx="4.800" ry="5.800"/><path d="M3 25C3 18.500 8 16 13 16S23 18.500 23 25Z"/></g></svg>
</div>
<div id="tb"></div>
<div class="abs" style="left:20px;top:65.500px;width:108px;height:60px;border:1px solid #d8d8d8;border-radius:5px;box-sizing:border-box"></div>
<div class="abs" style="left:53px;top:88.500px;font-size:10.67px;line-height:14px;color:#111;font-weight:bold;white-space:nowrap"><span class="k" style="width:34.14px"><span style="transform:scaleX(0.800)">デザイン</span></span></div>
<svg class="abs" style="left:93.0px;top:94.5px" width="6" height="4.2"><path d="M0 0H6 L3.0 3.7Z" fill="#222"/></svg>
<div class="tabl" style="left:158.6px;color:#1b8fd8"><span class="k" style="width:32.71px"><span style="transform:scaleX(0.766)">ソリッド</span></span></div>
<div class="tabl" style="left:236.4px"><span class="k" style="width:41.13px"><span style="transform:scaleX(0.771)">サーフェス</span></span></div>
<div class="tabl" style="left:319.2px"><span class="k" style="width:31.69px"><span style="transform:scaleX(0.743)">メッシュ</span></span></div>
<div class="tabl" style="left:397.0px"><span class="k" style="width:32.71px"><span style="transform:scaleX(0.766)">フォーム</span></span></div>
<div class="tabl" style="left:475.5px"><span class="k" style="width:25.29px"><span style="transform:scaleX(0.790)">シート</span></span> <span class="k" style="width:25.29px"><span style="transform:scaleX(0.790)">メタル</span></span></div>
<div class="tabl" style="left:572.8px"><span class="k" style="width:49.56px"><span style="transform:scaleX(0.774)">プラスチック</span></span></div>
<div class="tabl" style="left:666.3px"><span class="k" style="width:56.98px"><span style="transform:scaleX(0.763)">ユーティリティ</span></span></div>
<div class="abs" style="left:146.500px;top:75.500px;width:56px;height:3px;background:#0a97d9"></div>
<div class="grp" style="left:229.6px">作成</div>
<svg class="abs" style="left:254.5px;top:125.5px" width="5.5" height="3.9"><path d="M0 0H5.5 L2.75 3.4Z" fill="#222"/></svg>
<div class="grp" style="left:476.2px">修正</div>
<svg class="abs" style="left:501.5px;top:125.5px" width="5.5" height="3.9"><path d="M0 0H5.5 L2.75 3.4Z" fill="#222"/></svg>
<div class="grp" style="left:650.3px"><span class="k" style="width:42.15px"><span style="transform:scaleX(0.790)">アセンブリ</span></span></div>
<svg class="abs" style="left:694.0px;top:125.5px" width="5.5" height="3.9"><path d="M0 0H5.5 L2.75 3.4Z" fill="#222"/></svg>
<div class="grp" style="left:739.2px"><span class="k" style="width:89.69px"><span style="transform:scaleX(0.764)">コンフィギュレーション</span></span></div>
<svg class="abs" style="left:828.2px;top:125.5px" width="5.5" height="3.9"><path d="M0 0H5.5 L2.75 3.4Z" fill="#222"/></svg>
<div class="grp" style="left:864.1px">構築</div>
<svg class="abs" style="left:889.2px;top:125.5px" width="5.5" height="3.9"><path d="M0 0H5.5 L2.75 3.4Z" fill="#222"/></svg>
<div class="grp" style="left:922.5px">検査</div>
<svg class="abs" style="left:947.2px;top:125.5px" width="5.5" height="3.9"><path d="M0 0H5.5 L2.75 3.4Z" fill="#222"/></svg>
<div class="grp" style="left:998.8px">挿入</div>
<svg class="abs" style="left:1022.4px;top:125.5px" width="5.5" height="3.9"><path d="M0 0H5.5 L2.75 3.4Z" fill="#222"/></svg>
<div class="grp" style="left:1078.6px">選択</div>
<svg class="abs" style="left:1102.3px;top:125.5px" width="5.5" height="3.9"><path d="M0 0H5.5 L2.75 3.4Z" fill="#222"/></svg>
<div class="sep" style="left:358.5px"></div>
<div class="sep" style="left:628.0px"></div>
<div class="sep" style="left:724.5px"></div>
<div class="sep" style="left:848.5px"></div>
<div class="sep" style="left:908.0px"></div>
<div class="sep" style="left:966.5px"></div>
<div class="sep" style="left:1063.5px"></div>
<svg class="abs" style="left:145.0px;top:82.0px" width="32.0" height="32.0" viewBox="0 0 32.0 32.0" ><g fill="#5a5a5a"><rect x="0" y="0" width="3" height="3"/><rect x="27" y="0" width="3" height="3"/><rect x="0" y="27" width="3" height="3"/><rect x="7" y="7" width="2.600" height="2.600"/><rect x="20" y="7" width="2.600" height="2.600"/><rect x="7" y="20" width="2.600" height="2.600"/></g><path d="M3 1.500H27M1.500 3V27M28.500 3V17M3 28.500H17" stroke="#5a5a5a" stroke-width="1" stroke-dasharray="9 1.500" fill="none"/><path d="M9.600 8.300H20M8.300 9.600V20M21.300 9.600C21.300 16 15 21.300 9.600 21.300" stroke="#5a5a5a" stroke-width="1" fill="none"/><path d="M18.500 24.800H32M25.200 18V31.500" stroke="#22a340" stroke-width="4.400" fill="none"/></svg>
<svg class="abs" style="left:188.8px;top:82.0px" width="32.0" height="32.0" viewBox="0 0 32.0 32.0" ><polygon points="0.0,27.0 19.0,27.0 24.0,21.0 24.0,26.0 19.0,32.0 0.0,32.0" fill="#b9b9b9"/><polygon points="0.0,7.0 5.5,1.5 24.5,1.5 19.0,7.0" fill="#8fcdfa"/><polygon points="19.0,7.0 24.5,1.5 24.5,21.5 19.0,27.0" fill="#4a90cc"/><polygon points="0.0,7.0 19.0,7.0 19.0,27.0 0.0,27.0" fill="#6db3e8"/><path d="M28 26V4" stroke="#222" stroke-width="1.200"/><path d="M25.600 6.500L28 .8l2.400 5.700Z" fill="#222"/></svg>
<svg class="abs" style="left:230.2px;top:83.5px" width="33.0" height="30.0" viewBox="0 0 33.0 30.0" ><path d="M30 7C22 -1 9 0 3 6" stroke="#333" stroke-width="1.100" fill="none"/><path d="M1 7.500L6.800 4.200 5.200 8.800Z" fill="#333"/><path d="M1 14C8 4 24 3 32 12L26 19C20 12 12 13 7 20Z" fill="#8fcdfa"/><path d="M1 14L7 20C12 13 20 12 26 19V27C20 20 12 21 7 28L1 22Z" fill="#6db3e8"/><path d="M1 14L7 20V28L1 22Z" fill="#4a90cc"/><path d="M26 19L32 12V20L26 27Z" fill="#fff" stroke="#444" stroke-width="1"/></svg>
<svg class="abs" style="left:273.8px;top:81.5px" width="33.0" height="33.0" viewBox="0 0 33.0 33.0" ><polygon points="0.0,6.5 6.5,0.0 31.5,0.0 25.0,6.5" fill="#efefef" stroke="#6a6a6a" stroke-width="1" stroke-linejoin="round"/><polygon points="25.0,6.5 31.5,0.0 31.5,25.0 25.0,31.5" fill="#bcbcbc" stroke="#6a6a6a" stroke-width="1" stroke-linejoin="round"/><polygon points="0.0,6.5 25.0,6.5 25.0,31.5 0.0,31.5" fill="#dedede" stroke="#6a6a6a" stroke-width="1" stroke-linejoin="round"/><defs><clipPath id="hc"><circle cx="13" cy="19" r="6.200"/></clipPath></defs><circle cx="13" cy="19" r="8" fill="#e8e8e8" stroke="#707070" stroke-width="1.100"/><circle cx="13" cy="19" r="6.200" fill="#dcecfa"/><circle cx="11" cy="21" r="6.400" fill="#4a90cc" clip-path="url(#hc)"/><circle cx="13" cy="19" r="6.200" fill="none" stroke="#3f7fb8" stroke-width=".6"/></svg>
<svg class="abs" style="left:316.7px;top:83.9px" width="29.0" height="29.0" viewBox="0 0 29.0 29.0" ><path d="M6 3.500H21M3.500 6V21M6 24.500H21" stroke="#666" stroke-width="1" fill="none"/><rect x=".5" y=".5" width="6" height="6" fill="#fff" stroke="#666"/><rect x="21" y="0" width="7" height="7" fill="#6db3e8"/><rect x="0" y="21" width="7" height="7" fill="#6db3e8"/><rect x="21" y="21" width="7" height="7" fill="#6db3e8"/></svg>
<svg class="abs" style="left:371.5px;top:81.5px" width="32.0" height="32.0" viewBox="0 0 32.0 32.0" ><polygon points="0.5,6.5 6.5,0.5 11.0,0.5 11.0,31.0 0.5,31.0" fill="#dedede" stroke="#6a6a6a" stroke-width="1" stroke-linejoin="round"/><polygon points="7.0,7.0 12.5,1.5 22.5,1.5 17.0,7.0" fill="#8fcdfa"/><polygon points="17.0,7.0 22.5,1.5 22.5,26.0 17.0,31.5" fill="#4a90cc"/><polygon points="7.0,7.0 17.0,7.0 17.0,31.5 7.0,31.5" fill="#6db3e8"/><path d="M19.500 16H27" stroke="#222" stroke-width="1.200"/><path d="M26 13.600L30.500 16 26 18.400Z" fill="#222"/></svg>
<svg class="abs" style="left:414.0px;top:81.5px" width="33.0" height="33.0" viewBox="0 0 33.0 33.0" ><polygon points="0.5,8.0 8.0,0.5 20.0,0.5 12.0,8.0" fill="#efefef" stroke="#6a6a6a" stroke-width="1" stroke-linejoin="round"/><path d="M.5 8H12C20 8 25 14 25 22V31.500H.5Z" fill="#dedede" stroke="#6a6a6a" stroke-linejoin="round"/><path d="M25 22L32 15V24.500L25 31.500Z" fill="#bcbcbc" stroke="#6a6a6a" stroke-linejoin="round"/><path d="M12 8L20 .5C27 1 32 7 32 15L25 22C25 14 20 8 12 8Z" fill="#6db3e8"/></svg>
<svg class="abs" style="left:457.0px;top:81.5px" width="33.0" height="33.0" viewBox="0 0 33.0 33.0" ><polygon points="0.5,6.5 7.0,0.0 31.5,0.0 25.0,6.5" fill="#efefef" stroke="#6a6a6a" stroke-width="1" stroke-linejoin="round"/><polygon points="25.0,6.5 31.5,0.0 31.5,25.0 25.0,31.5" fill="#bcbcbc" stroke="#6a6a6a" stroke-width="1" stroke-linejoin="round"/><polygon points="0.5,6.5 25.0,6.5 25.0,31.5 0.5,31.5" fill="#e6e6e6" stroke="#6a6a6a" stroke-width="1" stroke-linejoin="round"/><polygon points="4.0,12.0 11.5,12.0 11.5,20.0 4.0,27.5" fill="#4a90cc"/><polygon points="4.0,27.5 11.5,20.0 20.5,20.0 20.5,27.5" fill="#8fcdfa"/><rect x="11.500" y="12" width="9" height="8" fill="#fafafa"/></svg>
<svg class="abs" style="left:499.7px;top:81.5px" width="33.0" height="33.0" viewBox="0 0 33.0 33.0" ><polygon points="11.0,6.0 16.5,0.5 32.5,0.5 27.0,6.0" fill="#8fcdfa"/><polygon points="27.0,6.0 32.5,0.5 32.5,16.5 27.0,22.0" fill="#4a90cc"/><polygon points="11.0,6.0 27.0,6.0 27.0,22.0 11.0,22.0" fill="#6db3e8"/><polygon points="0.0,15.5 5.5,10.0 21.5,10.0 16.0,15.5" fill="#8fcdfa"/><polygon points="16.0,15.5 21.5,10.0 21.5,26.0 16.0,31.5" fill="#4a90cc"/><polygon points="0.0,15.5 16.0,15.5 16.0,31.5 0.0,31.5" fill="#6db3e8"/></svg>
<svg class="abs" style="left:543.0px;top:81.5px" width="33.0" height="33.0" viewBox="0 0 33.0 33.0" ><polygon points="2.0,7.0 8.0,1.0 31.0,1.0 25.0,7.0" fill="#8fcdfa"/><polygon points="25.0,7.0 31.0,1.0 31.0,10.0 25.0,16.0" fill="#4a90cc"/><polygon points="2.0,7.0 25.0,7.0 25.0,16.0 2.0,16.0" fill="#6db3e8"/><polygon points="2.0,21.0 25.0,21.0 25.0,31.0 2.0,31.0" fill="#dedede" stroke="#6a6a6a" stroke-width="1" stroke-linejoin="round"/><polygon points="25.0,21.0 30.5,15.0 30.5,25.0 25.0,31.0" fill="#bcbcbc" stroke="#6a6a6a" stroke-width="1" stroke-linejoin="round"/><path d="M0 18.300H25L32 10.500" stroke="#2a8fe6" stroke-width="1.300" fill="none"/></svg>
<svg class="abs" style="left:586.2px;top:81.8px" width="32.0" height="32.0" viewBox="0 0 32.0 32.0" ><path d="M16 4V28M4 16H28" stroke="#333" stroke-width="1.600"/><path d="M16 0L20.500 7h-9ZM16 32L20.500 25h-9ZM0 16L7 11.500v9ZM32 16L25 11.500v9Z" fill="#333"/></svg>
<svg class="abs" style="left:639.9px;top:82.0px" width="33.0" height="32.0" viewBox="0 0 33.0 32.0" ><polygon points="0.5,20.0 0.5,20.0 12.0,20.0 12.0,20.0" fill="#efefef" stroke="#6a6a6a" stroke-width="1" stroke-linejoin="round"/><polygon points="12.0,20.0 12.0,20.0 12.0,31.0 12.0,31.0" fill="#bcbcbc" stroke="#6a6a6a" stroke-width="1" stroke-linejoin="round"/><polygon points="0.5,20.0 12.0,20.0 12.0,31.0 0.5,31.0" fill="#dedede" stroke="#6a6a6a" stroke-width="1" stroke-linejoin="round"/><polygon points="13.0,20.5 17.0,16.5 28.0,16.5 24.0,20.5" fill="#efefef" stroke="#6a6a6a" stroke-width="1" stroke-linejoin="round"/><polygon points="24.0,20.5 28.0,16.5 28.0,27.0 24.0,31.0" fill="#bcbcbc" stroke="#6a6a6a" stroke-width="1" stroke-linejoin="round"/><polygon points="13.0,20.5 24.0,20.5 24.0,31.0 13.0,31.0" fill="#e6e6e6" stroke="#6a6a6a" stroke-width="1" stroke-linejoin="round"/><polygon points="1.0,10.0 4.8,6.2 15.8,6.2 12.0,10.0" fill="#8fcdfa"/><polygon points="12.0,10.0 15.8,6.2 15.8,16.2 12.0,20.0" fill="#4a90cc"/><polygon points="1.0,10.0 12.0,10.0 12.0,20.0 1.0,20.0" fill="#6db3e8"/><path d="M24 0l1.700 5 4.300-3.200-2.200 4.800 5.400.4-4.900 2.200 3.700 3.900-5.100-1.600.1 5.300L24 12.500l-3 4.300.1-5.300-5.100 1.600 3.700-3.900-4.900-2.200 5.400-.4L18 1.800 22.300 5Z" fill="#f5a30a"/></svg>
<svg class="abs" style="left:684.5px;top:84.0px" width="30.0" height="29.0" viewBox="0 0 30.0 29.0" ><path d="M1 9.500L7 2.500C8.500.8 11.500.8 12.500 2.500V10.500L9 12V18L1 27.500Z" fill="#d4d4d4" stroke="#5e5e5e" stroke-linejoin="round"/><path d="M7.500 3.500C8.500 2.500 11 2.500 12 3.500V10L7.500 11.500Z" fill="#f1f1f1" stroke="#5e5e5e" stroke-width=".8"/><path d="M21 4L28 11V27.500L21 21.500V19L16 21V13L21 11Z" fill="#d9d9d9" stroke="#5e5e5e" stroke-linejoin="round"/><path d="M16 13.500C17 12 20 12 21 13.500V20.500L16 22Z" fill="#bdbdbd" stroke="#5e5e5e" stroke-width=".8"/><path d="M10 12.500V18.500M18.500 6V11.500" stroke="#1f8fe8" stroke-width="1.300"/></svg>
<svg class="abs" style="left:749.8px;top:82.0px" width="33.0" height="33.0" viewBox="0 0 33.0 33.0" ><path d="M.5 7L7 .5H26V27.500H.5Z" fill="#ececec" stroke="#e1e1e1"/><circle cx="24" cy="8" r="8" fill="#b9daee"/><path d="M23 3.500V10.500M19.500 7H26.500M27.500 2.800V6M25.900 4.400H29.100" stroke="#fff" stroke-width="1.400"/><path d="M18 23H32M18 29H32" stroke="#dcdcdc" stroke-width="1.400"/><path d="M23 20.500V25.500M27.500 26.500V31.500" stroke="#dcdcdc" stroke-width="1.600"/></svg>
<svg class="abs" style="left:793.0px;top:82.0px" width="33.0" height="33.0" viewBox="0 0 33.0 33.0" ><rect x=".5" y=".5" width="29" height="27" fill="#ededed" stroke="#dfdfdf"/><rect x=".5" y=".5" width="29" height="4" fill="#e2e2e2"/><path d="M4 9H26M4 15H26M4 21H26M4 9V27M11 9V27M18 9V27M26 9V27" stroke="#dcdcdc" stroke-width="1.200"/><circle cx="24" cy="8" r="8" fill="#b9daee"/><path d="M23 3.500V10.500M19.500 7H26.500M27.500 2.800V6M25.900 4.400H29.100" stroke="#fff" stroke-width="1.400"/><path d="M18 23H32M18 29H32" stroke="#dcdcdc" stroke-width="1.400"/><path d="M23 20.500V25.500M27.500 26.500V31.500" stroke="#dcdcdc" stroke-width="1.600"/></svg>
<svg class="abs" style="left:863.8px;top:81.8px" width="32.0" height="33.0" viewBox="0 0 32.0 33.0" ><polygon points="0.5,10.0 9.0,0.5 15.0,0.5 15.0,24.0 8.0,31.0 0.5,31.0" fill="#dedede" stroke="#444" stroke-width="1" stroke-linejoin="round"/><polygon points="9.0,10.0 18.0,0.5 18.0,22.0 9.0,31.5" fill="#5bc77d"/><polygon points="21.5,10.0 30.5,0.5 30.5,20.0 21.5,30.5" fill="#e69b69"/></svg>
<svg class="abs" style="left:924.0px;top:89.7px" width="29.0" height="17.0" viewBox="0 0 29.0 17.0" ><path d="M1 0V9M27.500 0V9M2 4.200H26.500" stroke="#555" stroke-width="1"/><path d="M1.500 4.200L5.500 2.200V6.200ZM27 4.200L23 2.200V6.200Z" fill="#555"/><rect x="0" y="10.500" width="28.500" height="5.800" fill="#f6a400"/><path d="M3 10.500v2.500M6.500 10.500v1.600M10 10.500v2.500M13.500 10.500v1.600M17 10.500v2.500M20.500 10.500v1.600M24 10.500v2.500" stroke="#a86a00" stroke-width=".9"/></svg>
<svg class="abs" style="left:979.0px;top:82.0px" width="33.0" height="33.0" viewBox="0 0 33.0 33.0" ><polygon points="4.5,11.0 11.5,4.0 29.5,4.0 22.5,11.0" fill="#efefef" stroke="#6a6a6a" stroke-width="1" stroke-linejoin="round"/><polygon points="22.5,11.0 29.5,4.0 29.5,23.0 22.5,30.0" fill="#bcbcbc" stroke="#6a6a6a" stroke-width="1" stroke-linejoin="round"/><polygon points="4.5,11.0 22.5,11.0 22.5,30.0 4.5,30.0" fill="#dedede" stroke="#6a6a6a" stroke-width="1" stroke-linejoin="round"/><path d="M0 6.200H9" stroke="#1a86e2" stroke-width="3.600"/><path d="M8 .3L17.500 6.200 8 12Z" fill="#1a86e2"/><g fill="none" stroke="#222" stroke-width="2.400" stroke-linecap="round"><path d="M21 24.500l-2.500 2a2.800 2.800 0 0 0 3.600 4.300l3.300-2.700a2.800 2.800 0 0 0 .3-3.900"/><path d="M27.500 24l2.500-2a2.800 2.800 0 0 0-3.600-4.300l-3.300 2.700a2.800 2.800 0 0 0-.3 3.900"/></g></svg>
<svg class="abs" style="left:1023.0px;top:83.0px" width="30.0" height="30.0" viewBox="0 0 30.0 30.0" ><rect x=".5" y=".5" width="28.500" height="28.500" fill="#8fcdfa" stroke="#5aa6e2"/><path d="M.8 17C4 12.500 7 10.500 10 14c2 2.300 4 6 6.500 7.500 3-3.500 5.500-3.500 8.500 0l3.500 3V29H.8Z" fill="#3f8fcb"/><circle cx="21" cy="8" r="3.100" fill="#fdf7c4"/></svg>
<svg class="abs" style="left:1075.0px;top:79.0px" width="38.0" height="38.0" viewBox="0 0 38.0 38.0" ><rect width="38" height="38" fill="#0696d7"/><rect x="3.500" y="3.500" width="27" height="21.500" fill="none" stroke="#86e58c" stroke-width="1.100" stroke-dasharray="4 1.800"/><path d="M24 17.500L34.500 27.500 30 28l3 5.500-2.500 1.300-2.900-5.600-3.400 3Z" fill="#fff"/></svg>
<div class="abs" style="left:12px;top:144px;width:298px;height:23px;background:#f2f2f2;border:1px solid #c6c6c6"></div>
<svg class="abs" style="left:17px;top:153px" width="11" height="8"><path d="M5 0v8L0 4ZM10.500 0v8L5.500 4Z" fill="#222"/></svg>
<div class="abs" style="left:37px;top:149px;font-size:10.67px;line-height:14px;color:#666;white-space:nowrap"><span class="k" style="width:32.01px"><span style="transform:scaleX(0.750)">ブラウザ</span></span></div>
<svg class="abs" style="left:290px;top:151px" width="10" height="10"><circle cx="5" cy="5" r="4.600" fill="#1a1a1a"/><rect x="2.300" y="4.300" width="5.400" height="1.400" fill="#fff"/></svg>
<div class="abs" style="left:16px;top:174px;width:6px;height:934px;background:rgba(190,192,196,.85)"></div>
<div class="abs" style="left:16.500px;top:186px;width:5px;height:122px;background:#9a9a9c;border-radius:3px"></div>
<svg class="abs" style="left:47.5px;top:177.0px" width="10.0" height="14.0"><use href="#tcol" width="10.0" height="14.0"/></svg>
<div class="row" style="left:66px;top:174px;padding-right:10px"><svg class="abs" style="left:2.7px;top:3.0px" width="14.0" height="14.0"><use href="#gear" width="14.0" height="14.0"/></svg><span class="tx txs" style="margin-left:29.0px"><span class="k" style="width:55.54px"><span style="transform:scaleX(0.744)">ドキュメントの</span></span>設定</span></div>
<svg class="abs" style="left:47.5px;top:201.0px" width="10.0" height="14.0"><use href="#tcol" width="10.0" height="14.0"/></svg>
<div class="row" style="left:66px;top:198px;padding-right:10px"><svg class="abs" style="left:3.2px;top:3.5px" width="16.0" height="13.0"><use href="#fold" width="16.0" height="13.0"/></svg><span class="tx txs" style="margin-left:33.5px">名前<span class="k" style="width:8.48px"><span style="transform:scaleX(0.795)">の</span></span>付<span class="k" style="width:40.01px"><span style="transform:scaleX(0.750)">いたビュー</span></span></span></div>
<svg class="abs" style="left:47.5px;top:225.0px" width="10.0" height="14.0"><use href="#tcol" width="10.0" height="14.0"/></svg>
<div class="row" style="left:66px;top:222px;padding-right:10px"><svg class="abs" style="left:3.2px;top:4.0px" width="16.0" height="12.0"><use href="#eyeoff" width="16.0" height="12.0"/></svg><svg class="abs" style="left:27.9px;top:3.5px" width="16.0" height="13.0"><use href="#fold" width="16.0" height="13.0"/></svg><span class="tx txs" style="margin-left:57.9px">原点</span></div>
<svg class="abs" style="left:47.0px;top:250.0px" width="12.0" height="13.0"><use href="#texp" width="12.0" height="13.0"/></svg>
<div class="row" style="left:66px;top:246px;padding-right:10px"><svg class="abs" style="left:3.2px;top:4.0px" width="16.0" height="12.0"><use href="#eye" width="16.0" height="12.0"/></svg><svg class="abs" style="left:27.9px;top:3.5px" width="16.0" height="13.0"><use href="#fold" width="16.0" height="13.0"/></svg><span class="tx txs" style="margin-left:57.9px"><span class="k" style="width:23.05px"><span style="transform:scaleX(0.720)">ボディ</span></span></span></div>
<svg class="abs" style="left:65.0px;top:274.0px" width="12.0" height="13.0"><use href="#texp" width="12.0" height="13.0"/></svg>
<div class="row" style="left:84px;top:270px;padding-right:10px"><svg class="abs" style="left:3.2px;top:4.0px" width="16.0" height="12.0"><use href="#eye" width="16.0" height="12.0"/></svg><svg class="abs" style="left:27.9px;top:3.5px" width="16.0" height="13.0"><use href="#fold" width="16.0" height="13.0"/></svg><span class="tx txs" style="margin-left:57.9px"><span class="k" style="width:40.01px"><span style="transform:scaleX(0.750)">キーボード</span></span> (8)</span></div>
<div class="row" style="left:102px;top:294px;padding-right:10px"><svg class="abs" style="left:3.2px;top:4.0px" width="16.0" height="12.0"><use href="#eye" width="16.0" height="12.0"/></svg><svg class="abs" style="left:27.9px;top:1.5px" width="16.0" height="17.0"><use href="#body" width="16.0" height="17.0"/></svg><span class="tx txs" style="margin-left:57.9px"><span class="k" style="width:46.73px"><span style="transform:scaleX(0.730)">キーボード・</span></span>上面<span class="k" style="width:6.72px"><span style="transform:scaleX(0.630)">・</span></span>前</span></div>
<div class="row" style="left:102px;top:318px;padding-right:10px"><svg class="abs" style="left:3.2px;top:4.0px" width="16.0" height="12.0"><use href="#eye" width="16.0" height="12.0"/></svg><svg class="abs" style="left:27.9px;top:1.5px" width="16.0" height="17.0"><use href="#body" width="16.0" height="17.0"/></svg><span class="tx txs" style="margin-left:57.9px"><span class="k" style="width:46.73px"><span style="transform:scaleX(0.730)">キーボード・</span></span>上面<span class="k" style="width:6.72px"><span style="transform:scaleX(0.630)">・</span></span>後</span></div>
<div class="row" style="left:102px;top:342px;padding-right:10px"><svg class="abs" style="left:3.2px;top:4.0px" width="16.0" height="12.0"><use href="#eye" width="16.0" height="12.0"/></svg><svg class="abs" style="left:27.9px;top:1.5px" width="16.0" height="17.0"><use href="#body" width="16.0" height="17.0"/></svg><span class="tx txs" style="margin-left:57.9px"><span class="k" style="width:46.73px"><span style="transform:scaleX(0.730)">キーボード・</span></span>底面<span class="k" style="width:6.72px"><span style="transform:scaleX(0.630)">・</span></span>前</span></div>
<div class="row" style="left:102px;top:366px;padding-right:10px"><svg class="abs" style="left:3.2px;top:4.0px" width="16.0" height="12.0"><use href="#eye" width="16.0" height="12.0"/></svg><svg class="abs" style="left:27.9px;top:1.5px" width="16.0" height="17.0"><use href="#body" width="16.0" height="17.0"/></svg><span class="tx txs" style="margin-left:57.9px"><span class="k" style="width:46.73px"><span style="transform:scaleX(0.730)">キーボード・</span></span>底面<span class="k" style="width:6.72px"><span style="transform:scaleX(0.630)">・</span></span>後</span></div>
<div class="row" style="left:102px;top:390px;padding-right:10px"><svg class="abs" style="left:3.2px;top:4.0px" width="16.0" height="12.0"><use href="#eye" width="16.0" height="12.0"/></svg><svg class="abs" style="left:27.9px;top:1.5px" width="16.0" height="17.0"><use href="#body" width="16.0" height="17.0"/></svg><span class="tx txs" style="margin-left:57.9px"><span class="k" style="width:40.01px"><span style="transform:scaleX(0.750)">キーボード</span></span> (1)</span></div>
<div class="row" style="left:102px;top:414px;padding-right:10px"><svg class="abs" style="left:3.2px;top:4.0px" width="16.0" height="12.0"><use href="#eye" width="16.0" height="12.0"/></svg><svg class="abs" style="left:27.9px;top:1.5px" width="16.0" height="17.0"><use href="#body" width="16.0" height="17.0"/></svg><span class="tx txs" style="margin-left:57.9px"><span class="k" style="width:46.73px"><span style="transform:scaleX(0.730)">キーボード・</span></span>脚<span class="k" style="width:6.72px"><span style="transform:scaleX(0.630)">・</span></span>1</span></div>
<div class="row" style="left:102px;top:438px;padding-right:10px"><svg class="abs" style="left:3.2px;top:4.0px" width="16.0" height="12.0"><use href="#eye" width="16.0" height="12.0"/></svg><svg class="abs" style="left:27.9px;top:1.5px" width="16.0" height="17.0"><use href="#body" width="16.0" height="17.0"/></svg><span class="tx txs" style="margin-left:57.9px"><span class="k" style="width:46.73px"><span style="transform:scaleX(0.730)">キーボード・</span></span>脚<span class="k" style="width:6.72px"><span style="transform:scaleX(0.630)">・</span></span>2</span></div>
<div class="row" style="left:102px;top:462px;padding-right:10px"><svg class="abs" style="left:3.2px;top:4.0px" width="16.0" height="12.0"><use href="#eye" width="16.0" height="12.0"/></svg><svg class="abs" style="left:27.9px;top:1.5px" width="16.0" height="17.0"><use href="#body" width="16.0" height="17.0"/></svg><span class="tx txs" style="margin-left:57.9px"><span class="k" style="width:78.74px"><span style="transform:scaleX(0.738)">キーボード・コネクタ</span></span></span></div>
<div class="row" style="left:84px;top:486px;padding-right:10px"><svg class="abs" style="left:3.2px;top:4.0px" width="16.0" height="12.0"><use href="#eye" width="16.0" height="12.0"/></svg><svg class="abs" style="left:27.9px;top:1.5px" width="16.0" height="17.0"><use href="#body" width="16.0" height="17.0"/></svg><span class="tx txs" style="margin-left:57.9px"><span class="k" style="width:29.77px"><span style="transform:scaleX(0.697)">ボディ・</span></span>上面<span class="k" style="width:6.72px"><span style="transform:scaleX(0.630)">・</span></span>上</span></div>
<div class="row" style="left:84px;top:510px;padding-right:10px"><svg class="abs" style="left:3.2px;top:4.0px" width="16.0" height="12.0"><use href="#eye" width="16.0" height="12.0"/></svg><svg class="abs" style="left:27.9px;top:1.5px" width="16.0" height="17.0"><use href="#body" width="16.0" height="17.0"/></svg><span class="tx txs" style="margin-left:57.9px"><span class="k" style="width:29.77px"><span style="transform:scaleX(0.697)">ボディ・</span></span>上面<span class="k" style="width:6.72px"><span style="transform:scaleX(0.630)">・</span></span>左</span></div>
<div class="row" style="left:84px;top:534px;padding-right:10px"><svg class="abs" style="left:3.2px;top:4.0px" width="16.0" height="12.0"><use href="#eye" width="16.0" height="12.0"/></svg><svg class="abs" style="left:27.9px;top:1.5px" width="16.0" height="17.0"><use href="#body" width="16.0" height="17.0"/></svg><span class="tx txs" style="margin-left:57.9px"><span class="k" style="width:29.77px"><span style="transform:scaleX(0.697)">ボディ・</span></span>上面<span class="k" style="width:6.72px"><span style="transform:scaleX(0.630)">・</span></span>右</span></div>
<div class="row" style="left:84px;top:558px;padding-right:10px"><svg class="abs" style="left:3.2px;top:4.0px" width="16.0" height="12.0"><use href="#eye" width="16.0" height="12.0"/></svg><svg class="abs" style="left:27.9px;top:1.5px" width="16.0" height="17.0"><use href="#body" width="16.0" height="17.0"/></svg><span class="tx txs" style="margin-left:57.9px"><span class="k" style="width:29.77px"><span style="transform:scaleX(0.697)">ボディ・</span></span>底面<span class="k" style="width:6.72px"><span style="transform:scaleX(0.630)">・</span></span>下</span></div>
<div class="row" style="left:84px;top:582px;padding-right:10px"><svg class="abs" style="left:3.2px;top:4.0px" width="16.0" height="12.0"><use href="#eye" width="16.0" height="12.0"/></svg><svg class="abs" style="left:27.9px;top:1.5px" width="16.0" height="17.0"><use href="#body" width="16.0" height="17.0"/></svg><span class="tx txs" style="margin-left:57.9px"><span class="k" style="width:29.77px"><span style="transform:scaleX(0.697)">ボディ・</span></span>底面<span class="k" style="width:6.72px"><span style="transform:scaleX(0.630)">・</span></span>左</span></div>
<div class="row" style="left:84px;top:606px;padding-right:10px"><svg class="abs" style="left:3.2px;top:4.0px" width="16.0" height="12.0"><use href="#eye" width="16.0" height="12.0"/></svg><svg class="abs" style="left:27.9px;top:1.5px" width="16.0" height="17.0"><use href="#body" width="16.0" height="17.0"/></svg><span class="tx txs" style="margin-left:57.9px"><span class="k" style="width:29.77px"><span style="transform:scaleX(0.697)">ボディ・</span></span>底面<span class="k" style="width:6.72px"><span style="transform:scaleX(0.630)">・</span></span>右</span></div>
<div class="row" style="left:84px;top:630px;padding-right:10px"><svg class="abs" style="left:3.2px;top:4.0px" width="16.0" height="12.0"><use href="#eye" width="16.0" height="12.0"/></svg><svg class="abs" style="left:27.9px;top:1.5px" width="16.0" height="17.0"><use href="#body" width="16.0" height="17.0"/></svg><span class="tx txs" style="margin-left:57.9px"><span class="k" style="width:56.02px"><span style="transform:scaleX(0.750)">フロントパネル</span></span></span></div>
<div class="row" style="left:84px;top:654px;padding-right:10px"><svg class="abs" style="left:3.2px;top:4.0px" width="16.0" height="12.0"><use href="#eye" width="16.0" height="12.0"/></svg><svg class="abs" style="left:27.9px;top:1.5px" width="16.0" height="17.0"><use href="#body" width="16.0" height="17.0"/></svg><span class="tx txs" style="margin-left:57.9px"><span class="k" style="width:29.77px"><span style="transform:scaleX(0.697)">ボディ・</span></span>背面</span></div>
<div class="row" style="left:84px;top:678px;padding-right:10px"><svg class="abs" style="left:3.2px;top:4.0px" width="16.0" height="12.0"><use href="#eye" width="16.0" height="12.0"/></svg><svg class="abs" style="left:27.9px;top:1.5px" width="16.0" height="17.0"><use href="#body" width="16.0" height="17.0"/></svg><span class="tx txs" style="margin-left:57.9px"><span class="k" style="width:32.01px"><span style="transform:scaleX(0.750)">マウンタ</span></span></span></div>
<div class="row" style="left:84px;top:702px;padding-right:10px"><svg class="abs" style="left:3.2px;top:4.0px" width="16.0" height="12.0"><use href="#eye" width="16.0" height="12.0"/></svg><svg class="abs" style="left:27.9px;top:1.5px" width="16.0" height="17.0"><use href="#body" width="16.0" height="17.0"/></svg><span class="tx txs" style="margin-left:57.9px">内部<span class="k" style="width:38.73px"><span style="transform:scaleX(0.726)">フレーム・</span></span>前</span></div>
<div class="row" style="left:84px;top:726px;padding-right:10px"><svg class="abs" style="left:3.2px;top:4.0px" width="16.0" height="12.0"><use href="#eye" width="16.0" height="12.0"/></svg><svg class="abs" style="left:27.9px;top:1.5px" width="16.0" height="17.0"><use href="#body" width="16.0" height="17.0"/></svg><span class="tx txs" style="margin-left:57.9px">内部<span class="k" style="width:38.73px"><span style="transform:scaleX(0.726)">フレーム・</span></span>左</span></div>
<div class="row" style="left:84px;top:750px;padding-right:10px"><svg class="abs" style="left:3.2px;top:4.0px" width="16.0" height="12.0"><use href="#eye" width="16.0" height="12.0"/></svg><svg class="abs" style="left:27.9px;top:1.5px" width="16.0" height="17.0"><use href="#body" width="16.0" height="17.0"/></svg><span class="tx txs" style="margin-left:57.9px">内部<span class="k" style="width:38.73px"><span style="transform:scaleX(0.726)">フレーム・</span></span>右</span></div>
<div class="row" style="left:84px;top:774px;padding-right:10px"><svg class="abs" style="left:3.2px;top:4.0px" width="16.0" height="12.0"><use href="#eye" width="16.0" height="12.0"/></svg><svg class="abs" style="left:27.9px;top:1.5px" width="16.0" height="17.0"><use href="#body" width="16.0" height="17.0"/></svg><span class="tx txs" style="margin-left:57.9px">FDD1<span class="k" style="width:30.73px"><span style="transform:scaleX(0.720)">・レバー</span></span></span></div>
<div class="row" style="left:84px;top:798px;padding-right:10px"><svg class="abs" style="left:3.2px;top:4.0px" width="16.0" height="12.0"><use href="#eye" width="16.0" height="12.0"/></svg><svg class="abs" style="left:27.9px;top:1.5px" width="16.0" height="17.0"><use href="#body" width="16.0" height="17.0"/></svg><span class="tx txs" style="margin-left:57.9px">FDD1<span class="k" style="width:6.72px"><span style="transform:scaleX(0.630)">・</span></span>LED</span></div>
<div class="row" style="left:84px;top:822px;padding-right:10px"><svg class="abs" style="left:3.2px;top:4.0px" width="16.0" height="12.0"><use href="#eye" width="16.0" height="12.0"/></svg><svg class="abs" style="left:27.9px;top:1.5px" width="16.0" height="17.0"><use href="#body" width="16.0" height="17.0"/></svg><span class="tx txs" style="margin-left:57.9px">FDD2<span class="k" style="width:30.73px"><span style="transform:scaleX(0.720)">・レバー</span></span></span></div>
<div class="row" style="left:84px;top:846px;padding-right:10px"><svg class="abs" style="left:3.2px;top:4.0px" width="16.0" height="12.0"><use href="#eye" width="16.0" height="12.0"/></svg><svg class="abs" style="left:27.9px;top:1.5px" width="16.0" height="17.0"><use href="#body" width="16.0" height="17.0"/></svg><span class="tx txs" style="margin-left:57.9px">FDD2<span class="k" style="width:6.72px"><span style="transform:scaleX(0.630)">・</span></span>LED</span></div>
<div class="row" style="left:84px;top:870px;padding-right:10px"><svg class="abs" style="left:3.2px;top:4.0px" width="16.0" height="12.0"><use href="#eye" width="16.0" height="12.0"/></svg><svg class="abs" style="left:27.9px;top:1.5px" width="16.0" height="17.0"><use href="#body" width="16.0" height="17.0"/></svg><span class="tx txs" style="margin-left:57.9px"><span class="k" style="width:85.15px"><span style="transform:scaleX(0.725)">ジョイスティックポート</span></span> (1) (1)</span></div>
<div class="row" style="left:84px;top:894px;padding-right:10px"><svg class="abs" style="left:3.2px;top:4.0px" width="16.0" height="12.0"><use href="#eye" width="16.0" height="12.0"/></svg><svg class="abs" style="left:27.9px;top:1.5px" width="16.0" height="17.0"><use href="#body" width="16.0" height="17.0"/></svg><span class="tx txs" style="margin-left:57.9px">LED</span></div>
<div class="row" style="left:84px;top:918px;padding-right:10px"><svg class="abs" style="left:3.2px;top:4.0px" width="16.0" height="12.0"><use href="#eye" width="16.0" height="12.0"/></svg><svg class="abs" style="left:27.9px;top:1.5px" width="16.0" height="17.0"><use href="#body" width="16.0" height="17.0"/></svg><span class="tx txs" style="margin-left:57.9px"><span class="k" style="width:62.10px"><span style="transform:scaleX(0.727)">リセットスイッチ</span></span></span></div>
<div class="row" style="left:84px;top:942px;padding-right:10px"><svg class="abs" style="left:3.2px;top:4.0px" width="16.0" height="12.0"><use href="#eye" width="16.0" height="12.0"/></svg><svg class="abs" style="left:27.9px;top:1.5px" width="16.0" height="17.0"><use href="#body" width="16.0" height="17.0"/></svg><span class="tx txs" style="margin-left:57.9px">電源<span class="k" style="width:31.05px"><span style="transform:scaleX(0.727)">スイッチ</span></span></span></div>
<svg class="abs" style="left:47.0px;top:970.0px" width="12.0" height="13.0"><use href="#texp" width="12.0" height="13.0"/></svg>
<div class="row" style="left:66px;top:966px;padding-right:10px"><svg class="abs" style="left:3.2px;top:4.0px" width="16.0" height="12.0"><use href="#eye" width="16.0" height="12.0"/></svg><svg class="abs" style="left:27.9px;top:3.5px" width="16.0" height="13.0"><use href="#fold" width="16.0" height="13.0"/></svg><span class="tx txs" style="margin-left:57.9px"><span class="k" style="width:39.05px"><span style="transform:scaleX(0.732)">キャンバス</span></span></span></div>
<div class="row" style="left:84px;top:990px;width:227.0px"><svg class="abs" style="left:3.2px;top:4.0px" width="16.0" height="12.0"><use href="#eyeoff" width="16.0" height="12.0"/></svg><svg class="abs" style="left:27.9px;top:2.0px" width="16.0" height="16.0"><use href="#img" width="16.0" height="16.0"/></svg><span class="tx lat" style="left:57.9px;width:149px;overflow:hidden">i-img1200x1200-172767953309</span><span class="tx lat" style="left:206.9px">...</span></div>
<div class="row" style="left:84px;top:1014px;width:227.0px"><svg class="abs" style="left:3.2px;top:4.0px" width="16.0" height="12.0"><use href="#eyeoff" width="16.0" height="12.0"/></svg><svg class="abs" style="left:27.9px;top:2.0px" width="16.0" height="16.0"><use href="#img" width="16.0" height="16.0"/></svg><span class="tx lat" style="left:57.9px;width:149px;overflow:hidden">i-img1200x1200-172767953314</span><span class="tx lat" style="left:206.9px">...</span></div>
<div class="row" style="left:84px;top:1038px;width:114.4px"><svg class="abs" style="left:3.2px;top:4.0px" width="16.0" height="12.0"><use href="#eyeoff" width="16.0" height="12.0"/></svg><svg class="abs" style="left:27.9px;top:2.0px" width="16.0" height="16.0"><use href="#img" width="16.0" height="16.0"/></svg><span class="tx lat" style="left:57.9px">pc881fe2</span></div>
<div class="row" style="left:84px;top:1062px;width:227.0px"><svg class="abs" style="left:3.2px;top:4.0px" width="16.0" height="12.0"><use href="#eyeoff" width="16.0" height="12.0"/></svg><svg class="abs" style="left:27.9px;top:2.0px" width="16.0" height="16.0"><use href="#img" width="16.0" height="16.0"/></svg><span class="tx lat" style="left:57.9px;width:149px;overflow:hidden">i-img1200x1200-172767953306</span><span class="tx lat" style="left:206.9px">...</span></div>
<div class="row" style="left:84px;top:1086px;width:227.0px"><svg class="abs" style="left:3.2px;top:4.0px" width="16.0" height="12.0"><use href="#eyeoff" width="16.0" height="12.0"/></svg><svg class="abs" style="left:27.9px;top:2.0px" width="16.0" height="16.0"><use href="#img" width="16.0" height="16.0"/></svg><span class="tx lat" style="left:57.9px;width:149px;overflow:hidden">i-img1200x321-1703852103scy</span><span class="tx lat" style="left:206.9px">...</span></div>
<div class="abs" style="left:12px;top:1131px;width:298px;height:23px;background:#f2f2f2;border:1px solid #c6c6c6"></div>
<div class="abs" style="left:36.500px;top:1136px;font-size:10.67px;line-height:14px;color:#555;white-space:nowrap"><span class="k" style="width:32.01px"><span style="transform:scaleX(0.750)">コメント</span></span></div>
<svg class="abs" style="left:290.500px;top:1138.500px" width="10" height="10"><circle cx="5" cy="5" r="4.600" fill="#1a1a1a"/><path d="M2.300 5h5.400M5 2.300v5.400" stroke="#fff" stroke-width="1.300"/></svg>
<div class="abs" style="left:850px;top:1130.500px;width:237px;height:22px;background:#f1f1f1"></div>
<svg class="abs" style="left:854.0px;top:1133.5px" width="16" height="17"><path d="M8 1V15" stroke="#222" stroke-width="1.600"/><path d="M8 0L10.500 3.500h-5Z" fill="#222"/><ellipse cx="8" cy="9.500" rx="6.500" ry="3" fill="none" stroke="#222" stroke-width="1.300"/><path d="M1 11.500L4.500 9.800 4.300 13.600Z" fill="#222"/><rect x="7" y="12" width="2" height="4.500" fill="#fff" stroke="#222" stroke-width=".7"/></svg>
<svg class="abs" style="left:874.0px;top:1140.5px" width="6" height="4"><path d="M0 0H5.600L2.800 3.400Z" fill="#222"/></svg>
<svg class="abs" style="left:885.5px;top:1134.0px" width="17" height="16"><rect x="1" y="5.500" width="15" height="9.500" fill="#e8e8e8" stroke="#333" stroke-width="1.200"/><rect x="4" y="8.500" width="9" height="3.600" fill="#aab8cc" stroke="#333" stroke-width=".9"/><path d="M2.500 5L5 1.500l3 1.500L11 .8l4 2.200V5" fill="none" stroke="#333" stroke-width="1.100"/></svg>
<svg class="abs" style="left:912.0px;top:1133.5px" width="17" height="17"><path d="M4.500 9.500V4.500a1 1 0 0 1 2 0V2.500a1 1 0 0 1 2 0V2a1 1 0 0 1 2 0v1.500a1 1 0 0 1 2 0V10c0 4-2 6-5 6-2.500 0-3.500-1.200-5-3.500L1 9.500c-.5-1 1-1.800 1.800-.8Z" fill="#fff" stroke="#222" stroke-width="1.100" stroke-linejoin="round"/><path d="M6.500 4.500V8.500M8.500 2.500V8M10.500 3.500V8.500" stroke="#222" stroke-width=".8"/></svg>
<svg class="abs" style="left:937.5px;top:1133.5px" width="18" height="17"><circle cx="6.500" cy="8.500" r="4.800" fill="#dfe9f5" stroke="#222" stroke-width="1.500"/><path d="M10 12L14.500 16.500" stroke="#222" stroke-width="2.400"/><path d="M12 3.500h5M14.500 1v5M12 8h5" stroke="#222" stroke-width="1"/></svg>
<svg class="abs" style="left:963.0px;top:1133.5px" width="19" height="18"><rect x=".8" y=".8" width="13" height="12.500" fill="none" stroke="#444" stroke-width="1" stroke-dasharray="2 1.200"/><circle cx="8" cy="7.500" r="5.300" fill="#dfe9f5" stroke="#222" stroke-width="1.500"/><path d="M12 11.500L17 16.500" stroke="#222" stroke-width="2.500"/></svg>
<svg class="abs" style="left:985.0px;top:1140.5px" width="6" height="4"><path d="M0 0H5.600L2.800 3.400Z" fill="#222"/></svg>
<svg class="abs" style="left:996.5px;top:1133.5px" width="17" height="17"><rect x=".8" y=".8" width="15.400" height="11.500" fill="#e6e6e6" stroke="#333" stroke-width="1.300"/><rect x="3" y="3" width="11" height="7" fill="#6aa5e6"/><path d="M8.500 12.500V15M4.500 15.800H12.500" stroke="#333" stroke-width="1.500"/></svg>
<svg class="abs" style="left:1016.0px;top:1140.5px" width="6" height="4"><path d="M0 0H5.600L2.800 3.400Z" fill="#222"/></svg>
<svg class="abs" style="left:1027.5px;top:1133.5px" width="17" height="17"><rect x=".5" y=".5" width="16" height="16" fill="#d9d9d9" stroke="#333" stroke-width="1"/><path d="M3.7 .5V16.500M.5 3.7H16.500" stroke="#333" stroke-width=".8"/><path d="M6.9 .5V16.500M.5 6.9H16.500" stroke="#333" stroke-width=".8"/><path d="M10.1 .5V16.500M.5 10.1H16.500" stroke="#333" stroke-width=".8"/><path d="M13.3 .5V16.500M.5 13.3H16.500" stroke="#333" stroke-width=".8"/></svg>
<svg class="abs" style="left:1046.5px;top:1140.5px" width="6" height="4"><path d="M0 0H5.600L2.800 3.400Z" fill="#222"/></svg>
<svg class="abs" style="left:1058.5px;top:1134.5px" width="17" height="15"><rect x=".7" y=".7" width="15.600" height="13.600" fill="#4a78c8" stroke="#1e3a78" stroke-width="1.200"/><rect x="2.500" y="2.500" width="5" height="4" fill="#dbe6f8"/><rect x="9.500" y="2.500" width="5" height="4" fill="#dbe6f8"/><rect x="2.500" y="8.500" width="5" height="4" fill="#dbe6f8"/><rect x="9.500" y="8.500" width="5" height="4" fill="#dbe6f8"/></svg>
<svg class="abs" style="left:1077.5px;top:1140.5px" width="6" height="4"><path d="M0 0H5.600L2.800 3.400Z" fill="#222"/></svg>
</body></html>
